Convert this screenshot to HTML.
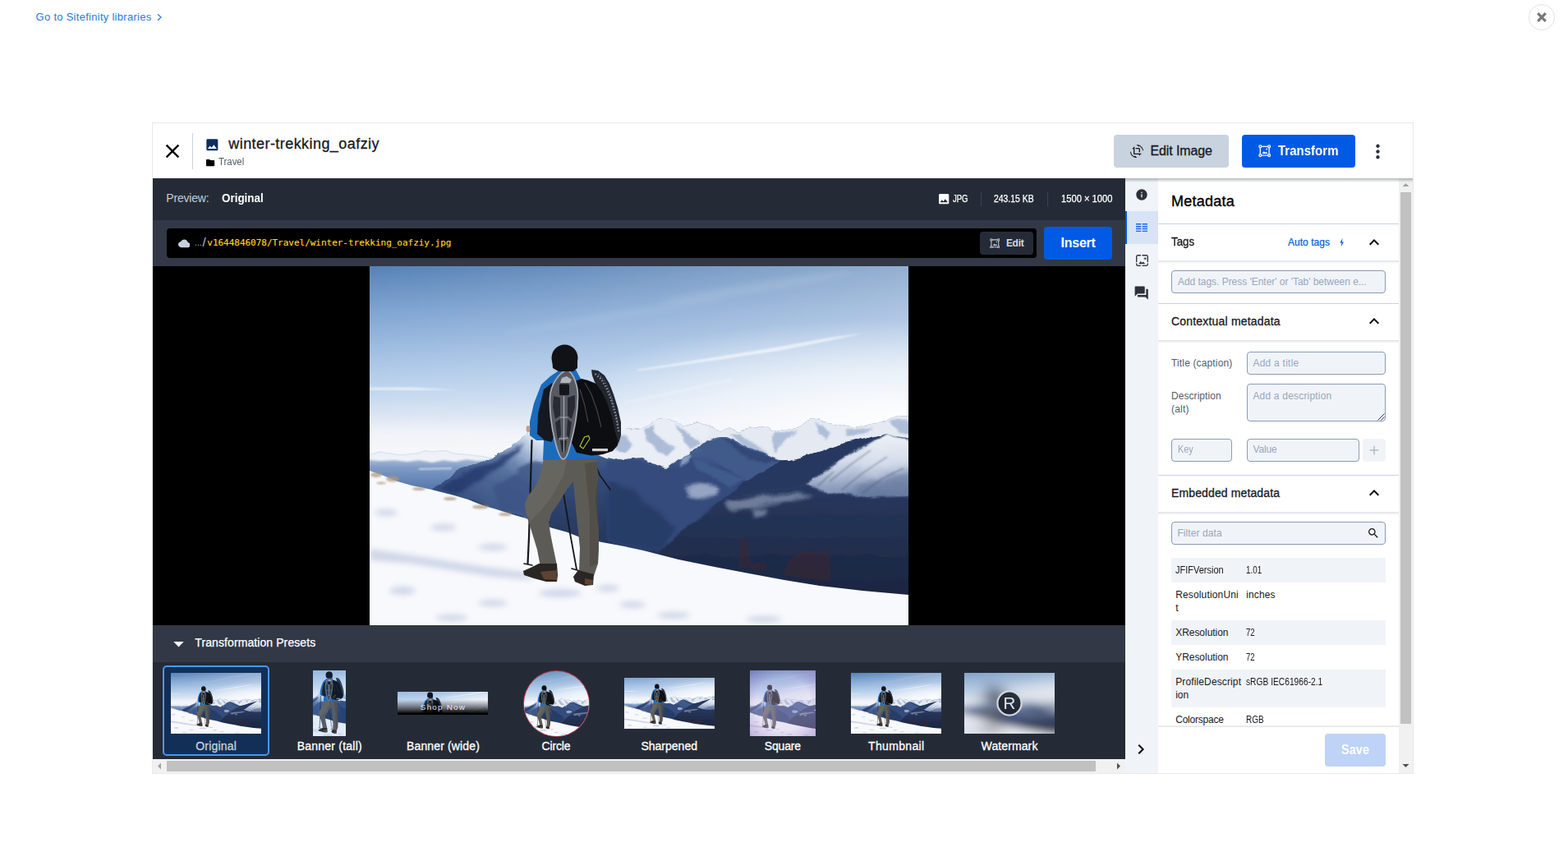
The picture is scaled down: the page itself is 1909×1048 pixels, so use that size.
<!DOCTYPE html>
<html lang="en"><head><meta charset="utf-8"><title>Media Library</title>
<style>
html,body{margin:0;padding:0;background:#fff}
body{width:1909px;height:1048px;position:relative;overflow:hidden;font-family:"Liberation Sans",sans-serif}
.t{position:absolute;white-space:nowrap;display:block}
.inp{position:absolute;box-sizing:border-box;background:#f0f4f9;border:1px solid #8a9ab5;border-radius:4px}
svg{display:block}
</style></head><body>

<span class="t" style="left:43.60px;top:13.80px;font:400 13px/1 'Liberation Sans',sans-serif;color:#2a7ad8;letter-spacing:0.277px;">Go to Sitefinity libraries</span>
<svg style="position:absolute;left:189px;top:15px" width="10" height="12" viewBox="0 0 10 12" fill="none" stroke="#2a7ad8" stroke-width="1.2"><path d="M3 2.2L7 6 3 9.8"/></svg>
<div style="position:absolute;left:1861px;top:5px;width:32px;height:32px;background:#fff;border:1px solid #e3e3e3;border-radius:50%;box-sizing:border-box"></div>
<svg style="position:absolute;left:1861px;top:5px" width="32" height="32" viewBox="0 0 32 32" stroke="#777" stroke-width="3.1" ><path d="M11.2 11.2L20.8 20.8M20.8 11.2L11.2 20.8"/></svg>
<div style="position:absolute;left:185px;top:149px;width:1536px;height:793px;background:#fff;border:1px solid #e9e9e9;box-sizing:border-box"></div>
<svg style="position:absolute;left:195.7px;top:169.7px;color:#000" width="28" height="28" viewBox="0 0 24 24" fill="#000" ><path d="M19 6.41L17.59 5 12 10.59 6.41 5 5 6.41 10.59 12 5 17.59 6.41 19 12 13.41 17.59 19 19 17.59 13.41 12z"/></svg>
<div style="position:absolute;left:234px;top:162px;width:1px;height:44px;background:#c9d4e2;"></div>
<svg style="position:absolute;left:248.7px;top:166.7px;color:#0c2d5e" width="18.7" height="18.7" viewBox="0 0 24 24" fill="#0c2d5e" ><path d="M21 19V5c0-1.1-.9-2-2-2H5c-1.1 0-2 .9-2 2v14c0 1.1.9 2 2 2h14c1.1 0 2-.9 2-2zM8.5 13.5l2.5 3.01L14.5 12l4.5 6H5l3.5-4.5z"/></svg>
<span class="t" style="left:278.30px;top:166.46px;font:400 18px/1 'Liberation Sans',sans-serif;color:#17191c;letter-spacing:0.435px;-webkit-text-stroke:0.3px #17191c;">winter-trekking_oafziy</span>
<svg style="position:absolute;left:250px;top:191.7px;color:#000" width="12.2" height="12.2" viewBox="0 0 24 24" fill="#000" ><path d="M10 4H4c-1.1 0-1.99.9-1.99 2L2 18c0 1.1.9 2 2 2h16c1.1 0 2-.9 2-2V8c0-1.1-.9-2-2-2h-8l-2-2z"/></svg>
<span class="t" style="left:265.80px;top:190.74px;font:400 12px/1 'Liberation Sans',sans-serif;color:#535c69;transform:scaleX(0.9485);transform-origin:0 0;">Travel</span>
<div style="position:absolute;left:1356px;top:164px;width:140px;height:40px;background:#c8d3df;border-radius:4px"></div>
<svg style="position:absolute;left:1376px;top:176px;color:#17191c" width="16" height="16" viewBox="0 0 24 24" fill="#17191c" ><path d="M7.47 21.49C4.2 19.93 1.86 16.76 1.5 13H0c.51 6.16 5.66 11 11.95 11 .23 0 .44-.02.66-.03L8.8 20.15l-1.33 1.34zM12.05 0c-.23 0-.44.02-.66.04l3.81 3.81 1.33-1.33C19.8 4.07 22.14 7.24 22.5 11H24c-.51-6.16-5.66-11-11.95-11zM16 14h2V8c0-1.11-.9-2-2-2h-6v2h6v6zm-8 2V4H6v2H4v2h2v8c0 1.1.89 2 2 2h8v2h2v-2h2v-2H8z"/></svg>
<span class="t" style="left:1400.50px;top:175.76px;font:400 16px/1 'Liberation Sans',sans-serif;color:#17191c;letter-spacing:-0.109px;-webkit-text-stroke:0.3px #17191c;">Edit Image</span>
<div style="position:absolute;left:1512px;top:164px;width:138px;height:40px;background:#005ae6;border-radius:4px"></div>
<svg style="position:absolute;left:1532.3px;top:176.3px;color:#fff" width="15.4" height="15.4" viewBox="0 0 24 24" fill="#fff" ><g fill="none" stroke="currentColor" stroke-width="2"><circle cx="3.6" cy="3.6" r="2.3"/><circle cx="20.4" cy="3.6" r="2.3"/><circle cx="3.6" cy="20.4" r="2.3"/><circle cx="20.4" cy="20.4" r="2.3"/><path d="M5.9 3.6h12.2M5.9 20.4h12.2M3.6 5.9v12.2M20.4 5.9v12.2"/></g><path fill="currentColor" d="M7 17l3.6-4.6 2.5 3 1.7-2.1 2.6 3.7zM14.4 8.6a1.4 1.4 0 1 0 2.8 0 1.4 1.4 0 1 0-2.8 0z"/></svg>
<span class="t" style="left:1556.30px;top:175.76px;font:700 16px/1 'Liberation Sans',sans-serif;color:#fff;transform:scaleX(0.9394);transform-origin:0 0;">Transform</span>
<svg style="position:absolute;left:1663.5px;top:170.5px;color:#2b303b" width="27" height="27" viewBox="0 0 24 24" fill="#2b303b" ><path d="M12 8c1.1 0 2-.9 2-2s-.9-2-2-2-2 .9-2 2 .9 2 2 2zm0 2c-1.1 0-2 .9-2 2s.9 2 2 2 2-.9 2-2-.9-2-2-2zm0 6c-1.1 0-2 .9-2 2s.9 2 2 2 2-.9 2-2-.9-2-2-2z"/></svg>
<div style="position:absolute;left:186px;top:217px;width:1184px;height:51px;background:#252b36;"></div>
<div style="position:absolute;left:186px;top:268px;width:1184px;height:56px;background:#323845;"></div>
<div style="position:absolute;left:186px;top:324px;width:1184px;height:437px;background:#000;"></div>
<div style="position:absolute;left:186px;top:761px;width:1184px;height:45px;background:#323845;"></div>
<div style="position:absolute;left:186px;top:806px;width:1184px;height:118px;background:#252b36;"></div>
<span class="t" style="left:202.30px;top:234.15px;font:400 14px/1 'Liberation Sans',sans-serif;color:#c3cbd7;letter-spacing:-0.198px;">Preview:</span>
<span class="t" style="left:270.10px;top:234.15px;font:700 14px/1 'Liberation Sans',sans-serif;color:#fff;transform:scaleX(0.9585);transform-origin:0 0;">Original</span>
<svg style="position:absolute;left:1140.7px;top:234px;color:#fff" width="16.3" height="16.3" viewBox="0 0 24 24" fill="#fff" ><path d="M21 19V5c0-1.1-.9-2-2-2H5c-1.1 0-2 .9-2 2v14c0 1.1.9 2 2 2h14c1.1 0 2-.9 2-2zM8.5 13.5l2.5 3.01L14.5 12l4.5 6H5l3.5-4.5z"/></svg>
<span class="t" style="left:1159.50px;top:235.54px;font:400 12px/1 'Liberation Sans',sans-serif;color:#fff;transform:scaleX(0.7927);transform-origin:0 0;-webkit-text-stroke:0.25px #fff;">JPG</span>
<div style="position:absolute;left:1194px;top:233px;width:1px;height:18px;background:#3a4150;"></div>
<span class="t" style="left:1210.30px;top:235.54px;font:400 12px/1 'Liberation Sans',sans-serif;color:#fff;transform:scaleX(0.8672);transform-origin:0 0;-webkit-text-stroke:0.25px #fff;">243.15 KB</span>
<div style="position:absolute;left:1275px;top:233px;width:1px;height:18px;background:#3a4150;"></div>
<span class="t" style="left:1291.60px;top:235.54px;font:400 12px/1 'Liberation Sans',sans-serif;color:#fff;transform:scaleX(0.9319);transform-origin:0 0;-webkit-text-stroke:0.25px #fff;">1500 × 1000</span>
<div style="position:absolute;left:203px;top:278px;width:1059px;height:36px;background:#000;border-radius:4px"></div>
<svg style="position:absolute;left:216.6px;top:289px;color:#c8d0dc" width="14.6" height="14.6" viewBox="0 0 24 24" fill="#c8d0dc" ><path d="M19.35 10.04C18.67 6.59 15.64 4 12 4 9.11 4 6.6 5.64 5.35 8.04 2.34 8.36 0 10.91 0 14c0 3.31 2.69 6 6 6h13c2.76 0 5-2.24 5-5 0-2.64-2.05-4.78-4.65-4.96z"/></svg>
<span class="t" style="left:237.00px;top:289.69px;font:400 11px/1 'Liberation Sans',sans-serif;color:#b4bfd0;transform:scaleX(0.8182);transform-origin:0 0;">…</span>
<span class="t" style="left:246.60px;top:287.30px;font:400 15px/1 'Liberation Sans',sans-serif;color:#b4c3dc;">/</span>
<span class="t" style="left:252.30px;top:289.69px;font:400 11px/1 'DejaVu Sans Mono','Liberation Mono',monospace;color:#ffd21f;letter-spacing:-0.021px;-webkit-text-stroke:0.15px #ffd21f;">v1644846078/Travel/winter-trekking_oafziy.jpg</span>
<div style="position:absolute;left:1193px;top:282px;width:65px;height:28px;background:#252b36;border-radius:4px"></div>
<svg style="position:absolute;left:1204.8px;top:289.6px;color:#c3cbd7" width="12.6" height="12.6" viewBox="0 0 24 24" fill="#c3cbd7" ><g fill="none" stroke="currentColor" stroke-width="2"><circle cx="3.6" cy="3.6" r="2.3"/><circle cx="20.4" cy="3.6" r="2.3"/><circle cx="3.6" cy="20.4" r="2.3"/><circle cx="20.4" cy="20.4" r="2.3"/><path d="M5.9 3.6h12.2M5.9 20.4h12.2M3.6 5.9v12.2M20.4 5.9v12.2"/></g><path fill="currentColor" d="M7 17l3.6-4.6 2.5 3 1.7-2.1 2.6 3.7zM14.4 8.6a1.4 1.4 0 1 0 2.8 0 1.4 1.4 0 1 0-2.8 0z"/></svg>
<span class="t" style="left:1224.90px;top:289.54px;font:700 12px/1 'Liberation Sans',sans-serif;color:#d3d9e2;letter-spacing:-0.288px;">Edit</span>
<div style="position:absolute;left:1271px;top:276px;width:83px;height:40px;background:#005ae6;border-radius:4px"></div>
<span class="t" style="left:1291.60px;top:288.36px;font:700 16px/1 'Liberation Sans',sans-serif;color:#fff;letter-spacing:-0.274px;">Insert</span>
<svg style="position:absolute;left:450px;top:324px" width="656" height="437" viewBox="0 0 656 437" preserveAspectRatio="none">
<defs>
<linearGradient id="msky" gradientUnits="userSpaceOnUse" x1="0" y1="0" x2="0" y2="222">
<stop offset="0" stop-color="#5681b6"/>
<stop offset="0.06" stop-color="#618bbd"/>
<stop offset="0.25" stop-color="#80a5d2"/>
<stop offset="0.5" stop-color="#a6c3e5"/>
<stop offset="0.7" stop-color="#c4d8ef"/>
<stop offset="0.85" stop-color="#e1e8f4"/>
<stop offset="1" stop-color="#f0f2f8"/>
</linearGradient>
<linearGradient id="mskyr" x1="0" y1="0" x2="1" y2="0">
<stop offset="0" stop-color="#fff" stop-opacity="0"/>
<stop offset="0.35" stop-color="#fff" stop-opacity="0.1"/>
<stop offset="1" stop-color="#fff" stop-opacity="0.36"/>
</linearGradient>
<radialGradient id="mglow" gradientUnits="userSpaceOnUse" cx="640" cy="185" r="1" gradientTransform="translate(640 185) scale(440 120) translate(-640 -185)">
<stop offset="0" stop-color="#fff" stop-opacity="0.9"/>
<stop offset="0.5" stop-color="#fff" stop-opacity="0.55"/>
<stop offset="1" stop-color="#fff" stop-opacity="0"/>
</radialGradient>
<linearGradient id="mhz" gradientUnits="userSpaceOnUse" x1="0" y1="232" x2="0" y2="275">
<stop offset="0" stop-color="#b4c5df"/>
<stop offset="0.3" stop-color="#809bc5"/>
<stop offset="1" stop-color="#4f72a8"/>
</linearGradient>
<linearGradient id="mbase" gradientUnits="userSpaceOnUse" x1="0" y1="195" x2="0" y2="400">
<stop offset="0" stop-color="#56739f"/>
<stop offset="0.25" stop-color="#364f80"/>
<stop offset="0.55" stop-color="#2a3d66"/>
<stop offset="1" stop-color="#1f2b49"/>
</linearGradient>
<linearGradient id="mlow" gradientUnits="userSpaceOnUse" x1="0" y1="270" x2="0" y2="400">
<stop offset="0" stop-color="#28385e"/>
<stop offset="1" stop-color="#1b2640"/>
</linearGradient>
<linearGradient id="mface" gradientUnits="userSpaceOnUse" x1="0" y1="205" x2="0" y2="282">
<stop offset="0" stop-color="#eef1f7"/>
<stop offset="0.45" stop-color="#d3dbea"/>
<stop offset="1" stop-color="#7487ab"/>
</linearGradient>
<linearGradient id="mm0" gradientUnits="userSpaceOnUse" x1="190" y1="200" x2="120" y2="290">
<stop offset="0" stop-color="#e3e9f3"/>
<stop offset="0.2" stop-color="#9cb0d2"/>
<stop offset="0.45" stop-color="#56739f"/>
<stop offset="1" stop-color="#38507f"/>
</linearGradient>
<filter id="mb1" x="-20%" y="-20%" width="140%" height="140%"><feGaussianBlur stdDeviation="1"/></filter>
<filter id="mb2" x="-20%" y="-20%" width="140%" height="140%"><feGaussianBlur stdDeviation="2"/></filter>
<filter id="mb3" x="-30%" y="-30%" width="160%" height="160%"><feGaussianBlur stdDeviation="3.5"/></filter>
<filter id="mb6" x="-30%" y="-30%" width="160%" height="160%"><feGaussianBlur stdDeviation="7"/></filter>
<filter id="mrough" x="-10" y="150" width="690" height="287" filterUnits="userSpaceOnUse" primitiveUnits="userSpaceOnUse">
<feTurbulence type="fractalNoise" baseFrequency="0.03 0.05" numOctaves="4" seed="7" result="n"/>
<feDisplacementMap in="SourceGraphic" in2="n" scale="9" xChannelSelector="R" yChannelSelector="G"/>
</filter>
</defs>
<rect width="656" height="437" fill="url(#msky)"/>
<rect width="656" height="240" fill="url(#mskyr)"/>
<rect width="656" height="320" fill="url(#mglow)"/>
<ellipse cx="60" cy="215" rx="200" ry="22" fill="#fff" opacity="0.35" filter="url(#mb6)"/>
<!-- contrails -->
<g fill="#fff">
<polygon points="326,126 420,111 500,98 560,87 603,81.5 560,90.5 500,102.5 420,114.5 326,127.5" opacity="0.62" filter="url(#mb1)"/>
<polygon points="310,165 380,150 440,137 441,139 382,153 310,167" opacity="0.22" filter="url(#mb1)"/>
<polygon points="0,148 50,147.5 105,150.5 50,151 0,150.5" opacity="0.6" filter="url(#mb1)"/>
<ellipse cx="470" cy="26" rx="120" ry="6" opacity="0.1" transform="rotate(-9 470 26)" filter="url(#mb3)"/>
<ellipse cx="300" cy="60" rx="140" ry="5" opacity="0.07" transform="rotate(-9 300 60)" filter="url(#mb3)"/>
</g>
<!-- distant left range -->
<path d="M0,229 L7,227 L14,225.5 L20,227 L26,227.5 L34,229 L43,229 L52,228 L60,227 L65,225 L69,224 L74,225.5 L80,225 L86,224.5 L93,224 L98,226 L103,227.5 L112,228.5 L120,229 L130,230.5 L137,231 L146,233 L160,236 L200,245 L200,300 L0,300 Z" fill="url(#mhz)"/>
<path d="M0,229 L7,227 L14,225.5 L20,227 L26,227.5 L34,229 L43,229 L52,228 L60,227 L65,225 L69,224 L74,225.5 L80,225 L86,224.5 L93,224 L98,226 L103,227.5 L112,228.5 L120,229 L130,230.5 L137,231 L146,233 L150,236 L130,237 L118,235 L104,238 L90,236 L76,239 L60,236 L46,238 L30,236 L14,237 L0,236 Z" fill="#eef2f8" filter="url(#mb1)"/>
<path d="M60,246 L100,245 L100,247 L60,248 Z" fill="#dbe4f1" opacity="0.8" filter="url(#mb1)"/>
<g filter="url(#mrough)">
<!-- mountain base -->
<path d="M75,271.5 L86,265 L103,253 L120,244.7 L137,237.8 L149,231 L163,224 L172,219 L180,212 L189,205 L193,201 L215,198 L290,200 L310,200 L330,198 L348,187 L358,186 L370,190 L382,196 L398,191 L410,196 L426,202 L438,196 L450,200 L466,196 L482,197 L490,202 L510,198 L526,192 L540,187 L550,189 L570,192 L590,196 L610,192 L630,190 L642.6,183 L676,185 L676,420 L75,420 Z" fill="url(#mbase)"/>
<!-- far snowy band right -->
<path d="M400,194 L410,196 L426,202 L438,196 L450,200 L466,196 L482,197 L490,202 L510,198 L526,192 L540,187 L550,189 L570,192 L590,196 L610,192 L630,190 L642.6,183 L676,185 L676,212 L640,207 L628,203 L610,208 L590,214 L570,219 L550,226 L530,232 L510,236 L496,236 L480,228 L466,222 L450,214 L436,208 L426,208 L412,212 L402,216 Z" fill="#e4e9f2"/>
<g fill="#9db0d0" opacity="0.75" filter="url(#mb1)">
<path d="M440,204 L452,202 L462,212 L474,222 L486,230 L470,226 L454,216 Z"/>
<path d="M492,204 L506,202 L520,198 L512,208 L500,218 L494,228 L488,214 Z"/>
<path d="M544,192 L552,196 L562,204 L556,214 L546,204 Z"/>
<path d="M580,198 L596,198 L612,196 L600,206 L584,208 Z"/>
<path d="M634,190 L644,188 L676,192 L676,206 L644,202 Z"/>
</g>
<!-- center blue mountain -->
<path d="M400,219 L412,213 L430,208.5 L444,214 L460,222 L480,230 L500,237 L488,246 L470,256 L456,263 L440,252 L424,240 L410,230 Z" fill="#3f5a8a"/>
<path d="M430,209 L444,214 L460,222 L480,230 L500,237 L480,240 L462,234 L446,224 Z" fill="#2f4573" opacity="0.8" filter="url(#mb1)"/>
<!-- M1 snow (right behind person) -->
<path d="M280,199 L290,200 L310,200 L330,198 L348,187 L358,186 L370,190 L382,196 L398,191 L410,196 L414,206 L402,218 L390,228 L376,234 L360,246 L350,242 L330,234 L310,236 L290,232 L280,228 Z" fill="#e9edf5"/>
<g fill="#9db0d0" opacity="0.8" filter="url(#mb1)">
<path d="M334,198 L346,192 L350,204 L360,214 L372,222 L364,230 L350,226 L340,214 Z"/>
<path d="M372,194 L384,200 L396,210 L404,214 L392,224 L384,214 Z"/>
<path d="M296,204 L312,206 L322,216 L312,226 L298,222 Z"/>
<path d="M380,232 L392,228 L388,240 L376,244 Z"/>
</g>
<!-- M1 face darker parts -->
<path d="M290,236 L330,238 L360,248 L380,240 L392,232 L420,244 L456,262 L436,280 L414,298 L390,314 L370,334 L356,346 L333,346 L290,335 Z" fill="#344b7b" filter="url(#mb1)"/>
<path d="M290,262 L320,274 L350,296 L372,318 L356,346 L333,346 L290,335 Z" fill="#283b65" opacity="0.85" filter="url(#mb2)"/>
<path d="M392,232 L420,244 L456,262 L440,268 L416,256 L398,246 Z" fill="#425e90" opacity="0.8" filter="url(#mb1)"/>
<path d="M386,268 L400,264 L414,266 L426,270 L420,280 L404,284 L390,282 Z" fill="#b5c3da" opacity="0.75" filter="url(#mb2)"/>
<!-- dark band (front ridge shadow face) -->
<path d="M628.5,203 L610,208 L590,214 L570,219 L550,226 L530,232 L510,236 L500,237 L488,246 L470,256 L456,263 L436,280 L470,276 L500,272 L530,267 L550,252 L570.5,238 L590.5,226 L610.5,214 Z" fill="#273960"/>
<!-- snowy face -->
<path d="M628.5,203 L642,209 L676,216 L676,279 L620,281 L590,281 L560,276 L540,270 L530,266 L550,252 L570.5,238 L590.5,226 L610.5,214 Z" fill="url(#mface)" filter="url(#mb1)"/>
<path d="M600,262 L630,256 L676,252 L676,282 L620,284 L590,282 Z" fill="#53688f" opacity="0.55" filter="url(#mb3)"/>
<!-- lower dark mass -->
<path d="M436,280 L470,276 L500,272 L530,267 L560,276 L590,281 L620,282 L676,280 L676,420 L340,420 L356,346 L372,330 L390,314 L414,298 Z" fill="url(#mlow)" filter="url(#mb1)"/>
<g fill="#a9b7d0" opacity="0.55" filter="url(#mb2)">
<path d="M432,288 L460,282 L490,280 L520,276 L540,280 L516,286 L486,290 L458,296 L440,300 Z"/>
<path d="M466,296 L486,294 L482,302 L468,304 Z"/>
</g>
<!-- M0 (left of person) -->
<path d="M75,271.5 L86,265 L103,253 L120,244.7 L137,237.8 L149,231 L163,224 L172,219 L180,212 L189,205 L193,201 L200,199 L218,200 L218,320 L189,306.5 L154.6,296 L120,284 Z" fill="url(#mm0)"/>
<path d="M84,270 L110,256 L140,242 L170,226 L190,212 L178,230 L150,250 L124,268 L104,278 Z" fill="#22366a" opacity="0.75" filter="url(#mb2)"/>
<path d="M150,270 L180,250 L200,236 L215,240 L215,312 L189,304 L160,295 Z" fill="#3a5384" opacity="0.8" filter="url(#mb2)"/>
</g>
<!-- bushes -->
<g fill="#40282e" opacity="0.5" filter="url(#mb1)">
<path d="M449,366 L451,344 L454,330 L457,328 L460,340 L463,356 L466,368 Z"/>
<ellipse cx="474" cy="366" rx="10" ry="5"/>
<path d="M504,376 L510,358 L520,350 L532,346 L546,350 L556,344 L562,360 L560,384 Z"/>
</g>
<g stroke="#3a4c74" stroke-width="1.4" opacity="0.5" fill="none" filter="url(#mb1)">
<path d="M560,262 L585,242 L610,224 M575,272 L600,252 L630,232 M600,276 L625,258 L650,246 M545,268 L565,250"/>
</g>
<!-- snow slope -->
<path d="M0,249 L17,255 L34,262 L51.5,267 L75.6,272 L103,279 L120,284 L137.4,291 L154.6,296 L171.7,301.4 L189,306.5 L221.5,318.5 L240.4,323.7 L257.6,330.6 L281.7,335.7 L310,341 L333,346 L376,357 L420,366 L462,374 L505,382 L548,389 L600,395 L656,400 L656,437 L0,437 Z" fill="#f8f9fc"/>
<!-- grass patches -->
<g fill="#b09a7c" opacity="0.75" filter="url(#mb1)">
<ellipse cx="28" cy="259" rx="8" ry="3.5"/>
<ellipse cx="8" cy="254" rx="7" ry="3"/>
<ellipse cx="14" cy="264" rx="6" ry="1.5"/>
<ellipse cx="60" cy="271" rx="8" ry="2"/>
<ellipse cx="98" cy="283" rx="8" ry="2"/>
<ellipse cx="135" cy="293" rx="10" ry="2.5"/>
<ellipse cx="165" cy="302" rx="8" ry="2"/>
</g>
<!-- snow shadows -->
<g fill="#c7d0e4" opacity="0.85" filter="url(#mb3)">
<path d="M0,344 L40,350 L90,358 L140,366 L188,372 L200,382 L150,378 L100,370 L50,362 L0,358 Z"/>
<ellipse cx="20" cy="300" rx="14" ry="4"/>
<ellipse cx="90" cy="318" rx="16" ry="4"/>
<ellipse cx="150" cy="342" rx="18" ry="4"/>
<ellipse cx="40" cy="395" rx="16" ry="5"/>
<ellipse cx="150" cy="410" rx="18" ry="4"/>
<ellipse cx="290" cy="392" rx="14" ry="4"/>
<ellipse cx="320" cy="412" rx="16" ry="4"/>
<ellipse cx="370" cy="425" rx="20" ry="4"/>
<ellipse cx="232" cy="398" rx="26" ry="5"/>
<ellipse cx="480" cy="430" rx="22" ry="4"/>
<ellipse cx="100" cy="428" rx="20" ry="4"/>
</g>

<g stroke="#15171c" stroke-linecap="round" fill="none">
<path d="M197.5,212 L196,262 L194,330 L192.5,362" stroke-width="2.2"/>
<path d="M188,362 L198,364" stroke-width="1.6"/>
<path d="M235,270 L244,325 L252,369" stroke-width="1.8"/>
<path d="M246,368 L256,371" stroke-width="1.6"/>
<path d="M273,236 L280,254 L293,272" stroke-width="1.6"/>
</g>
<path d="M212,235 L277,235 L278,258 L275,282 L277,305 L279,322 L279,345 L278,362 L273,377 L255,373 L256,343 L253,315 L251,295 L248,262 L240,272 L231,287 L222,300 L218,310 L220,325 L223,340 L228,364 L208,366 L204,345 L197,322 L190,300 L189,289 L194,278 L202,268 L208,252 Z" fill="#5d5b55"/>
<path d="M212,235 L240,235 L236,255 L222,280 L210,296 L196,310 L190,300 L189,289 L194,278 L202,268 L208,252 Z" fill="#6e6c65" opacity="0.6"/>
<path d="M262,240 L277,238 L279,322 L278,362 L268,366 L268,300 Z" fill="#48463f" opacity="0.55"/>
<path d="M206,362 L228,362 L229,376 L228,384 L215,384 L200,380 L188,376 L187,371 L196,367 Z" fill="#2a2624"/>
<path d="M208,372 L228,370 L228,382 L212,381 Z" fill="#6b4a36" opacity="0.8"/>
<path d="M254,370 L273,375 L272,388 L262,389 L250,384 L248,378 Z" fill="#2a2624"/>
<path d="M262,380 L272,382 L271,388 L262,387 Z" fill="#6b4a36" opacity="0.8"/>
<path d="M229,128 L251,126 L262,146 L276,160 L278,234 L211,236 L212,212 L203,212 L195,206 L195,189 L200,167 L209,144 L220,134 Z" fill="#1b6bbd"/>
<path d="M212,150 L222,142 L228,150 L226,200 L222,214 L213,212 L204,204 L205,180 Z" fill="#15191f"/>
<ellipse cx="193" cy="198" rx="2.5" ry="4" fill="#c99a8a"/>
<path d="M250,140 L258,137 L266,139 L276,143 L286,150 L294,160 L300,174 L303,190 L304,206 L302,218 L296,225 L284,229 L270,230.5 L252,227 L246,215 L246,160 Z" fill="#0d0e12"/>
<path d="M270,126 L278,127 L286,133 L292,143 L297,156 L302,172 L306,190 L306,206 L303,216 L299,202 L295,184 L289,166 L282,152 L274,141 L271,133 Z" fill="#23262d"/>
<path d="M274.5,131 L282,137.5 L289,149.5 L295,165 L300,183 L303.5,202" stroke="#9fb0c9" stroke-width="2.4" stroke-dasharray="1.6 2.2" fill="none" opacity="0.75"/><path d="M279,131 L286.5,140 L293.5,156 L298.5,174 L302.5,192" stroke="#8797b0" stroke-width="1.2" stroke-dasharray="1.4 2" fill="none" opacity="0.7"/>
<path d="M262,142 L270,156 L277,176 L282,196 M256,150 L262,170 L266,190" stroke="#5a5f6a" stroke-width="1.1" fill="none" opacity="0.7"/>
<path d="M240.5,126 C248,130 254,145 253.5,160 C253,185 248,205 243,222 C241,230 238,235 235.5,235 C232,234 229,226 226,214 C222,198 219,178 219.5,160 C220,145 230,130 240.5,126 Z" fill="#565a63" stroke="#a9aeb6" stroke-width="1.7"/>
<path d="M234,136 L240,134 L246,138 L244,142 L232,142 Z" fill="#c9ccd2" opacity="0.8"/>
<path d="M224,158 L232,160 L232,182 L226,186 L223,172 Z M241,160 L250,157 L250,172 L246,186 L241,182 Z M226,190 L232,186 L233,206 L229,212 Z M241,186 L246,190 L243,210 L240,206 Z M232,212 L240,212 L238,226 L234,226 Z" fill="#24262c" opacity="0.9"/>
<path d="M236.5,158 L236.5,226 M232,184 L241,184 M230,210 L242,209" stroke="#b4b8c0" stroke-width="1.1" fill="none" opacity="0.9"/>
<rect x="231" y="143.5" width="12" height="13.5" rx="1.5" fill="#15161a"/>
<path d="M256,219 L261.5,208 L266.5,206.5 L268,210 L260,222 Z" fill="none" stroke="#b9c23a" stroke-width="1.1"/>
<rect x="271" y="222" width="19" height="3.2" fill="#e6e6e6" opacity="0.9"/>
<ellipse cx="237.5" cy="111.5" rx="16" ry="16" fill="#111216"/>
<path d="M222,112 L253,112 L253,124 L248,128 L230,128 L223,124 Z" fill="#111216"/>
</svg>
<svg style="position:absolute;left:211px;top:781px" width="13" height="7" viewBox="0 0 13 7" fill="#fff"><path d="M0.3 0h12.4L6.5 6.6z"/></svg>
<span class="t" style="left:237.30px;top:774.95px;font:400 14px/1 'Liberation Sans',sans-serif;color:#fff;letter-spacing:0.092px;-webkit-text-stroke:0.25px #fff;">Transformation Presets</span>
<div style="position:absolute;left:198px;top:810px;width:130px;height:110px;background:#122f57;border:2px solid #4d97e8;border-radius:5px;box-sizing:border-box"></div>
<svg style="position:absolute;left:208px;top:819px;" width="110" height="74" viewBox="0 0 656 437" preserveAspectRatio="none">
<defs>
<linearGradient id="t1sky" gradientUnits="userSpaceOnUse" x1="0" y1="0" x2="0" y2="222">
<stop offset="0" stop-color="#5681b6"/>
<stop offset="0.06" stop-color="#618bbd"/>
<stop offset="0.25" stop-color="#80a5d2"/>
<stop offset="0.5" stop-color="#a6c3e5"/>
<stop offset="0.7" stop-color="#c4d8ef"/>
<stop offset="0.85" stop-color="#e1e8f4"/>
<stop offset="1" stop-color="#f0f2f8"/>
</linearGradient>
<linearGradient id="t1skyr" x1="0" y1="0" x2="1" y2="0">
<stop offset="0" stop-color="#fff" stop-opacity="0"/>
<stop offset="0.35" stop-color="#fff" stop-opacity="0.1"/>
<stop offset="1" stop-color="#fff" stop-opacity="0.36"/>
</linearGradient>
<radialGradient id="t1glow" gradientUnits="userSpaceOnUse" cx="640" cy="185" r="1" gradientTransform="translate(640 185) scale(440 120) translate(-640 -185)">
<stop offset="0" stop-color="#fff" stop-opacity="0.9"/>
<stop offset="0.5" stop-color="#fff" stop-opacity="0.55"/>
<stop offset="1" stop-color="#fff" stop-opacity="0"/>
</radialGradient>
<linearGradient id="t1hz" gradientUnits="userSpaceOnUse" x1="0" y1="232" x2="0" y2="275">
<stop offset="0" stop-color="#b4c5df"/>
<stop offset="0.3" stop-color="#809bc5"/>
<stop offset="1" stop-color="#4f72a8"/>
</linearGradient>
<linearGradient id="t1base" gradientUnits="userSpaceOnUse" x1="0" y1="195" x2="0" y2="400">
<stop offset="0" stop-color="#56739f"/>
<stop offset="0.25" stop-color="#364f80"/>
<stop offset="0.55" stop-color="#2a3d66"/>
<stop offset="1" stop-color="#1f2b49"/>
</linearGradient>
<linearGradient id="t1low" gradientUnits="userSpaceOnUse" x1="0" y1="270" x2="0" y2="400">
<stop offset="0" stop-color="#28385e"/>
<stop offset="1" stop-color="#1b2640"/>
</linearGradient>
<linearGradient id="t1face" gradientUnits="userSpaceOnUse" x1="0" y1="205" x2="0" y2="282">
<stop offset="0" stop-color="#eef1f7"/>
<stop offset="0.45" stop-color="#d3dbea"/>
<stop offset="1" stop-color="#7487ab"/>
</linearGradient>
<linearGradient id="t1m0" gradientUnits="userSpaceOnUse" x1="190" y1="200" x2="120" y2="290">
<stop offset="0" stop-color="#e3e9f3"/>
<stop offset="0.2" stop-color="#9cb0d2"/>
<stop offset="0.45" stop-color="#56739f"/>
<stop offset="1" stop-color="#38507f"/>
</linearGradient>
<filter id="t1b1" x="-20%" y="-20%" width="140%" height="140%"><feGaussianBlur stdDeviation="1"/></filter>
<filter id="t1b2" x="-20%" y="-20%" width="140%" height="140%"><feGaussianBlur stdDeviation="2"/></filter>
<filter id="t1b3" x="-30%" y="-30%" width="160%" height="160%"><feGaussianBlur stdDeviation="3.5"/></filter>
<filter id="t1b6" x="-30%" y="-30%" width="160%" height="160%"><feGaussianBlur stdDeviation="7"/></filter>
<filter id="t1rough" x="-10" y="150" width="690" height="287" filterUnits="userSpaceOnUse" primitiveUnits="userSpaceOnUse">
<feTurbulence type="fractalNoise" baseFrequency="0.03 0.05" numOctaves="4" seed="7" result="n"/>
<feDisplacementMap in="SourceGraphic" in2="n" scale="9" xChannelSelector="R" yChannelSelector="G"/>
</filter>
</defs>
<rect width="656" height="437" fill="url(#t1sky)"/>
<rect width="656" height="240" fill="url(#t1skyr)"/>
<rect width="656" height="320" fill="url(#t1glow)"/>
<ellipse cx="60" cy="215" rx="200" ry="22" fill="#fff" opacity="0.35" filter="url(#t1b6)"/>
<!-- contrails -->
<g fill="#fff">
<polygon points="326,126 420,111 500,98 560,87 603,81.5 560,90.5 500,102.5 420,114.5 326,127.5" opacity="0.62" filter="url(#t1b1)"/>
<polygon points="310,165 380,150 440,137 441,139 382,153 310,167" opacity="0.22" filter="url(#t1b1)"/>
<polygon points="0,148 50,147.5 105,150.5 50,151 0,150.5" opacity="0.6" filter="url(#t1b1)"/>
<ellipse cx="470" cy="26" rx="120" ry="6" opacity="0.1" transform="rotate(-9 470 26)" filter="url(#t1b3)"/>
<ellipse cx="300" cy="60" rx="140" ry="5" opacity="0.07" transform="rotate(-9 300 60)" filter="url(#t1b3)"/>
</g>
<!-- distant left range -->
<path d="M0,229 L7,227 L14,225.5 L20,227 L26,227.5 L34,229 L43,229 L52,228 L60,227 L65,225 L69,224 L74,225.5 L80,225 L86,224.5 L93,224 L98,226 L103,227.5 L112,228.5 L120,229 L130,230.5 L137,231 L146,233 L160,236 L200,245 L200,300 L0,300 Z" fill="url(#t1hz)"/>
<path d="M0,229 L7,227 L14,225.5 L20,227 L26,227.5 L34,229 L43,229 L52,228 L60,227 L65,225 L69,224 L74,225.5 L80,225 L86,224.5 L93,224 L98,226 L103,227.5 L112,228.5 L120,229 L130,230.5 L137,231 L146,233 L150,236 L130,237 L118,235 L104,238 L90,236 L76,239 L60,236 L46,238 L30,236 L14,237 L0,236 Z" fill="#eef2f8" filter="url(#t1b1)"/>
<path d="M60,246 L100,245 L100,247 L60,248 Z" fill="#dbe4f1" opacity="0.8" filter="url(#t1b1)"/>
<g filter="url(#t1rough)">
<!-- mountain base -->
<path d="M75,271.5 L86,265 L103,253 L120,244.7 L137,237.8 L149,231 L163,224 L172,219 L180,212 L189,205 L193,201 L215,198 L290,200 L310,200 L330,198 L348,187 L358,186 L370,190 L382,196 L398,191 L410,196 L426,202 L438,196 L450,200 L466,196 L482,197 L490,202 L510,198 L526,192 L540,187 L550,189 L570,192 L590,196 L610,192 L630,190 L642.6,183 L676,185 L676,420 L75,420 Z" fill="url(#t1base)"/>
<!-- far snowy band right -->
<path d="M400,194 L410,196 L426,202 L438,196 L450,200 L466,196 L482,197 L490,202 L510,198 L526,192 L540,187 L550,189 L570,192 L590,196 L610,192 L630,190 L642.6,183 L676,185 L676,212 L640,207 L628,203 L610,208 L590,214 L570,219 L550,226 L530,232 L510,236 L496,236 L480,228 L466,222 L450,214 L436,208 L426,208 L412,212 L402,216 Z" fill="#e4e9f2"/>
<g fill="#9db0d0" opacity="0.75" filter="url(#t1b1)">
<path d="M440,204 L452,202 L462,212 L474,222 L486,230 L470,226 L454,216 Z"/>
<path d="M492,204 L506,202 L520,198 L512,208 L500,218 L494,228 L488,214 Z"/>
<path d="M544,192 L552,196 L562,204 L556,214 L546,204 Z"/>
<path d="M580,198 L596,198 L612,196 L600,206 L584,208 Z"/>
<path d="M634,190 L644,188 L676,192 L676,206 L644,202 Z"/>
</g>
<!-- center blue mountain -->
<path d="M400,219 L412,213 L430,208.5 L444,214 L460,222 L480,230 L500,237 L488,246 L470,256 L456,263 L440,252 L424,240 L410,230 Z" fill="#3f5a8a"/>
<path d="M430,209 L444,214 L460,222 L480,230 L500,237 L480,240 L462,234 L446,224 Z" fill="#2f4573" opacity="0.8" filter="url(#t1b1)"/>
<!-- M1 snow (right behind person) -->
<path d="M280,199 L290,200 L310,200 L330,198 L348,187 L358,186 L370,190 L382,196 L398,191 L410,196 L414,206 L402,218 L390,228 L376,234 L360,246 L350,242 L330,234 L310,236 L290,232 L280,228 Z" fill="#e9edf5"/>
<g fill="#9db0d0" opacity="0.8" filter="url(#t1b1)">
<path d="M334,198 L346,192 L350,204 L360,214 L372,222 L364,230 L350,226 L340,214 Z"/>
<path d="M372,194 L384,200 L396,210 L404,214 L392,224 L384,214 Z"/>
<path d="M296,204 L312,206 L322,216 L312,226 L298,222 Z"/>
<path d="M380,232 L392,228 L388,240 L376,244 Z"/>
</g>
<!-- M1 face darker parts -->
<path d="M290,236 L330,238 L360,248 L380,240 L392,232 L420,244 L456,262 L436,280 L414,298 L390,314 L370,334 L356,346 L333,346 L290,335 Z" fill="#344b7b" filter="url(#t1b1)"/>
<path d="M290,262 L320,274 L350,296 L372,318 L356,346 L333,346 L290,335 Z" fill="#283b65" opacity="0.85" filter="url(#t1b2)"/>
<path d="M392,232 L420,244 L456,262 L440,268 L416,256 L398,246 Z" fill="#425e90" opacity="0.8" filter="url(#t1b1)"/>
<path d="M386,268 L400,264 L414,266 L426,270 L420,280 L404,284 L390,282 Z" fill="#b5c3da" opacity="0.75" filter="url(#t1b2)"/>
<!-- dark band (front ridge shadow face) -->
<path d="M628.5,203 L610,208 L590,214 L570,219 L550,226 L530,232 L510,236 L500,237 L488,246 L470,256 L456,263 L436,280 L470,276 L500,272 L530,267 L550,252 L570.5,238 L590.5,226 L610.5,214 Z" fill="#273960"/>
<!-- snowy face -->
<path d="M628.5,203 L642,209 L676,216 L676,279 L620,281 L590,281 L560,276 L540,270 L530,266 L550,252 L570.5,238 L590.5,226 L610.5,214 Z" fill="url(#t1face)" filter="url(#t1b1)"/>
<path d="M600,262 L630,256 L676,252 L676,282 L620,284 L590,282 Z" fill="#53688f" opacity="0.55" filter="url(#t1b3)"/>
<!-- lower dark mass -->
<path d="M436,280 L470,276 L500,272 L530,267 L560,276 L590,281 L620,282 L676,280 L676,420 L340,420 L356,346 L372,330 L390,314 L414,298 Z" fill="url(#t1low)" filter="url(#t1b1)"/>
<g fill="#a9b7d0" opacity="0.55" filter="url(#t1b2)">
<path d="M432,288 L460,282 L490,280 L520,276 L540,280 L516,286 L486,290 L458,296 L440,300 Z"/>
<path d="M466,296 L486,294 L482,302 L468,304 Z"/>
</g>
<!-- M0 (left of person) -->
<path d="M75,271.5 L86,265 L103,253 L120,244.7 L137,237.8 L149,231 L163,224 L172,219 L180,212 L189,205 L193,201 L200,199 L218,200 L218,320 L189,306.5 L154.6,296 L120,284 Z" fill="url(#t1m0)"/>
<path d="M84,270 L110,256 L140,242 L170,226 L190,212 L178,230 L150,250 L124,268 L104,278 Z" fill="#22366a" opacity="0.75" filter="url(#t1b2)"/>
<path d="M150,270 L180,250 L200,236 L215,240 L215,312 L189,304 L160,295 Z" fill="#3a5384" opacity="0.8" filter="url(#t1b2)"/>
</g>
<!-- bushes -->
<g fill="#40282e" opacity="0.5" filter="url(#t1b1)">
<path d="M449,366 L451,344 L454,330 L457,328 L460,340 L463,356 L466,368 Z"/>
<ellipse cx="474" cy="366" rx="10" ry="5"/>
<path d="M504,376 L510,358 L520,350 L532,346 L546,350 L556,344 L562,360 L560,384 Z"/>
</g>
<g stroke="#3a4c74" stroke-width="1.4" opacity="0.5" fill="none" filter="url(#t1b1)">
<path d="M560,262 L585,242 L610,224 M575,272 L600,252 L630,232 M600,276 L625,258 L650,246 M545,268 L565,250"/>
</g>
<!-- snow slope -->
<path d="M0,249 L17,255 L34,262 L51.5,267 L75.6,272 L103,279 L120,284 L137.4,291 L154.6,296 L171.7,301.4 L189,306.5 L221.5,318.5 L240.4,323.7 L257.6,330.6 L281.7,335.7 L310,341 L333,346 L376,357 L420,366 L462,374 L505,382 L548,389 L600,395 L656,400 L656,437 L0,437 Z" fill="#f8f9fc"/>
<!-- grass patches -->
<g fill="#b09a7c" opacity="0.75" filter="url(#t1b1)">
<ellipse cx="28" cy="259" rx="8" ry="3.5"/>
<ellipse cx="8" cy="254" rx="7" ry="3"/>
<ellipse cx="14" cy="264" rx="6" ry="1.5"/>
<ellipse cx="60" cy="271" rx="8" ry="2"/>
<ellipse cx="98" cy="283" rx="8" ry="2"/>
<ellipse cx="135" cy="293" rx="10" ry="2.5"/>
<ellipse cx="165" cy="302" rx="8" ry="2"/>
</g>
<!-- snow shadows -->
<g fill="#c7d0e4" opacity="0.85" filter="url(#t1b3)">
<path d="M0,344 L40,350 L90,358 L140,366 L188,372 L200,382 L150,378 L100,370 L50,362 L0,358 Z"/>
<ellipse cx="20" cy="300" rx="14" ry="4"/>
<ellipse cx="90" cy="318" rx="16" ry="4"/>
<ellipse cx="150" cy="342" rx="18" ry="4"/>
<ellipse cx="40" cy="395" rx="16" ry="5"/>
<ellipse cx="150" cy="410" rx="18" ry="4"/>
<ellipse cx="290" cy="392" rx="14" ry="4"/>
<ellipse cx="320" cy="412" rx="16" ry="4"/>
<ellipse cx="370" cy="425" rx="20" ry="4"/>
<ellipse cx="232" cy="398" rx="26" ry="5"/>
<ellipse cx="480" cy="430" rx="22" ry="4"/>
<ellipse cx="100" cy="428" rx="20" ry="4"/>
</g>

<g stroke="#15171c" stroke-linecap="round" fill="none">
<path d="M197.5,212 L196,262 L194,330 L192.5,362" stroke-width="2.2"/>
<path d="M188,362 L198,364" stroke-width="1.6"/>
<path d="M235,270 L244,325 L252,369" stroke-width="1.8"/>
<path d="M246,368 L256,371" stroke-width="1.6"/>
<path d="M273,236 L280,254 L293,272" stroke-width="1.6"/>
</g>
<path d="M212,235 L277,235 L278,258 L275,282 L277,305 L279,322 L279,345 L278,362 L273,377 L255,373 L256,343 L253,315 L251,295 L248,262 L240,272 L231,287 L222,300 L218,310 L220,325 L223,340 L228,364 L208,366 L204,345 L197,322 L190,300 L189,289 L194,278 L202,268 L208,252 Z" fill="#5d5b55"/>
<path d="M212,235 L240,235 L236,255 L222,280 L210,296 L196,310 L190,300 L189,289 L194,278 L202,268 L208,252 Z" fill="#6e6c65" opacity="0.6"/>
<path d="M262,240 L277,238 L279,322 L278,362 L268,366 L268,300 Z" fill="#48463f" opacity="0.55"/>
<path d="M206,362 L228,362 L229,376 L228,384 L215,384 L200,380 L188,376 L187,371 L196,367 Z" fill="#2a2624"/>
<path d="M208,372 L228,370 L228,382 L212,381 Z" fill="#6b4a36" opacity="0.8"/>
<path d="M254,370 L273,375 L272,388 L262,389 L250,384 L248,378 Z" fill="#2a2624"/>
<path d="M262,380 L272,382 L271,388 L262,387 Z" fill="#6b4a36" opacity="0.8"/>
<path d="M229,128 L251,126 L262,146 L276,160 L278,234 L211,236 L212,212 L203,212 L195,206 L195,189 L200,167 L209,144 L220,134 Z" fill="#1b6bbd"/>
<path d="M212,150 L222,142 L228,150 L226,200 L222,214 L213,212 L204,204 L205,180 Z" fill="#15191f"/>
<ellipse cx="193" cy="198" rx="2.5" ry="4" fill="#c99a8a"/>
<path d="M250,140 L258,137 L266,139 L276,143 L286,150 L294,160 L300,174 L303,190 L304,206 L302,218 L296,225 L284,229 L270,230.5 L252,227 L246,215 L246,160 Z" fill="#0d0e12"/>
<path d="M270,126 L278,127 L286,133 L292,143 L297,156 L302,172 L306,190 L306,206 L303,216 L299,202 L295,184 L289,166 L282,152 L274,141 L271,133 Z" fill="#23262d"/>
<path d="M274.5,131 L282,137.5 L289,149.5 L295,165 L300,183 L303.5,202" stroke="#9fb0c9" stroke-width="2.4" stroke-dasharray="1.6 2.2" fill="none" opacity="0.75"/><path d="M279,131 L286.5,140 L293.5,156 L298.5,174 L302.5,192" stroke="#8797b0" stroke-width="1.2" stroke-dasharray="1.4 2" fill="none" opacity="0.7"/>
<path d="M262,142 L270,156 L277,176 L282,196 M256,150 L262,170 L266,190" stroke="#5a5f6a" stroke-width="1.1" fill="none" opacity="0.7"/>
<path d="M240.5,126 C248,130 254,145 253.5,160 C253,185 248,205 243,222 C241,230 238,235 235.5,235 C232,234 229,226 226,214 C222,198 219,178 219.5,160 C220,145 230,130 240.5,126 Z" fill="#565a63" stroke="#a9aeb6" stroke-width="1.7"/>
<path d="M234,136 L240,134 L246,138 L244,142 L232,142 Z" fill="#c9ccd2" opacity="0.8"/>
<path d="M224,158 L232,160 L232,182 L226,186 L223,172 Z M241,160 L250,157 L250,172 L246,186 L241,182 Z M226,190 L232,186 L233,206 L229,212 Z M241,186 L246,190 L243,210 L240,206 Z M232,212 L240,212 L238,226 L234,226 Z" fill="#24262c" opacity="0.9"/>
<path d="M236.5,158 L236.5,226 M232,184 L241,184 M230,210 L242,209" stroke="#b4b8c0" stroke-width="1.1" fill="none" opacity="0.9"/>
<rect x="231" y="143.5" width="12" height="13.5" rx="1.5" fill="#15161a"/>
<path d="M256,219 L261.5,208 L266.5,206.5 L268,210 L260,222 Z" fill="none" stroke="#b9c23a" stroke-width="1.1"/>
<rect x="271" y="222" width="19" height="3.2" fill="#e6e6e6" opacity="0.9"/>
<ellipse cx="237.5" cy="111.5" rx="16" ry="16" fill="#111216"/>
<path d="M222,112 L253,112 L253,124 L248,128 L230,128 L223,124 Z" fill="#111216"/>
</svg>
<svg style="position:absolute;left:381px;top:816px;" width="40" height="80" viewBox="161 91 155 310" preserveAspectRatio="none">
<defs>
<linearGradient id="t2sky" gradientUnits="userSpaceOnUse" x1="0" y1="0" x2="0" y2="222">
<stop offset="0" stop-color="#5681b6"/>
<stop offset="0.06" stop-color="#618bbd"/>
<stop offset="0.25" stop-color="#80a5d2"/>
<stop offset="0.5" stop-color="#a6c3e5"/>
<stop offset="0.7" stop-color="#c4d8ef"/>
<stop offset="0.85" stop-color="#e1e8f4"/>
<stop offset="1" stop-color="#f0f2f8"/>
</linearGradient>
<linearGradient id="t2skyr" x1="0" y1="0" x2="1" y2="0">
<stop offset="0" stop-color="#fff" stop-opacity="0"/>
<stop offset="0.35" stop-color="#fff" stop-opacity="0.1"/>
<stop offset="1" stop-color="#fff" stop-opacity="0.36"/>
</linearGradient>
<radialGradient id="t2glow" gradientUnits="userSpaceOnUse" cx="640" cy="185" r="1" gradientTransform="translate(640 185) scale(440 120) translate(-640 -185)">
<stop offset="0" stop-color="#fff" stop-opacity="0.9"/>
<stop offset="0.5" stop-color="#fff" stop-opacity="0.55"/>
<stop offset="1" stop-color="#fff" stop-opacity="0"/>
</radialGradient>
<linearGradient id="t2hz" gradientUnits="userSpaceOnUse" x1="0" y1="232" x2="0" y2="275">
<stop offset="0" stop-color="#b4c5df"/>
<stop offset="0.3" stop-color="#809bc5"/>
<stop offset="1" stop-color="#4f72a8"/>
</linearGradient>
<linearGradient id="t2base" gradientUnits="userSpaceOnUse" x1="0" y1="195" x2="0" y2="400">
<stop offset="0" stop-color="#56739f"/>
<stop offset="0.25" stop-color="#364f80"/>
<stop offset="0.55" stop-color="#2a3d66"/>
<stop offset="1" stop-color="#1f2b49"/>
</linearGradient>
<linearGradient id="t2low" gradientUnits="userSpaceOnUse" x1="0" y1="270" x2="0" y2="400">
<stop offset="0" stop-color="#28385e"/>
<stop offset="1" stop-color="#1b2640"/>
</linearGradient>
<linearGradient id="t2face" gradientUnits="userSpaceOnUse" x1="0" y1="205" x2="0" y2="282">
<stop offset="0" stop-color="#eef1f7"/>
<stop offset="0.45" stop-color="#d3dbea"/>
<stop offset="1" stop-color="#7487ab"/>
</linearGradient>
<linearGradient id="t2m0" gradientUnits="userSpaceOnUse" x1="190" y1="200" x2="120" y2="290">
<stop offset="0" stop-color="#e3e9f3"/>
<stop offset="0.2" stop-color="#9cb0d2"/>
<stop offset="0.45" stop-color="#56739f"/>
<stop offset="1" stop-color="#38507f"/>
</linearGradient>
<filter id="t2b1" x="-20%" y="-20%" width="140%" height="140%"><feGaussianBlur stdDeviation="1"/></filter>
<filter id="t2b2" x="-20%" y="-20%" width="140%" height="140%"><feGaussianBlur stdDeviation="2"/></filter>
<filter id="t2b3" x="-30%" y="-30%" width="160%" height="160%"><feGaussianBlur stdDeviation="3.5"/></filter>
<filter id="t2b6" x="-30%" y="-30%" width="160%" height="160%"><feGaussianBlur stdDeviation="7"/></filter>
<filter id="t2rough" x="-10" y="150" width="690" height="287" filterUnits="userSpaceOnUse" primitiveUnits="userSpaceOnUse">
<feTurbulence type="fractalNoise" baseFrequency="0.03 0.05" numOctaves="4" seed="7" result="n"/>
<feDisplacementMap in="SourceGraphic" in2="n" scale="9" xChannelSelector="R" yChannelSelector="G"/>
</filter>
</defs>
<rect width="656" height="437" fill="url(#t2sky)"/>
<rect width="656" height="240" fill="url(#t2skyr)"/>
<rect width="656" height="320" fill="url(#t2glow)"/>
<ellipse cx="60" cy="215" rx="200" ry="22" fill="#fff" opacity="0.35" filter="url(#t2b6)"/>
<!-- contrails -->
<g fill="#fff">
<polygon points="326,126 420,111 500,98 560,87 603,81.5 560,90.5 500,102.5 420,114.5 326,127.5" opacity="0.62" filter="url(#t2b1)"/>
<polygon points="310,165 380,150 440,137 441,139 382,153 310,167" opacity="0.22" filter="url(#t2b1)"/>
<polygon points="0,148 50,147.5 105,150.5 50,151 0,150.5" opacity="0.6" filter="url(#t2b1)"/>
<ellipse cx="470" cy="26" rx="120" ry="6" opacity="0.1" transform="rotate(-9 470 26)" filter="url(#t2b3)"/>
<ellipse cx="300" cy="60" rx="140" ry="5" opacity="0.07" transform="rotate(-9 300 60)" filter="url(#t2b3)"/>
</g>
<!-- distant left range -->
<path d="M0,229 L7,227 L14,225.5 L20,227 L26,227.5 L34,229 L43,229 L52,228 L60,227 L65,225 L69,224 L74,225.5 L80,225 L86,224.5 L93,224 L98,226 L103,227.5 L112,228.5 L120,229 L130,230.5 L137,231 L146,233 L160,236 L200,245 L200,300 L0,300 Z" fill="url(#t2hz)"/>
<path d="M0,229 L7,227 L14,225.5 L20,227 L26,227.5 L34,229 L43,229 L52,228 L60,227 L65,225 L69,224 L74,225.5 L80,225 L86,224.5 L93,224 L98,226 L103,227.5 L112,228.5 L120,229 L130,230.5 L137,231 L146,233 L150,236 L130,237 L118,235 L104,238 L90,236 L76,239 L60,236 L46,238 L30,236 L14,237 L0,236 Z" fill="#eef2f8" filter="url(#t2b1)"/>
<path d="M60,246 L100,245 L100,247 L60,248 Z" fill="#dbe4f1" opacity="0.8" filter="url(#t2b1)"/>
<g filter="url(#t2rough)">
<!-- mountain base -->
<path d="M75,271.5 L86,265 L103,253 L120,244.7 L137,237.8 L149,231 L163,224 L172,219 L180,212 L189,205 L193,201 L215,198 L290,200 L310,200 L330,198 L348,187 L358,186 L370,190 L382,196 L398,191 L410,196 L426,202 L438,196 L450,200 L466,196 L482,197 L490,202 L510,198 L526,192 L540,187 L550,189 L570,192 L590,196 L610,192 L630,190 L642.6,183 L676,185 L676,420 L75,420 Z" fill="url(#t2base)"/>
<!-- far snowy band right -->
<path d="M400,194 L410,196 L426,202 L438,196 L450,200 L466,196 L482,197 L490,202 L510,198 L526,192 L540,187 L550,189 L570,192 L590,196 L610,192 L630,190 L642.6,183 L676,185 L676,212 L640,207 L628,203 L610,208 L590,214 L570,219 L550,226 L530,232 L510,236 L496,236 L480,228 L466,222 L450,214 L436,208 L426,208 L412,212 L402,216 Z" fill="#e4e9f2"/>
<g fill="#9db0d0" opacity="0.75" filter="url(#t2b1)">
<path d="M440,204 L452,202 L462,212 L474,222 L486,230 L470,226 L454,216 Z"/>
<path d="M492,204 L506,202 L520,198 L512,208 L500,218 L494,228 L488,214 Z"/>
<path d="M544,192 L552,196 L562,204 L556,214 L546,204 Z"/>
<path d="M580,198 L596,198 L612,196 L600,206 L584,208 Z"/>
<path d="M634,190 L644,188 L676,192 L676,206 L644,202 Z"/>
</g>
<!-- center blue mountain -->
<path d="M400,219 L412,213 L430,208.5 L444,214 L460,222 L480,230 L500,237 L488,246 L470,256 L456,263 L440,252 L424,240 L410,230 Z" fill="#3f5a8a"/>
<path d="M430,209 L444,214 L460,222 L480,230 L500,237 L480,240 L462,234 L446,224 Z" fill="#2f4573" opacity="0.8" filter="url(#t2b1)"/>
<!-- M1 snow (right behind person) -->
<path d="M280,199 L290,200 L310,200 L330,198 L348,187 L358,186 L370,190 L382,196 L398,191 L410,196 L414,206 L402,218 L390,228 L376,234 L360,246 L350,242 L330,234 L310,236 L290,232 L280,228 Z" fill="#e9edf5"/>
<g fill="#9db0d0" opacity="0.8" filter="url(#t2b1)">
<path d="M334,198 L346,192 L350,204 L360,214 L372,222 L364,230 L350,226 L340,214 Z"/>
<path d="M372,194 L384,200 L396,210 L404,214 L392,224 L384,214 Z"/>
<path d="M296,204 L312,206 L322,216 L312,226 L298,222 Z"/>
<path d="M380,232 L392,228 L388,240 L376,244 Z"/>
</g>
<!-- M1 face darker parts -->
<path d="M290,236 L330,238 L360,248 L380,240 L392,232 L420,244 L456,262 L436,280 L414,298 L390,314 L370,334 L356,346 L333,346 L290,335 Z" fill="#344b7b" filter="url(#t2b1)"/>
<path d="M290,262 L320,274 L350,296 L372,318 L356,346 L333,346 L290,335 Z" fill="#283b65" opacity="0.85" filter="url(#t2b2)"/>
<path d="M392,232 L420,244 L456,262 L440,268 L416,256 L398,246 Z" fill="#425e90" opacity="0.8" filter="url(#t2b1)"/>
<path d="M386,268 L400,264 L414,266 L426,270 L420,280 L404,284 L390,282 Z" fill="#b5c3da" opacity="0.75" filter="url(#t2b2)"/>
<!-- dark band (front ridge shadow face) -->
<path d="M628.5,203 L610,208 L590,214 L570,219 L550,226 L530,232 L510,236 L500,237 L488,246 L470,256 L456,263 L436,280 L470,276 L500,272 L530,267 L550,252 L570.5,238 L590.5,226 L610.5,214 Z" fill="#273960"/>
<!-- snowy face -->
<path d="M628.5,203 L642,209 L676,216 L676,279 L620,281 L590,281 L560,276 L540,270 L530,266 L550,252 L570.5,238 L590.5,226 L610.5,214 Z" fill="url(#t2face)" filter="url(#t2b1)"/>
<path d="M600,262 L630,256 L676,252 L676,282 L620,284 L590,282 Z" fill="#53688f" opacity="0.55" filter="url(#t2b3)"/>
<!-- lower dark mass -->
<path d="M436,280 L470,276 L500,272 L530,267 L560,276 L590,281 L620,282 L676,280 L676,420 L340,420 L356,346 L372,330 L390,314 L414,298 Z" fill="url(#t2low)" filter="url(#t2b1)"/>
<g fill="#a9b7d0" opacity="0.55" filter="url(#t2b2)">
<path d="M432,288 L460,282 L490,280 L520,276 L540,280 L516,286 L486,290 L458,296 L440,300 Z"/>
<path d="M466,296 L486,294 L482,302 L468,304 Z"/>
</g>
<!-- M0 (left of person) -->
<path d="M75,271.5 L86,265 L103,253 L120,244.7 L137,237.8 L149,231 L163,224 L172,219 L180,212 L189,205 L193,201 L200,199 L218,200 L218,320 L189,306.5 L154.6,296 L120,284 Z" fill="url(#t2m0)"/>
<path d="M84,270 L110,256 L140,242 L170,226 L190,212 L178,230 L150,250 L124,268 L104,278 Z" fill="#22366a" opacity="0.75" filter="url(#t2b2)"/>
<path d="M150,270 L180,250 L200,236 L215,240 L215,312 L189,304 L160,295 Z" fill="#3a5384" opacity="0.8" filter="url(#t2b2)"/>
</g>
<!-- bushes -->
<g fill="#40282e" opacity="0.5" filter="url(#t2b1)">
<path d="M449,366 L451,344 L454,330 L457,328 L460,340 L463,356 L466,368 Z"/>
<ellipse cx="474" cy="366" rx="10" ry="5"/>
<path d="M504,376 L510,358 L520,350 L532,346 L546,350 L556,344 L562,360 L560,384 Z"/>
</g>
<g stroke="#3a4c74" stroke-width="1.4" opacity="0.5" fill="none" filter="url(#t2b1)">
<path d="M560,262 L585,242 L610,224 M575,272 L600,252 L630,232 M600,276 L625,258 L650,246 M545,268 L565,250"/>
</g>
<!-- snow slope -->
<path d="M0,249 L17,255 L34,262 L51.5,267 L75.6,272 L103,279 L120,284 L137.4,291 L154.6,296 L171.7,301.4 L189,306.5 L221.5,318.5 L240.4,323.7 L257.6,330.6 L281.7,335.7 L310,341 L333,346 L376,357 L420,366 L462,374 L505,382 L548,389 L600,395 L656,400 L656,437 L0,437 Z" fill="#f8f9fc"/>
<!-- grass patches -->
<g fill="#b09a7c" opacity="0.75" filter="url(#t2b1)">
<ellipse cx="28" cy="259" rx="8" ry="3.5"/>
<ellipse cx="8" cy="254" rx="7" ry="3"/>
<ellipse cx="14" cy="264" rx="6" ry="1.5"/>
<ellipse cx="60" cy="271" rx="8" ry="2"/>
<ellipse cx="98" cy="283" rx="8" ry="2"/>
<ellipse cx="135" cy="293" rx="10" ry="2.5"/>
<ellipse cx="165" cy="302" rx="8" ry="2"/>
</g>
<!-- snow shadows -->
<g fill="#c7d0e4" opacity="0.85" filter="url(#t2b3)">
<path d="M0,344 L40,350 L90,358 L140,366 L188,372 L200,382 L150,378 L100,370 L50,362 L0,358 Z"/>
<ellipse cx="20" cy="300" rx="14" ry="4"/>
<ellipse cx="90" cy="318" rx="16" ry="4"/>
<ellipse cx="150" cy="342" rx="18" ry="4"/>
<ellipse cx="40" cy="395" rx="16" ry="5"/>
<ellipse cx="150" cy="410" rx="18" ry="4"/>
<ellipse cx="290" cy="392" rx="14" ry="4"/>
<ellipse cx="320" cy="412" rx="16" ry="4"/>
<ellipse cx="370" cy="425" rx="20" ry="4"/>
<ellipse cx="232" cy="398" rx="26" ry="5"/>
<ellipse cx="480" cy="430" rx="22" ry="4"/>
<ellipse cx="100" cy="428" rx="20" ry="4"/>
</g>

<g stroke="#15171c" stroke-linecap="round" fill="none">
<path d="M197.5,212 L196,262 L194,330 L192.5,362" stroke-width="2.2"/>
<path d="M188,362 L198,364" stroke-width="1.6"/>
<path d="M235,270 L244,325 L252,369" stroke-width="1.8"/>
<path d="M246,368 L256,371" stroke-width="1.6"/>
<path d="M273,236 L280,254 L293,272" stroke-width="1.6"/>
</g>
<path d="M212,235 L277,235 L278,258 L275,282 L277,305 L279,322 L279,345 L278,362 L273,377 L255,373 L256,343 L253,315 L251,295 L248,262 L240,272 L231,287 L222,300 L218,310 L220,325 L223,340 L228,364 L208,366 L204,345 L197,322 L190,300 L189,289 L194,278 L202,268 L208,252 Z" fill="#5d5b55"/>
<path d="M212,235 L240,235 L236,255 L222,280 L210,296 L196,310 L190,300 L189,289 L194,278 L202,268 L208,252 Z" fill="#6e6c65" opacity="0.6"/>
<path d="M262,240 L277,238 L279,322 L278,362 L268,366 L268,300 Z" fill="#48463f" opacity="0.55"/>
<path d="M206,362 L228,362 L229,376 L228,384 L215,384 L200,380 L188,376 L187,371 L196,367 Z" fill="#2a2624"/>
<path d="M208,372 L228,370 L228,382 L212,381 Z" fill="#6b4a36" opacity="0.8"/>
<path d="M254,370 L273,375 L272,388 L262,389 L250,384 L248,378 Z" fill="#2a2624"/>
<path d="M262,380 L272,382 L271,388 L262,387 Z" fill="#6b4a36" opacity="0.8"/>
<path d="M229,128 L251,126 L262,146 L276,160 L278,234 L211,236 L212,212 L203,212 L195,206 L195,189 L200,167 L209,144 L220,134 Z" fill="#1b6bbd"/>
<path d="M212,150 L222,142 L228,150 L226,200 L222,214 L213,212 L204,204 L205,180 Z" fill="#15191f"/>
<ellipse cx="193" cy="198" rx="2.5" ry="4" fill="#c99a8a"/>
<path d="M250,140 L258,137 L266,139 L276,143 L286,150 L294,160 L300,174 L303,190 L304,206 L302,218 L296,225 L284,229 L270,230.5 L252,227 L246,215 L246,160 Z" fill="#0d0e12"/>
<path d="M270,126 L278,127 L286,133 L292,143 L297,156 L302,172 L306,190 L306,206 L303,216 L299,202 L295,184 L289,166 L282,152 L274,141 L271,133 Z" fill="#23262d"/>
<path d="M274.5,131 L282,137.5 L289,149.5 L295,165 L300,183 L303.5,202" stroke="#9fb0c9" stroke-width="2.4" stroke-dasharray="1.6 2.2" fill="none" opacity="0.75"/><path d="M279,131 L286.5,140 L293.5,156 L298.5,174 L302.5,192" stroke="#8797b0" stroke-width="1.2" stroke-dasharray="1.4 2" fill="none" opacity="0.7"/>
<path d="M262,142 L270,156 L277,176 L282,196 M256,150 L262,170 L266,190" stroke="#5a5f6a" stroke-width="1.1" fill="none" opacity="0.7"/>
<path d="M240.5,126 C248,130 254,145 253.5,160 C253,185 248,205 243,222 C241,230 238,235 235.5,235 C232,234 229,226 226,214 C222,198 219,178 219.5,160 C220,145 230,130 240.5,126 Z" fill="#565a63" stroke="#a9aeb6" stroke-width="1.7"/>
<path d="M234,136 L240,134 L246,138 L244,142 L232,142 Z" fill="#c9ccd2" opacity="0.8"/>
<path d="M224,158 L232,160 L232,182 L226,186 L223,172 Z M241,160 L250,157 L250,172 L246,186 L241,182 Z M226,190 L232,186 L233,206 L229,212 Z M241,186 L246,190 L243,210 L240,206 Z M232,212 L240,212 L238,226 L234,226 Z" fill="#24262c" opacity="0.9"/>
<path d="M236.5,158 L236.5,226 M232,184 L241,184 M230,210 L242,209" stroke="#b4b8c0" stroke-width="1.1" fill="none" opacity="0.9"/>
<rect x="231" y="143.5" width="12" height="13.5" rx="1.5" fill="#15161a"/>
<path d="M256,219 L261.5,208 L266.5,206.5 L268,210 L260,222 Z" fill="none" stroke="#b9c23a" stroke-width="1.1"/>
<rect x="271" y="222" width="19" height="3.2" fill="#e6e6e6" opacity="0.9"/>
<ellipse cx="237.5" cy="111.5" rx="16" ry="16" fill="#111216"/>
<path d="M222,112 L253,112 L253,124 L248,128 L230,128 L223,124 Z" fill="#111216"/>
<rect x="161" y="91" width="155" height="310" fill="#2a7be0" opacity="0.10"/></svg>
<svg style="position:absolute;left:484px;top:842px;" width="110" height="28" viewBox="54 93 509 130" preserveAspectRatio="none">
<defs>
<linearGradient id="t3sky" gradientUnits="userSpaceOnUse" x1="0" y1="0" x2="0" y2="222">
<stop offset="0" stop-color="#5681b6"/>
<stop offset="0.06" stop-color="#618bbd"/>
<stop offset="0.25" stop-color="#80a5d2"/>
<stop offset="0.5" stop-color="#a6c3e5"/>
<stop offset="0.7" stop-color="#c4d8ef"/>
<stop offset="0.85" stop-color="#e1e8f4"/>
<stop offset="1" stop-color="#f0f2f8"/>
</linearGradient>
<linearGradient id="t3skyr" x1="0" y1="0" x2="1" y2="0">
<stop offset="0" stop-color="#fff" stop-opacity="0"/>
<stop offset="0.35" stop-color="#fff" stop-opacity="0.1"/>
<stop offset="1" stop-color="#fff" stop-opacity="0.36"/>
</linearGradient>
<radialGradient id="t3glow" gradientUnits="userSpaceOnUse" cx="640" cy="185" r="1" gradientTransform="translate(640 185) scale(440 120) translate(-640 -185)">
<stop offset="0" stop-color="#fff" stop-opacity="0.9"/>
<stop offset="0.5" stop-color="#fff" stop-opacity="0.55"/>
<stop offset="1" stop-color="#fff" stop-opacity="0"/>
</radialGradient>
<linearGradient id="t3hz" gradientUnits="userSpaceOnUse" x1="0" y1="232" x2="0" y2="275">
<stop offset="0" stop-color="#b4c5df"/>
<stop offset="0.3" stop-color="#809bc5"/>
<stop offset="1" stop-color="#4f72a8"/>
</linearGradient>
<linearGradient id="t3base" gradientUnits="userSpaceOnUse" x1="0" y1="195" x2="0" y2="400">
<stop offset="0" stop-color="#56739f"/>
<stop offset="0.25" stop-color="#364f80"/>
<stop offset="0.55" stop-color="#2a3d66"/>
<stop offset="1" stop-color="#1f2b49"/>
</linearGradient>
<linearGradient id="t3low" gradientUnits="userSpaceOnUse" x1="0" y1="270" x2="0" y2="400">
<stop offset="0" stop-color="#28385e"/>
<stop offset="1" stop-color="#1b2640"/>
</linearGradient>
<linearGradient id="t3face" gradientUnits="userSpaceOnUse" x1="0" y1="205" x2="0" y2="282">
<stop offset="0" stop-color="#eef1f7"/>
<stop offset="0.45" stop-color="#d3dbea"/>
<stop offset="1" stop-color="#7487ab"/>
</linearGradient>
<linearGradient id="t3m0" gradientUnits="userSpaceOnUse" x1="190" y1="200" x2="120" y2="290">
<stop offset="0" stop-color="#e3e9f3"/>
<stop offset="0.2" stop-color="#9cb0d2"/>
<stop offset="0.45" stop-color="#56739f"/>
<stop offset="1" stop-color="#38507f"/>
</linearGradient>
<filter id="t3b1" x="-20%" y="-20%" width="140%" height="140%"><feGaussianBlur stdDeviation="1"/></filter>
<filter id="t3b2" x="-20%" y="-20%" width="140%" height="140%"><feGaussianBlur stdDeviation="2"/></filter>
<filter id="t3b3" x="-30%" y="-30%" width="160%" height="160%"><feGaussianBlur stdDeviation="3.5"/></filter>
<filter id="t3b6" x="-30%" y="-30%" width="160%" height="160%"><feGaussianBlur stdDeviation="7"/></filter>
<filter id="t3rough" x="-10" y="150" width="690" height="287" filterUnits="userSpaceOnUse" primitiveUnits="userSpaceOnUse">
<feTurbulence type="fractalNoise" baseFrequency="0.03 0.05" numOctaves="4" seed="7" result="n"/>
<feDisplacementMap in="SourceGraphic" in2="n" scale="9" xChannelSelector="R" yChannelSelector="G"/>
</filter>
</defs>
<rect width="656" height="437" fill="url(#t3sky)"/>
<rect width="656" height="240" fill="url(#t3skyr)"/>
<rect width="656" height="320" fill="url(#t3glow)"/>
<ellipse cx="60" cy="215" rx="200" ry="22" fill="#fff" opacity="0.35" filter="url(#t3b6)"/>
<!-- contrails -->
<g fill="#fff">
<polygon points="326,126 420,111 500,98 560,87 603,81.5 560,90.5 500,102.5 420,114.5 326,127.5" opacity="0.62" filter="url(#t3b1)"/>
<polygon points="310,165 380,150 440,137 441,139 382,153 310,167" opacity="0.22" filter="url(#t3b1)"/>
<polygon points="0,148 50,147.5 105,150.5 50,151 0,150.5" opacity="0.6" filter="url(#t3b1)"/>
<ellipse cx="470" cy="26" rx="120" ry="6" opacity="0.1" transform="rotate(-9 470 26)" filter="url(#t3b3)"/>
<ellipse cx="300" cy="60" rx="140" ry="5" opacity="0.07" transform="rotate(-9 300 60)" filter="url(#t3b3)"/>
</g>
<!-- distant left range -->
<path d="M0,229 L7,227 L14,225.5 L20,227 L26,227.5 L34,229 L43,229 L52,228 L60,227 L65,225 L69,224 L74,225.5 L80,225 L86,224.5 L93,224 L98,226 L103,227.5 L112,228.5 L120,229 L130,230.5 L137,231 L146,233 L160,236 L200,245 L200,300 L0,300 Z" fill="url(#t3hz)"/>
<path d="M0,229 L7,227 L14,225.5 L20,227 L26,227.5 L34,229 L43,229 L52,228 L60,227 L65,225 L69,224 L74,225.5 L80,225 L86,224.5 L93,224 L98,226 L103,227.5 L112,228.5 L120,229 L130,230.5 L137,231 L146,233 L150,236 L130,237 L118,235 L104,238 L90,236 L76,239 L60,236 L46,238 L30,236 L14,237 L0,236 Z" fill="#eef2f8" filter="url(#t3b1)"/>
<path d="M60,246 L100,245 L100,247 L60,248 Z" fill="#dbe4f1" opacity="0.8" filter="url(#t3b1)"/>
<g filter="url(#t3rough)">
<!-- mountain base -->
<path d="M75,271.5 L86,265 L103,253 L120,244.7 L137,237.8 L149,231 L163,224 L172,219 L180,212 L189,205 L193,201 L215,198 L290,200 L310,200 L330,198 L348,187 L358,186 L370,190 L382,196 L398,191 L410,196 L426,202 L438,196 L450,200 L466,196 L482,197 L490,202 L510,198 L526,192 L540,187 L550,189 L570,192 L590,196 L610,192 L630,190 L642.6,183 L676,185 L676,420 L75,420 Z" fill="url(#t3base)"/>
<!-- far snowy band right -->
<path d="M400,194 L410,196 L426,202 L438,196 L450,200 L466,196 L482,197 L490,202 L510,198 L526,192 L540,187 L550,189 L570,192 L590,196 L610,192 L630,190 L642.6,183 L676,185 L676,212 L640,207 L628,203 L610,208 L590,214 L570,219 L550,226 L530,232 L510,236 L496,236 L480,228 L466,222 L450,214 L436,208 L426,208 L412,212 L402,216 Z" fill="#e4e9f2"/>
<g fill="#9db0d0" opacity="0.75" filter="url(#t3b1)">
<path d="M440,204 L452,202 L462,212 L474,222 L486,230 L470,226 L454,216 Z"/>
<path d="M492,204 L506,202 L520,198 L512,208 L500,218 L494,228 L488,214 Z"/>
<path d="M544,192 L552,196 L562,204 L556,214 L546,204 Z"/>
<path d="M580,198 L596,198 L612,196 L600,206 L584,208 Z"/>
<path d="M634,190 L644,188 L676,192 L676,206 L644,202 Z"/>
</g>
<!-- center blue mountain -->
<path d="M400,219 L412,213 L430,208.5 L444,214 L460,222 L480,230 L500,237 L488,246 L470,256 L456,263 L440,252 L424,240 L410,230 Z" fill="#3f5a8a"/>
<path d="M430,209 L444,214 L460,222 L480,230 L500,237 L480,240 L462,234 L446,224 Z" fill="#2f4573" opacity="0.8" filter="url(#t3b1)"/>
<!-- M1 snow (right behind person) -->
<path d="M280,199 L290,200 L310,200 L330,198 L348,187 L358,186 L370,190 L382,196 L398,191 L410,196 L414,206 L402,218 L390,228 L376,234 L360,246 L350,242 L330,234 L310,236 L290,232 L280,228 Z" fill="#e9edf5"/>
<g fill="#9db0d0" opacity="0.8" filter="url(#t3b1)">
<path d="M334,198 L346,192 L350,204 L360,214 L372,222 L364,230 L350,226 L340,214 Z"/>
<path d="M372,194 L384,200 L396,210 L404,214 L392,224 L384,214 Z"/>
<path d="M296,204 L312,206 L322,216 L312,226 L298,222 Z"/>
<path d="M380,232 L392,228 L388,240 L376,244 Z"/>
</g>
<!-- M1 face darker parts -->
<path d="M290,236 L330,238 L360,248 L380,240 L392,232 L420,244 L456,262 L436,280 L414,298 L390,314 L370,334 L356,346 L333,346 L290,335 Z" fill="#344b7b" filter="url(#t3b1)"/>
<path d="M290,262 L320,274 L350,296 L372,318 L356,346 L333,346 L290,335 Z" fill="#283b65" opacity="0.85" filter="url(#t3b2)"/>
<path d="M392,232 L420,244 L456,262 L440,268 L416,256 L398,246 Z" fill="#425e90" opacity="0.8" filter="url(#t3b1)"/>
<path d="M386,268 L400,264 L414,266 L426,270 L420,280 L404,284 L390,282 Z" fill="#b5c3da" opacity="0.75" filter="url(#t3b2)"/>
<!-- dark band (front ridge shadow face) -->
<path d="M628.5,203 L610,208 L590,214 L570,219 L550,226 L530,232 L510,236 L500,237 L488,246 L470,256 L456,263 L436,280 L470,276 L500,272 L530,267 L550,252 L570.5,238 L590.5,226 L610.5,214 Z" fill="#273960"/>
<!-- snowy face -->
<path d="M628.5,203 L642,209 L676,216 L676,279 L620,281 L590,281 L560,276 L540,270 L530,266 L550,252 L570.5,238 L590.5,226 L610.5,214 Z" fill="url(#t3face)" filter="url(#t3b1)"/>
<path d="M600,262 L630,256 L676,252 L676,282 L620,284 L590,282 Z" fill="#53688f" opacity="0.55" filter="url(#t3b3)"/>
<!-- lower dark mass -->
<path d="M436,280 L470,276 L500,272 L530,267 L560,276 L590,281 L620,282 L676,280 L676,420 L340,420 L356,346 L372,330 L390,314 L414,298 Z" fill="url(#t3low)" filter="url(#t3b1)"/>
<g fill="#a9b7d0" opacity="0.55" filter="url(#t3b2)">
<path d="M432,288 L460,282 L490,280 L520,276 L540,280 L516,286 L486,290 L458,296 L440,300 Z"/>
<path d="M466,296 L486,294 L482,302 L468,304 Z"/>
</g>
<!-- M0 (left of person) -->
<path d="M75,271.5 L86,265 L103,253 L120,244.7 L137,237.8 L149,231 L163,224 L172,219 L180,212 L189,205 L193,201 L200,199 L218,200 L218,320 L189,306.5 L154.6,296 L120,284 Z" fill="url(#t3m0)"/>
<path d="M84,270 L110,256 L140,242 L170,226 L190,212 L178,230 L150,250 L124,268 L104,278 Z" fill="#22366a" opacity="0.75" filter="url(#t3b2)"/>
<path d="M150,270 L180,250 L200,236 L215,240 L215,312 L189,304 L160,295 Z" fill="#3a5384" opacity="0.8" filter="url(#t3b2)"/>
</g>
<!-- bushes -->
<g fill="#40282e" opacity="0.5" filter="url(#t3b1)">
<path d="M449,366 L451,344 L454,330 L457,328 L460,340 L463,356 L466,368 Z"/>
<ellipse cx="474" cy="366" rx="10" ry="5"/>
<path d="M504,376 L510,358 L520,350 L532,346 L546,350 L556,344 L562,360 L560,384 Z"/>
</g>
<g stroke="#3a4c74" stroke-width="1.4" opacity="0.5" fill="none" filter="url(#t3b1)">
<path d="M560,262 L585,242 L610,224 M575,272 L600,252 L630,232 M600,276 L625,258 L650,246 M545,268 L565,250"/>
</g>
<!-- snow slope -->
<path d="M0,249 L17,255 L34,262 L51.5,267 L75.6,272 L103,279 L120,284 L137.4,291 L154.6,296 L171.7,301.4 L189,306.5 L221.5,318.5 L240.4,323.7 L257.6,330.6 L281.7,335.7 L310,341 L333,346 L376,357 L420,366 L462,374 L505,382 L548,389 L600,395 L656,400 L656,437 L0,437 Z" fill="#f8f9fc"/>
<!-- grass patches -->
<g fill="#b09a7c" opacity="0.75" filter="url(#t3b1)">
<ellipse cx="28" cy="259" rx="8" ry="3.5"/>
<ellipse cx="8" cy="254" rx="7" ry="3"/>
<ellipse cx="14" cy="264" rx="6" ry="1.5"/>
<ellipse cx="60" cy="271" rx="8" ry="2"/>
<ellipse cx="98" cy="283" rx="8" ry="2"/>
<ellipse cx="135" cy="293" rx="10" ry="2.5"/>
<ellipse cx="165" cy="302" rx="8" ry="2"/>
</g>
<!-- snow shadows -->
<g fill="#c7d0e4" opacity="0.85" filter="url(#t3b3)">
<path d="M0,344 L40,350 L90,358 L140,366 L188,372 L200,382 L150,378 L100,370 L50,362 L0,358 Z"/>
<ellipse cx="20" cy="300" rx="14" ry="4"/>
<ellipse cx="90" cy="318" rx="16" ry="4"/>
<ellipse cx="150" cy="342" rx="18" ry="4"/>
<ellipse cx="40" cy="395" rx="16" ry="5"/>
<ellipse cx="150" cy="410" rx="18" ry="4"/>
<ellipse cx="290" cy="392" rx="14" ry="4"/>
<ellipse cx="320" cy="412" rx="16" ry="4"/>
<ellipse cx="370" cy="425" rx="20" ry="4"/>
<ellipse cx="232" cy="398" rx="26" ry="5"/>
<ellipse cx="480" cy="430" rx="22" ry="4"/>
<ellipse cx="100" cy="428" rx="20" ry="4"/>
</g>

<g stroke="#15171c" stroke-linecap="round" fill="none">
<path d="M197.5,212 L196,262 L194,330 L192.5,362" stroke-width="2.2"/>
<path d="M188,362 L198,364" stroke-width="1.6"/>
<path d="M235,270 L244,325 L252,369" stroke-width="1.8"/>
<path d="M246,368 L256,371" stroke-width="1.6"/>
<path d="M273,236 L280,254 L293,272" stroke-width="1.6"/>
</g>
<path d="M212,235 L277,235 L278,258 L275,282 L277,305 L279,322 L279,345 L278,362 L273,377 L255,373 L256,343 L253,315 L251,295 L248,262 L240,272 L231,287 L222,300 L218,310 L220,325 L223,340 L228,364 L208,366 L204,345 L197,322 L190,300 L189,289 L194,278 L202,268 L208,252 Z" fill="#5d5b55"/>
<path d="M212,235 L240,235 L236,255 L222,280 L210,296 L196,310 L190,300 L189,289 L194,278 L202,268 L208,252 Z" fill="#6e6c65" opacity="0.6"/>
<path d="M262,240 L277,238 L279,322 L278,362 L268,366 L268,300 Z" fill="#48463f" opacity="0.55"/>
<path d="M206,362 L228,362 L229,376 L228,384 L215,384 L200,380 L188,376 L187,371 L196,367 Z" fill="#2a2624"/>
<path d="M208,372 L228,370 L228,382 L212,381 Z" fill="#6b4a36" opacity="0.8"/>
<path d="M254,370 L273,375 L272,388 L262,389 L250,384 L248,378 Z" fill="#2a2624"/>
<path d="M262,380 L272,382 L271,388 L262,387 Z" fill="#6b4a36" opacity="0.8"/>
<path d="M229,128 L251,126 L262,146 L276,160 L278,234 L211,236 L212,212 L203,212 L195,206 L195,189 L200,167 L209,144 L220,134 Z" fill="#1b6bbd"/>
<path d="M212,150 L222,142 L228,150 L226,200 L222,214 L213,212 L204,204 L205,180 Z" fill="#15191f"/>
<ellipse cx="193" cy="198" rx="2.5" ry="4" fill="#c99a8a"/>
<path d="M250,140 L258,137 L266,139 L276,143 L286,150 L294,160 L300,174 L303,190 L304,206 L302,218 L296,225 L284,229 L270,230.5 L252,227 L246,215 L246,160 Z" fill="#0d0e12"/>
<path d="M270,126 L278,127 L286,133 L292,143 L297,156 L302,172 L306,190 L306,206 L303,216 L299,202 L295,184 L289,166 L282,152 L274,141 L271,133 Z" fill="#23262d"/>
<path d="M274.5,131 L282,137.5 L289,149.5 L295,165 L300,183 L303.5,202" stroke="#9fb0c9" stroke-width="2.4" stroke-dasharray="1.6 2.2" fill="none" opacity="0.75"/><path d="M279,131 L286.5,140 L293.5,156 L298.5,174 L302.5,192" stroke="#8797b0" stroke-width="1.2" stroke-dasharray="1.4 2" fill="none" opacity="0.7"/>
<path d="M262,142 L270,156 L277,176 L282,196 M256,150 L262,170 L266,190" stroke="#5a5f6a" stroke-width="1.1" fill="none" opacity="0.7"/>
<path d="M240.5,126 C248,130 254,145 253.5,160 C253,185 248,205 243,222 C241,230 238,235 235.5,235 C232,234 229,226 226,214 C222,198 219,178 219.5,160 C220,145 230,130 240.5,126 Z" fill="#565a63" stroke="#a9aeb6" stroke-width="1.7"/>
<path d="M234,136 L240,134 L246,138 L244,142 L232,142 Z" fill="#c9ccd2" opacity="0.8"/>
<path d="M224,158 L232,160 L232,182 L226,186 L223,172 Z M241,160 L250,157 L250,172 L246,186 L241,182 Z M226,190 L232,186 L233,206 L229,212 Z M241,186 L246,190 L243,210 L240,206 Z M232,212 L240,212 L238,226 L234,226 Z" fill="#24262c" opacity="0.9"/>
<path d="M236.5,158 L236.5,226 M232,184 L241,184 M230,210 L242,209" stroke="#b4b8c0" stroke-width="1.1" fill="none" opacity="0.9"/>
<rect x="231" y="143.5" width="12" height="13.5" rx="1.5" fill="#15161a"/>
<path d="M256,219 L261.5,208 L266.5,206.5 L268,210 L260,222 Z" fill="none" stroke="#b9c23a" stroke-width="1.1"/>
<rect x="271" y="222" width="19" height="3.2" fill="#e6e6e6" opacity="0.9"/>
<ellipse cx="237.5" cy="111.5" rx="16" ry="16" fill="#111216"/>
<path d="M222,112 L253,112 L253,124 L248,128 L230,128 L223,124 Z" fill="#111216"/>
<defs><linearGradient id="bw" gradientUnits="userSpaceOnUse" x1="0" y1="93" x2="0" y2="223"><stop offset="0.35" stop-color="#000" stop-opacity="0"/><stop offset="0.62" stop-color="#0a0f18" stop-opacity="0.45"/><stop offset="0.95" stop-color="#000" stop-opacity="1"/></linearGradient></defs><rect x="54" y="93" width="509" height="130" fill="url(#bw)"/><text x="308" y="196" text-anchor="middle" font-family="Liberation Sans,sans-serif" font-size="46" textLength="250" fill="#fff" fill-opacity="0.88">Shop Now</text></svg>
<div style="position:absolute;left:636.5px;top:815.5px;width:81px;height:81px;background:#b23c4c;border-radius:50%"></div>
<svg style="position:absolute;left:637.5px;top:816.5px;border-radius:50%" width="79" height="79" viewBox="102 0 437 437" preserveAspectRatio="none">
<defs>
<linearGradient id="t4sky" gradientUnits="userSpaceOnUse" x1="0" y1="0" x2="0" y2="222">
<stop offset="0" stop-color="#5681b6"/>
<stop offset="0.06" stop-color="#618bbd"/>
<stop offset="0.25" stop-color="#80a5d2"/>
<stop offset="0.5" stop-color="#a6c3e5"/>
<stop offset="0.7" stop-color="#c4d8ef"/>
<stop offset="0.85" stop-color="#e1e8f4"/>
<stop offset="1" stop-color="#f0f2f8"/>
</linearGradient>
<linearGradient id="t4skyr" x1="0" y1="0" x2="1" y2="0">
<stop offset="0" stop-color="#fff" stop-opacity="0"/>
<stop offset="0.35" stop-color="#fff" stop-opacity="0.1"/>
<stop offset="1" stop-color="#fff" stop-opacity="0.36"/>
</linearGradient>
<radialGradient id="t4glow" gradientUnits="userSpaceOnUse" cx="640" cy="185" r="1" gradientTransform="translate(640 185) scale(440 120) translate(-640 -185)">
<stop offset="0" stop-color="#fff" stop-opacity="0.9"/>
<stop offset="0.5" stop-color="#fff" stop-opacity="0.55"/>
<stop offset="1" stop-color="#fff" stop-opacity="0"/>
</radialGradient>
<linearGradient id="t4hz" gradientUnits="userSpaceOnUse" x1="0" y1="232" x2="0" y2="275">
<stop offset="0" stop-color="#b4c5df"/>
<stop offset="0.3" stop-color="#809bc5"/>
<stop offset="1" stop-color="#4f72a8"/>
</linearGradient>
<linearGradient id="t4base" gradientUnits="userSpaceOnUse" x1="0" y1="195" x2="0" y2="400">
<stop offset="0" stop-color="#56739f"/>
<stop offset="0.25" stop-color="#364f80"/>
<stop offset="0.55" stop-color="#2a3d66"/>
<stop offset="1" stop-color="#1f2b49"/>
</linearGradient>
<linearGradient id="t4low" gradientUnits="userSpaceOnUse" x1="0" y1="270" x2="0" y2="400">
<stop offset="0" stop-color="#28385e"/>
<stop offset="1" stop-color="#1b2640"/>
</linearGradient>
<linearGradient id="t4face" gradientUnits="userSpaceOnUse" x1="0" y1="205" x2="0" y2="282">
<stop offset="0" stop-color="#eef1f7"/>
<stop offset="0.45" stop-color="#d3dbea"/>
<stop offset="1" stop-color="#7487ab"/>
</linearGradient>
<linearGradient id="t4m0" gradientUnits="userSpaceOnUse" x1="190" y1="200" x2="120" y2="290">
<stop offset="0" stop-color="#e3e9f3"/>
<stop offset="0.2" stop-color="#9cb0d2"/>
<stop offset="0.45" stop-color="#56739f"/>
<stop offset="1" stop-color="#38507f"/>
</linearGradient>
<filter id="t4b1" x="-20%" y="-20%" width="140%" height="140%"><feGaussianBlur stdDeviation="1"/></filter>
<filter id="t4b2" x="-20%" y="-20%" width="140%" height="140%"><feGaussianBlur stdDeviation="2"/></filter>
<filter id="t4b3" x="-30%" y="-30%" width="160%" height="160%"><feGaussianBlur stdDeviation="3.5"/></filter>
<filter id="t4b6" x="-30%" y="-30%" width="160%" height="160%"><feGaussianBlur stdDeviation="7"/></filter>
<filter id="t4rough" x="-10" y="150" width="690" height="287" filterUnits="userSpaceOnUse" primitiveUnits="userSpaceOnUse">
<feTurbulence type="fractalNoise" baseFrequency="0.03 0.05" numOctaves="4" seed="7" result="n"/>
<feDisplacementMap in="SourceGraphic" in2="n" scale="9" xChannelSelector="R" yChannelSelector="G"/>
</filter>
</defs>
<rect width="656" height="437" fill="url(#t4sky)"/>
<rect width="656" height="240" fill="url(#t4skyr)"/>
<rect width="656" height="320" fill="url(#t4glow)"/>
<ellipse cx="60" cy="215" rx="200" ry="22" fill="#fff" opacity="0.35" filter="url(#t4b6)"/>
<!-- contrails -->
<g fill="#fff">
<polygon points="326,126 420,111 500,98 560,87 603,81.5 560,90.5 500,102.5 420,114.5 326,127.5" opacity="0.62" filter="url(#t4b1)"/>
<polygon points="310,165 380,150 440,137 441,139 382,153 310,167" opacity="0.22" filter="url(#t4b1)"/>
<polygon points="0,148 50,147.5 105,150.5 50,151 0,150.5" opacity="0.6" filter="url(#t4b1)"/>
<ellipse cx="470" cy="26" rx="120" ry="6" opacity="0.1" transform="rotate(-9 470 26)" filter="url(#t4b3)"/>
<ellipse cx="300" cy="60" rx="140" ry="5" opacity="0.07" transform="rotate(-9 300 60)" filter="url(#t4b3)"/>
</g>
<!-- distant left range -->
<path d="M0,229 L7,227 L14,225.5 L20,227 L26,227.5 L34,229 L43,229 L52,228 L60,227 L65,225 L69,224 L74,225.5 L80,225 L86,224.5 L93,224 L98,226 L103,227.5 L112,228.5 L120,229 L130,230.5 L137,231 L146,233 L160,236 L200,245 L200,300 L0,300 Z" fill="url(#t4hz)"/>
<path d="M0,229 L7,227 L14,225.5 L20,227 L26,227.5 L34,229 L43,229 L52,228 L60,227 L65,225 L69,224 L74,225.5 L80,225 L86,224.5 L93,224 L98,226 L103,227.5 L112,228.5 L120,229 L130,230.5 L137,231 L146,233 L150,236 L130,237 L118,235 L104,238 L90,236 L76,239 L60,236 L46,238 L30,236 L14,237 L0,236 Z" fill="#eef2f8" filter="url(#t4b1)"/>
<path d="M60,246 L100,245 L100,247 L60,248 Z" fill="#dbe4f1" opacity="0.8" filter="url(#t4b1)"/>
<g filter="url(#t4rough)">
<!-- mountain base -->
<path d="M75,271.5 L86,265 L103,253 L120,244.7 L137,237.8 L149,231 L163,224 L172,219 L180,212 L189,205 L193,201 L215,198 L290,200 L310,200 L330,198 L348,187 L358,186 L370,190 L382,196 L398,191 L410,196 L426,202 L438,196 L450,200 L466,196 L482,197 L490,202 L510,198 L526,192 L540,187 L550,189 L570,192 L590,196 L610,192 L630,190 L642.6,183 L676,185 L676,420 L75,420 Z" fill="url(#t4base)"/>
<!-- far snowy band right -->
<path d="M400,194 L410,196 L426,202 L438,196 L450,200 L466,196 L482,197 L490,202 L510,198 L526,192 L540,187 L550,189 L570,192 L590,196 L610,192 L630,190 L642.6,183 L676,185 L676,212 L640,207 L628,203 L610,208 L590,214 L570,219 L550,226 L530,232 L510,236 L496,236 L480,228 L466,222 L450,214 L436,208 L426,208 L412,212 L402,216 Z" fill="#e4e9f2"/>
<g fill="#9db0d0" opacity="0.75" filter="url(#t4b1)">
<path d="M440,204 L452,202 L462,212 L474,222 L486,230 L470,226 L454,216 Z"/>
<path d="M492,204 L506,202 L520,198 L512,208 L500,218 L494,228 L488,214 Z"/>
<path d="M544,192 L552,196 L562,204 L556,214 L546,204 Z"/>
<path d="M580,198 L596,198 L612,196 L600,206 L584,208 Z"/>
<path d="M634,190 L644,188 L676,192 L676,206 L644,202 Z"/>
</g>
<!-- center blue mountain -->
<path d="M400,219 L412,213 L430,208.5 L444,214 L460,222 L480,230 L500,237 L488,246 L470,256 L456,263 L440,252 L424,240 L410,230 Z" fill="#3f5a8a"/>
<path d="M430,209 L444,214 L460,222 L480,230 L500,237 L480,240 L462,234 L446,224 Z" fill="#2f4573" opacity="0.8" filter="url(#t4b1)"/>
<!-- M1 snow (right behind person) -->
<path d="M280,199 L290,200 L310,200 L330,198 L348,187 L358,186 L370,190 L382,196 L398,191 L410,196 L414,206 L402,218 L390,228 L376,234 L360,246 L350,242 L330,234 L310,236 L290,232 L280,228 Z" fill="#e9edf5"/>
<g fill="#9db0d0" opacity="0.8" filter="url(#t4b1)">
<path d="M334,198 L346,192 L350,204 L360,214 L372,222 L364,230 L350,226 L340,214 Z"/>
<path d="M372,194 L384,200 L396,210 L404,214 L392,224 L384,214 Z"/>
<path d="M296,204 L312,206 L322,216 L312,226 L298,222 Z"/>
<path d="M380,232 L392,228 L388,240 L376,244 Z"/>
</g>
<!-- M1 face darker parts -->
<path d="M290,236 L330,238 L360,248 L380,240 L392,232 L420,244 L456,262 L436,280 L414,298 L390,314 L370,334 L356,346 L333,346 L290,335 Z" fill="#344b7b" filter="url(#t4b1)"/>
<path d="M290,262 L320,274 L350,296 L372,318 L356,346 L333,346 L290,335 Z" fill="#283b65" opacity="0.85" filter="url(#t4b2)"/>
<path d="M392,232 L420,244 L456,262 L440,268 L416,256 L398,246 Z" fill="#425e90" opacity="0.8" filter="url(#t4b1)"/>
<path d="M386,268 L400,264 L414,266 L426,270 L420,280 L404,284 L390,282 Z" fill="#b5c3da" opacity="0.75" filter="url(#t4b2)"/>
<!-- dark band (front ridge shadow face) -->
<path d="M628.5,203 L610,208 L590,214 L570,219 L550,226 L530,232 L510,236 L500,237 L488,246 L470,256 L456,263 L436,280 L470,276 L500,272 L530,267 L550,252 L570.5,238 L590.5,226 L610.5,214 Z" fill="#273960"/>
<!-- snowy face -->
<path d="M628.5,203 L642,209 L676,216 L676,279 L620,281 L590,281 L560,276 L540,270 L530,266 L550,252 L570.5,238 L590.5,226 L610.5,214 Z" fill="url(#t4face)" filter="url(#t4b1)"/>
<path d="M600,262 L630,256 L676,252 L676,282 L620,284 L590,282 Z" fill="#53688f" opacity="0.55" filter="url(#t4b3)"/>
<!-- lower dark mass -->
<path d="M436,280 L470,276 L500,272 L530,267 L560,276 L590,281 L620,282 L676,280 L676,420 L340,420 L356,346 L372,330 L390,314 L414,298 Z" fill="url(#t4low)" filter="url(#t4b1)"/>
<g fill="#a9b7d0" opacity="0.55" filter="url(#t4b2)">
<path d="M432,288 L460,282 L490,280 L520,276 L540,280 L516,286 L486,290 L458,296 L440,300 Z"/>
<path d="M466,296 L486,294 L482,302 L468,304 Z"/>
</g>
<!-- M0 (left of person) -->
<path d="M75,271.5 L86,265 L103,253 L120,244.7 L137,237.8 L149,231 L163,224 L172,219 L180,212 L189,205 L193,201 L200,199 L218,200 L218,320 L189,306.5 L154.6,296 L120,284 Z" fill="url(#t4m0)"/>
<path d="M84,270 L110,256 L140,242 L170,226 L190,212 L178,230 L150,250 L124,268 L104,278 Z" fill="#22366a" opacity="0.75" filter="url(#t4b2)"/>
<path d="M150,270 L180,250 L200,236 L215,240 L215,312 L189,304 L160,295 Z" fill="#3a5384" opacity="0.8" filter="url(#t4b2)"/>
</g>
<!-- bushes -->
<g fill="#40282e" opacity="0.5" filter="url(#t4b1)">
<path d="M449,366 L451,344 L454,330 L457,328 L460,340 L463,356 L466,368 Z"/>
<ellipse cx="474" cy="366" rx="10" ry="5"/>
<path d="M504,376 L510,358 L520,350 L532,346 L546,350 L556,344 L562,360 L560,384 Z"/>
</g>
<g stroke="#3a4c74" stroke-width="1.4" opacity="0.5" fill="none" filter="url(#t4b1)">
<path d="M560,262 L585,242 L610,224 M575,272 L600,252 L630,232 M600,276 L625,258 L650,246 M545,268 L565,250"/>
</g>
<!-- snow slope -->
<path d="M0,249 L17,255 L34,262 L51.5,267 L75.6,272 L103,279 L120,284 L137.4,291 L154.6,296 L171.7,301.4 L189,306.5 L221.5,318.5 L240.4,323.7 L257.6,330.6 L281.7,335.7 L310,341 L333,346 L376,357 L420,366 L462,374 L505,382 L548,389 L600,395 L656,400 L656,437 L0,437 Z" fill="#f8f9fc"/>
<!-- grass patches -->
<g fill="#b09a7c" opacity="0.75" filter="url(#t4b1)">
<ellipse cx="28" cy="259" rx="8" ry="3.5"/>
<ellipse cx="8" cy="254" rx="7" ry="3"/>
<ellipse cx="14" cy="264" rx="6" ry="1.5"/>
<ellipse cx="60" cy="271" rx="8" ry="2"/>
<ellipse cx="98" cy="283" rx="8" ry="2"/>
<ellipse cx="135" cy="293" rx="10" ry="2.5"/>
<ellipse cx="165" cy="302" rx="8" ry="2"/>
</g>
<!-- snow shadows -->
<g fill="#c7d0e4" opacity="0.85" filter="url(#t4b3)">
<path d="M0,344 L40,350 L90,358 L140,366 L188,372 L200,382 L150,378 L100,370 L50,362 L0,358 Z"/>
<ellipse cx="20" cy="300" rx="14" ry="4"/>
<ellipse cx="90" cy="318" rx="16" ry="4"/>
<ellipse cx="150" cy="342" rx="18" ry="4"/>
<ellipse cx="40" cy="395" rx="16" ry="5"/>
<ellipse cx="150" cy="410" rx="18" ry="4"/>
<ellipse cx="290" cy="392" rx="14" ry="4"/>
<ellipse cx="320" cy="412" rx="16" ry="4"/>
<ellipse cx="370" cy="425" rx="20" ry="4"/>
<ellipse cx="232" cy="398" rx="26" ry="5"/>
<ellipse cx="480" cy="430" rx="22" ry="4"/>
<ellipse cx="100" cy="428" rx="20" ry="4"/>
</g>

<g stroke="#15171c" stroke-linecap="round" fill="none">
<path d="M197.5,212 L196,262 L194,330 L192.5,362" stroke-width="2.2"/>
<path d="M188,362 L198,364" stroke-width="1.6"/>
<path d="M235,270 L244,325 L252,369" stroke-width="1.8"/>
<path d="M246,368 L256,371" stroke-width="1.6"/>
<path d="M273,236 L280,254 L293,272" stroke-width="1.6"/>
</g>
<path d="M212,235 L277,235 L278,258 L275,282 L277,305 L279,322 L279,345 L278,362 L273,377 L255,373 L256,343 L253,315 L251,295 L248,262 L240,272 L231,287 L222,300 L218,310 L220,325 L223,340 L228,364 L208,366 L204,345 L197,322 L190,300 L189,289 L194,278 L202,268 L208,252 Z" fill="#5d5b55"/>
<path d="M212,235 L240,235 L236,255 L222,280 L210,296 L196,310 L190,300 L189,289 L194,278 L202,268 L208,252 Z" fill="#6e6c65" opacity="0.6"/>
<path d="M262,240 L277,238 L279,322 L278,362 L268,366 L268,300 Z" fill="#48463f" opacity="0.55"/>
<path d="M206,362 L228,362 L229,376 L228,384 L215,384 L200,380 L188,376 L187,371 L196,367 Z" fill="#2a2624"/>
<path d="M208,372 L228,370 L228,382 L212,381 Z" fill="#6b4a36" opacity="0.8"/>
<path d="M254,370 L273,375 L272,388 L262,389 L250,384 L248,378 Z" fill="#2a2624"/>
<path d="M262,380 L272,382 L271,388 L262,387 Z" fill="#6b4a36" opacity="0.8"/>
<path d="M229,128 L251,126 L262,146 L276,160 L278,234 L211,236 L212,212 L203,212 L195,206 L195,189 L200,167 L209,144 L220,134 Z" fill="#1b6bbd"/>
<path d="M212,150 L222,142 L228,150 L226,200 L222,214 L213,212 L204,204 L205,180 Z" fill="#15191f"/>
<ellipse cx="193" cy="198" rx="2.5" ry="4" fill="#c99a8a"/>
<path d="M250,140 L258,137 L266,139 L276,143 L286,150 L294,160 L300,174 L303,190 L304,206 L302,218 L296,225 L284,229 L270,230.5 L252,227 L246,215 L246,160 Z" fill="#0d0e12"/>
<path d="M270,126 L278,127 L286,133 L292,143 L297,156 L302,172 L306,190 L306,206 L303,216 L299,202 L295,184 L289,166 L282,152 L274,141 L271,133 Z" fill="#23262d"/>
<path d="M274.5,131 L282,137.5 L289,149.5 L295,165 L300,183 L303.5,202" stroke="#9fb0c9" stroke-width="2.4" stroke-dasharray="1.6 2.2" fill="none" opacity="0.75"/><path d="M279,131 L286.5,140 L293.5,156 L298.5,174 L302.5,192" stroke="#8797b0" stroke-width="1.2" stroke-dasharray="1.4 2" fill="none" opacity="0.7"/>
<path d="M262,142 L270,156 L277,176 L282,196 M256,150 L262,170 L266,190" stroke="#5a5f6a" stroke-width="1.1" fill="none" opacity="0.7"/>
<path d="M240.5,126 C248,130 254,145 253.5,160 C253,185 248,205 243,222 C241,230 238,235 235.5,235 C232,234 229,226 226,214 C222,198 219,178 219.5,160 C220,145 230,130 240.5,126 Z" fill="#565a63" stroke="#a9aeb6" stroke-width="1.7"/>
<path d="M234,136 L240,134 L246,138 L244,142 L232,142 Z" fill="#c9ccd2" opacity="0.8"/>
<path d="M224,158 L232,160 L232,182 L226,186 L223,172 Z M241,160 L250,157 L250,172 L246,186 L241,182 Z M226,190 L232,186 L233,206 L229,212 Z M241,186 L246,190 L243,210 L240,206 Z M232,212 L240,212 L238,226 L234,226 Z" fill="#24262c" opacity="0.9"/>
<path d="M236.5,158 L236.5,226 M232,184 L241,184 M230,210 L242,209" stroke="#b4b8c0" stroke-width="1.1" fill="none" opacity="0.9"/>
<rect x="231" y="143.5" width="12" height="13.5" rx="1.5" fill="#15161a"/>
<path d="M256,219 L261.5,208 L266.5,206.5 L268,210 L260,222 Z" fill="none" stroke="#b9c23a" stroke-width="1.1"/>
<rect x="271" y="222" width="19" height="3.2" fill="#e6e6e6" opacity="0.9"/>
<ellipse cx="237.5" cy="111.5" rx="16" ry="16" fill="#111216"/>
<path d="M222,112 L253,112 L253,124 L248,128 L230,128 L223,124 Z" fill="#111216"/>
</svg>
<svg style="position:absolute;left:760px;top:825px;" width="110" height="62" viewBox="0 50 656 370" preserveAspectRatio="none">
<defs>
<linearGradient id="t5sky" gradientUnits="userSpaceOnUse" x1="0" y1="0" x2="0" y2="222">
<stop offset="0" stop-color="#5681b6"/>
<stop offset="0.06" stop-color="#618bbd"/>
<stop offset="0.25" stop-color="#80a5d2"/>
<stop offset="0.5" stop-color="#a6c3e5"/>
<stop offset="0.7" stop-color="#c4d8ef"/>
<stop offset="0.85" stop-color="#e1e8f4"/>
<stop offset="1" stop-color="#f0f2f8"/>
</linearGradient>
<linearGradient id="t5skyr" x1="0" y1="0" x2="1" y2="0">
<stop offset="0" stop-color="#fff" stop-opacity="0"/>
<stop offset="0.35" stop-color="#fff" stop-opacity="0.1"/>
<stop offset="1" stop-color="#fff" stop-opacity="0.36"/>
</linearGradient>
<radialGradient id="t5glow" gradientUnits="userSpaceOnUse" cx="640" cy="185" r="1" gradientTransform="translate(640 185) scale(440 120) translate(-640 -185)">
<stop offset="0" stop-color="#fff" stop-opacity="0.9"/>
<stop offset="0.5" stop-color="#fff" stop-opacity="0.55"/>
<stop offset="1" stop-color="#fff" stop-opacity="0"/>
</radialGradient>
<linearGradient id="t5hz" gradientUnits="userSpaceOnUse" x1="0" y1="232" x2="0" y2="275">
<stop offset="0" stop-color="#b4c5df"/>
<stop offset="0.3" stop-color="#809bc5"/>
<stop offset="1" stop-color="#4f72a8"/>
</linearGradient>
<linearGradient id="t5base" gradientUnits="userSpaceOnUse" x1="0" y1="195" x2="0" y2="400">
<stop offset="0" stop-color="#56739f"/>
<stop offset="0.25" stop-color="#364f80"/>
<stop offset="0.55" stop-color="#2a3d66"/>
<stop offset="1" stop-color="#1f2b49"/>
</linearGradient>
<linearGradient id="t5low" gradientUnits="userSpaceOnUse" x1="0" y1="270" x2="0" y2="400">
<stop offset="0" stop-color="#28385e"/>
<stop offset="1" stop-color="#1b2640"/>
</linearGradient>
<linearGradient id="t5face" gradientUnits="userSpaceOnUse" x1="0" y1="205" x2="0" y2="282">
<stop offset="0" stop-color="#eef1f7"/>
<stop offset="0.45" stop-color="#d3dbea"/>
<stop offset="1" stop-color="#7487ab"/>
</linearGradient>
<linearGradient id="t5m0" gradientUnits="userSpaceOnUse" x1="190" y1="200" x2="120" y2="290">
<stop offset="0" stop-color="#e3e9f3"/>
<stop offset="0.2" stop-color="#9cb0d2"/>
<stop offset="0.45" stop-color="#56739f"/>
<stop offset="1" stop-color="#38507f"/>
</linearGradient>
<filter id="t5b1" x="-20%" y="-20%" width="140%" height="140%"><feGaussianBlur stdDeviation="1"/></filter>
<filter id="t5b2" x="-20%" y="-20%" width="140%" height="140%"><feGaussianBlur stdDeviation="2"/></filter>
<filter id="t5b3" x="-30%" y="-30%" width="160%" height="160%"><feGaussianBlur stdDeviation="3.5"/></filter>
<filter id="t5b6" x="-30%" y="-30%" width="160%" height="160%"><feGaussianBlur stdDeviation="7"/></filter>
<filter id="t5rough" x="-10" y="150" width="690" height="287" filterUnits="userSpaceOnUse" primitiveUnits="userSpaceOnUse">
<feTurbulence type="fractalNoise" baseFrequency="0.03 0.05" numOctaves="4" seed="7" result="n"/>
<feDisplacementMap in="SourceGraphic" in2="n" scale="9" xChannelSelector="R" yChannelSelector="G"/>
</filter>
</defs>
<rect width="656" height="437" fill="url(#t5sky)"/>
<rect width="656" height="240" fill="url(#t5skyr)"/>
<rect width="656" height="320" fill="url(#t5glow)"/>
<ellipse cx="60" cy="215" rx="200" ry="22" fill="#fff" opacity="0.35" filter="url(#t5b6)"/>
<!-- contrails -->
<g fill="#fff">
<polygon points="326,126 420,111 500,98 560,87 603,81.5 560,90.5 500,102.5 420,114.5 326,127.5" opacity="0.62" filter="url(#t5b1)"/>
<polygon points="310,165 380,150 440,137 441,139 382,153 310,167" opacity="0.22" filter="url(#t5b1)"/>
<polygon points="0,148 50,147.5 105,150.5 50,151 0,150.5" opacity="0.6" filter="url(#t5b1)"/>
<ellipse cx="470" cy="26" rx="120" ry="6" opacity="0.1" transform="rotate(-9 470 26)" filter="url(#t5b3)"/>
<ellipse cx="300" cy="60" rx="140" ry="5" opacity="0.07" transform="rotate(-9 300 60)" filter="url(#t5b3)"/>
</g>
<!-- distant left range -->
<path d="M0,229 L7,227 L14,225.5 L20,227 L26,227.5 L34,229 L43,229 L52,228 L60,227 L65,225 L69,224 L74,225.5 L80,225 L86,224.5 L93,224 L98,226 L103,227.5 L112,228.5 L120,229 L130,230.5 L137,231 L146,233 L160,236 L200,245 L200,300 L0,300 Z" fill="url(#t5hz)"/>
<path d="M0,229 L7,227 L14,225.5 L20,227 L26,227.5 L34,229 L43,229 L52,228 L60,227 L65,225 L69,224 L74,225.5 L80,225 L86,224.5 L93,224 L98,226 L103,227.5 L112,228.5 L120,229 L130,230.5 L137,231 L146,233 L150,236 L130,237 L118,235 L104,238 L90,236 L76,239 L60,236 L46,238 L30,236 L14,237 L0,236 Z" fill="#eef2f8" filter="url(#t5b1)"/>
<path d="M60,246 L100,245 L100,247 L60,248 Z" fill="#dbe4f1" opacity="0.8" filter="url(#t5b1)"/>
<g filter="url(#t5rough)">
<!-- mountain base -->
<path d="M75,271.5 L86,265 L103,253 L120,244.7 L137,237.8 L149,231 L163,224 L172,219 L180,212 L189,205 L193,201 L215,198 L290,200 L310,200 L330,198 L348,187 L358,186 L370,190 L382,196 L398,191 L410,196 L426,202 L438,196 L450,200 L466,196 L482,197 L490,202 L510,198 L526,192 L540,187 L550,189 L570,192 L590,196 L610,192 L630,190 L642.6,183 L676,185 L676,420 L75,420 Z" fill="url(#t5base)"/>
<!-- far snowy band right -->
<path d="M400,194 L410,196 L426,202 L438,196 L450,200 L466,196 L482,197 L490,202 L510,198 L526,192 L540,187 L550,189 L570,192 L590,196 L610,192 L630,190 L642.6,183 L676,185 L676,212 L640,207 L628,203 L610,208 L590,214 L570,219 L550,226 L530,232 L510,236 L496,236 L480,228 L466,222 L450,214 L436,208 L426,208 L412,212 L402,216 Z" fill="#e4e9f2"/>
<g fill="#9db0d0" opacity="0.75" filter="url(#t5b1)">
<path d="M440,204 L452,202 L462,212 L474,222 L486,230 L470,226 L454,216 Z"/>
<path d="M492,204 L506,202 L520,198 L512,208 L500,218 L494,228 L488,214 Z"/>
<path d="M544,192 L552,196 L562,204 L556,214 L546,204 Z"/>
<path d="M580,198 L596,198 L612,196 L600,206 L584,208 Z"/>
<path d="M634,190 L644,188 L676,192 L676,206 L644,202 Z"/>
</g>
<!-- center blue mountain -->
<path d="M400,219 L412,213 L430,208.5 L444,214 L460,222 L480,230 L500,237 L488,246 L470,256 L456,263 L440,252 L424,240 L410,230 Z" fill="#3f5a8a"/>
<path d="M430,209 L444,214 L460,222 L480,230 L500,237 L480,240 L462,234 L446,224 Z" fill="#2f4573" opacity="0.8" filter="url(#t5b1)"/>
<!-- M1 snow (right behind person) -->
<path d="M280,199 L290,200 L310,200 L330,198 L348,187 L358,186 L370,190 L382,196 L398,191 L410,196 L414,206 L402,218 L390,228 L376,234 L360,246 L350,242 L330,234 L310,236 L290,232 L280,228 Z" fill="#e9edf5"/>
<g fill="#9db0d0" opacity="0.8" filter="url(#t5b1)">
<path d="M334,198 L346,192 L350,204 L360,214 L372,222 L364,230 L350,226 L340,214 Z"/>
<path d="M372,194 L384,200 L396,210 L404,214 L392,224 L384,214 Z"/>
<path d="M296,204 L312,206 L322,216 L312,226 L298,222 Z"/>
<path d="M380,232 L392,228 L388,240 L376,244 Z"/>
</g>
<!-- M1 face darker parts -->
<path d="M290,236 L330,238 L360,248 L380,240 L392,232 L420,244 L456,262 L436,280 L414,298 L390,314 L370,334 L356,346 L333,346 L290,335 Z" fill="#344b7b" filter="url(#t5b1)"/>
<path d="M290,262 L320,274 L350,296 L372,318 L356,346 L333,346 L290,335 Z" fill="#283b65" opacity="0.85" filter="url(#t5b2)"/>
<path d="M392,232 L420,244 L456,262 L440,268 L416,256 L398,246 Z" fill="#425e90" opacity="0.8" filter="url(#t5b1)"/>
<path d="M386,268 L400,264 L414,266 L426,270 L420,280 L404,284 L390,282 Z" fill="#b5c3da" opacity="0.75" filter="url(#t5b2)"/>
<!-- dark band (front ridge shadow face) -->
<path d="M628.5,203 L610,208 L590,214 L570,219 L550,226 L530,232 L510,236 L500,237 L488,246 L470,256 L456,263 L436,280 L470,276 L500,272 L530,267 L550,252 L570.5,238 L590.5,226 L610.5,214 Z" fill="#273960"/>
<!-- snowy face -->
<path d="M628.5,203 L642,209 L676,216 L676,279 L620,281 L590,281 L560,276 L540,270 L530,266 L550,252 L570.5,238 L590.5,226 L610.5,214 Z" fill="url(#t5face)" filter="url(#t5b1)"/>
<path d="M600,262 L630,256 L676,252 L676,282 L620,284 L590,282 Z" fill="#53688f" opacity="0.55" filter="url(#t5b3)"/>
<!-- lower dark mass -->
<path d="M436,280 L470,276 L500,272 L530,267 L560,276 L590,281 L620,282 L676,280 L676,420 L340,420 L356,346 L372,330 L390,314 L414,298 Z" fill="url(#t5low)" filter="url(#t5b1)"/>
<g fill="#a9b7d0" opacity="0.55" filter="url(#t5b2)">
<path d="M432,288 L460,282 L490,280 L520,276 L540,280 L516,286 L486,290 L458,296 L440,300 Z"/>
<path d="M466,296 L486,294 L482,302 L468,304 Z"/>
</g>
<!-- M0 (left of person) -->
<path d="M75,271.5 L86,265 L103,253 L120,244.7 L137,237.8 L149,231 L163,224 L172,219 L180,212 L189,205 L193,201 L200,199 L218,200 L218,320 L189,306.5 L154.6,296 L120,284 Z" fill="url(#t5m0)"/>
<path d="M84,270 L110,256 L140,242 L170,226 L190,212 L178,230 L150,250 L124,268 L104,278 Z" fill="#22366a" opacity="0.75" filter="url(#t5b2)"/>
<path d="M150,270 L180,250 L200,236 L215,240 L215,312 L189,304 L160,295 Z" fill="#3a5384" opacity="0.8" filter="url(#t5b2)"/>
</g>
<!-- bushes -->
<g fill="#40282e" opacity="0.5" filter="url(#t5b1)">
<path d="M449,366 L451,344 L454,330 L457,328 L460,340 L463,356 L466,368 Z"/>
<ellipse cx="474" cy="366" rx="10" ry="5"/>
<path d="M504,376 L510,358 L520,350 L532,346 L546,350 L556,344 L562,360 L560,384 Z"/>
</g>
<g stroke="#3a4c74" stroke-width="1.4" opacity="0.5" fill="none" filter="url(#t5b1)">
<path d="M560,262 L585,242 L610,224 M575,272 L600,252 L630,232 M600,276 L625,258 L650,246 M545,268 L565,250"/>
</g>
<!-- snow slope -->
<path d="M0,249 L17,255 L34,262 L51.5,267 L75.6,272 L103,279 L120,284 L137.4,291 L154.6,296 L171.7,301.4 L189,306.5 L221.5,318.5 L240.4,323.7 L257.6,330.6 L281.7,335.7 L310,341 L333,346 L376,357 L420,366 L462,374 L505,382 L548,389 L600,395 L656,400 L656,437 L0,437 Z" fill="#f8f9fc"/>
<!-- grass patches -->
<g fill="#b09a7c" opacity="0.75" filter="url(#t5b1)">
<ellipse cx="28" cy="259" rx="8" ry="3.5"/>
<ellipse cx="8" cy="254" rx="7" ry="3"/>
<ellipse cx="14" cy="264" rx="6" ry="1.5"/>
<ellipse cx="60" cy="271" rx="8" ry="2"/>
<ellipse cx="98" cy="283" rx="8" ry="2"/>
<ellipse cx="135" cy="293" rx="10" ry="2.5"/>
<ellipse cx="165" cy="302" rx="8" ry="2"/>
</g>
<!-- snow shadows -->
<g fill="#c7d0e4" opacity="0.85" filter="url(#t5b3)">
<path d="M0,344 L40,350 L90,358 L140,366 L188,372 L200,382 L150,378 L100,370 L50,362 L0,358 Z"/>
<ellipse cx="20" cy="300" rx="14" ry="4"/>
<ellipse cx="90" cy="318" rx="16" ry="4"/>
<ellipse cx="150" cy="342" rx="18" ry="4"/>
<ellipse cx="40" cy="395" rx="16" ry="5"/>
<ellipse cx="150" cy="410" rx="18" ry="4"/>
<ellipse cx="290" cy="392" rx="14" ry="4"/>
<ellipse cx="320" cy="412" rx="16" ry="4"/>
<ellipse cx="370" cy="425" rx="20" ry="4"/>
<ellipse cx="232" cy="398" rx="26" ry="5"/>
<ellipse cx="480" cy="430" rx="22" ry="4"/>
<ellipse cx="100" cy="428" rx="20" ry="4"/>
</g>

<g stroke="#15171c" stroke-linecap="round" fill="none">
<path d="M197.5,212 L196,262 L194,330 L192.5,362" stroke-width="2.2"/>
<path d="M188,362 L198,364" stroke-width="1.6"/>
<path d="M235,270 L244,325 L252,369" stroke-width="1.8"/>
<path d="M246,368 L256,371" stroke-width="1.6"/>
<path d="M273,236 L280,254 L293,272" stroke-width="1.6"/>
</g>
<path d="M212,235 L277,235 L278,258 L275,282 L277,305 L279,322 L279,345 L278,362 L273,377 L255,373 L256,343 L253,315 L251,295 L248,262 L240,272 L231,287 L222,300 L218,310 L220,325 L223,340 L228,364 L208,366 L204,345 L197,322 L190,300 L189,289 L194,278 L202,268 L208,252 Z" fill="#5d5b55"/>
<path d="M212,235 L240,235 L236,255 L222,280 L210,296 L196,310 L190,300 L189,289 L194,278 L202,268 L208,252 Z" fill="#6e6c65" opacity="0.6"/>
<path d="M262,240 L277,238 L279,322 L278,362 L268,366 L268,300 Z" fill="#48463f" opacity="0.55"/>
<path d="M206,362 L228,362 L229,376 L228,384 L215,384 L200,380 L188,376 L187,371 L196,367 Z" fill="#2a2624"/>
<path d="M208,372 L228,370 L228,382 L212,381 Z" fill="#6b4a36" opacity="0.8"/>
<path d="M254,370 L273,375 L272,388 L262,389 L250,384 L248,378 Z" fill="#2a2624"/>
<path d="M262,380 L272,382 L271,388 L262,387 Z" fill="#6b4a36" opacity="0.8"/>
<path d="M229,128 L251,126 L262,146 L276,160 L278,234 L211,236 L212,212 L203,212 L195,206 L195,189 L200,167 L209,144 L220,134 Z" fill="#1b6bbd"/>
<path d="M212,150 L222,142 L228,150 L226,200 L222,214 L213,212 L204,204 L205,180 Z" fill="#15191f"/>
<ellipse cx="193" cy="198" rx="2.5" ry="4" fill="#c99a8a"/>
<path d="M250,140 L258,137 L266,139 L276,143 L286,150 L294,160 L300,174 L303,190 L304,206 L302,218 L296,225 L284,229 L270,230.5 L252,227 L246,215 L246,160 Z" fill="#0d0e12"/>
<path d="M270,126 L278,127 L286,133 L292,143 L297,156 L302,172 L306,190 L306,206 L303,216 L299,202 L295,184 L289,166 L282,152 L274,141 L271,133 Z" fill="#23262d"/>
<path d="M274.5,131 L282,137.5 L289,149.5 L295,165 L300,183 L303.5,202" stroke="#9fb0c9" stroke-width="2.4" stroke-dasharray="1.6 2.2" fill="none" opacity="0.75"/><path d="M279,131 L286.5,140 L293.5,156 L298.5,174 L302.5,192" stroke="#8797b0" stroke-width="1.2" stroke-dasharray="1.4 2" fill="none" opacity="0.7"/>
<path d="M262,142 L270,156 L277,176 L282,196 M256,150 L262,170 L266,190" stroke="#5a5f6a" stroke-width="1.1" fill="none" opacity="0.7"/>
<path d="M240.5,126 C248,130 254,145 253.5,160 C253,185 248,205 243,222 C241,230 238,235 235.5,235 C232,234 229,226 226,214 C222,198 219,178 219.5,160 C220,145 230,130 240.5,126 Z" fill="#565a63" stroke="#a9aeb6" stroke-width="1.7"/>
<path d="M234,136 L240,134 L246,138 L244,142 L232,142 Z" fill="#c9ccd2" opacity="0.8"/>
<path d="M224,158 L232,160 L232,182 L226,186 L223,172 Z M241,160 L250,157 L250,172 L246,186 L241,182 Z M226,190 L232,186 L233,206 L229,212 Z M241,186 L246,190 L243,210 L240,206 Z M232,212 L240,212 L238,226 L234,226 Z" fill="#24262c" opacity="0.9"/>
<path d="M236.5,158 L236.5,226 M232,184 L241,184 M230,210 L242,209" stroke="#b4b8c0" stroke-width="1.1" fill="none" opacity="0.9"/>
<rect x="231" y="143.5" width="12" height="13.5" rx="1.5" fill="#15161a"/>
<path d="M256,219 L261.5,208 L266.5,206.5 L268,210 L260,222 Z" fill="none" stroke="#b9c23a" stroke-width="1.1"/>
<rect x="271" y="222" width="19" height="3.2" fill="#e6e6e6" opacity="0.9"/>
<ellipse cx="237.5" cy="111.5" rx="16" ry="16" fill="#111216"/>
<path d="M222,112 L253,112 L253,124 L248,128 L230,128 L223,124 Z" fill="#111216"/>
</svg>
<svg style="position:absolute;left:913px;top:816px;" width="80" height="80" viewBox="106 0 437 437" preserveAspectRatio="none">
<defs>
<linearGradient id="t6sky" gradientUnits="userSpaceOnUse" x1="0" y1="0" x2="0" y2="222">
<stop offset="0" stop-color="#5681b6"/>
<stop offset="0.06" stop-color="#618bbd"/>
<stop offset="0.25" stop-color="#80a5d2"/>
<stop offset="0.5" stop-color="#a6c3e5"/>
<stop offset="0.7" stop-color="#c4d8ef"/>
<stop offset="0.85" stop-color="#e1e8f4"/>
<stop offset="1" stop-color="#f0f2f8"/>
</linearGradient>
<linearGradient id="t6skyr" x1="0" y1="0" x2="1" y2="0">
<stop offset="0" stop-color="#fff" stop-opacity="0"/>
<stop offset="0.35" stop-color="#fff" stop-opacity="0.1"/>
<stop offset="1" stop-color="#fff" stop-opacity="0.36"/>
</linearGradient>
<radialGradient id="t6glow" gradientUnits="userSpaceOnUse" cx="640" cy="185" r="1" gradientTransform="translate(640 185) scale(440 120) translate(-640 -185)">
<stop offset="0" stop-color="#fff" stop-opacity="0.9"/>
<stop offset="0.5" stop-color="#fff" stop-opacity="0.55"/>
<stop offset="1" stop-color="#fff" stop-opacity="0"/>
</radialGradient>
<linearGradient id="t6hz" gradientUnits="userSpaceOnUse" x1="0" y1="232" x2="0" y2="275">
<stop offset="0" stop-color="#b4c5df"/>
<stop offset="0.3" stop-color="#809bc5"/>
<stop offset="1" stop-color="#4f72a8"/>
</linearGradient>
<linearGradient id="t6base" gradientUnits="userSpaceOnUse" x1="0" y1="195" x2="0" y2="400">
<stop offset="0" stop-color="#56739f"/>
<stop offset="0.25" stop-color="#364f80"/>
<stop offset="0.55" stop-color="#2a3d66"/>
<stop offset="1" stop-color="#1f2b49"/>
</linearGradient>
<linearGradient id="t6low" gradientUnits="userSpaceOnUse" x1="0" y1="270" x2="0" y2="400">
<stop offset="0" stop-color="#28385e"/>
<stop offset="1" stop-color="#1b2640"/>
</linearGradient>
<linearGradient id="t6face" gradientUnits="userSpaceOnUse" x1="0" y1="205" x2="0" y2="282">
<stop offset="0" stop-color="#eef1f7"/>
<stop offset="0.45" stop-color="#d3dbea"/>
<stop offset="1" stop-color="#7487ab"/>
</linearGradient>
<linearGradient id="t6m0" gradientUnits="userSpaceOnUse" x1="190" y1="200" x2="120" y2="290">
<stop offset="0" stop-color="#e3e9f3"/>
<stop offset="0.2" stop-color="#9cb0d2"/>
<stop offset="0.45" stop-color="#56739f"/>
<stop offset="1" stop-color="#38507f"/>
</linearGradient>
<filter id="t6b1" x="-20%" y="-20%" width="140%" height="140%"><feGaussianBlur stdDeviation="1"/></filter>
<filter id="t6b2" x="-20%" y="-20%" width="140%" height="140%"><feGaussianBlur stdDeviation="2"/></filter>
<filter id="t6b3" x="-30%" y="-30%" width="160%" height="160%"><feGaussianBlur stdDeviation="3.5"/></filter>
<filter id="t6b6" x="-30%" y="-30%" width="160%" height="160%"><feGaussianBlur stdDeviation="7"/></filter>
<filter id="t6rough" x="-10" y="150" width="690" height="287" filterUnits="userSpaceOnUse" primitiveUnits="userSpaceOnUse">
<feTurbulence type="fractalNoise" baseFrequency="0.03 0.05" numOctaves="4" seed="7" result="n"/>
<feDisplacementMap in="SourceGraphic" in2="n" scale="9" xChannelSelector="R" yChannelSelector="G"/>
</filter>
</defs>
<rect width="656" height="437" fill="url(#t6sky)"/>
<rect width="656" height="240" fill="url(#t6skyr)"/>
<rect width="656" height="320" fill="url(#t6glow)"/>
<ellipse cx="60" cy="215" rx="200" ry="22" fill="#fff" opacity="0.35" filter="url(#t6b6)"/>
<!-- contrails -->
<g fill="#fff">
<polygon points="326,126 420,111 500,98 560,87 603,81.5 560,90.5 500,102.5 420,114.5 326,127.5" opacity="0.62" filter="url(#t6b1)"/>
<polygon points="310,165 380,150 440,137 441,139 382,153 310,167" opacity="0.22" filter="url(#t6b1)"/>
<polygon points="0,148 50,147.5 105,150.5 50,151 0,150.5" opacity="0.6" filter="url(#t6b1)"/>
<ellipse cx="470" cy="26" rx="120" ry="6" opacity="0.1" transform="rotate(-9 470 26)" filter="url(#t6b3)"/>
<ellipse cx="300" cy="60" rx="140" ry="5" opacity="0.07" transform="rotate(-9 300 60)" filter="url(#t6b3)"/>
</g>
<!-- distant left range -->
<path d="M0,229 L7,227 L14,225.5 L20,227 L26,227.5 L34,229 L43,229 L52,228 L60,227 L65,225 L69,224 L74,225.5 L80,225 L86,224.5 L93,224 L98,226 L103,227.5 L112,228.5 L120,229 L130,230.5 L137,231 L146,233 L160,236 L200,245 L200,300 L0,300 Z" fill="url(#t6hz)"/>
<path d="M0,229 L7,227 L14,225.5 L20,227 L26,227.5 L34,229 L43,229 L52,228 L60,227 L65,225 L69,224 L74,225.5 L80,225 L86,224.5 L93,224 L98,226 L103,227.5 L112,228.5 L120,229 L130,230.5 L137,231 L146,233 L150,236 L130,237 L118,235 L104,238 L90,236 L76,239 L60,236 L46,238 L30,236 L14,237 L0,236 Z" fill="#eef2f8" filter="url(#t6b1)"/>
<path d="M60,246 L100,245 L100,247 L60,248 Z" fill="#dbe4f1" opacity="0.8" filter="url(#t6b1)"/>
<g filter="url(#t6rough)">
<!-- mountain base -->
<path d="M75,271.5 L86,265 L103,253 L120,244.7 L137,237.8 L149,231 L163,224 L172,219 L180,212 L189,205 L193,201 L215,198 L290,200 L310,200 L330,198 L348,187 L358,186 L370,190 L382,196 L398,191 L410,196 L426,202 L438,196 L450,200 L466,196 L482,197 L490,202 L510,198 L526,192 L540,187 L550,189 L570,192 L590,196 L610,192 L630,190 L642.6,183 L676,185 L676,420 L75,420 Z" fill="url(#t6base)"/>
<!-- far snowy band right -->
<path d="M400,194 L410,196 L426,202 L438,196 L450,200 L466,196 L482,197 L490,202 L510,198 L526,192 L540,187 L550,189 L570,192 L590,196 L610,192 L630,190 L642.6,183 L676,185 L676,212 L640,207 L628,203 L610,208 L590,214 L570,219 L550,226 L530,232 L510,236 L496,236 L480,228 L466,222 L450,214 L436,208 L426,208 L412,212 L402,216 Z" fill="#e4e9f2"/>
<g fill="#9db0d0" opacity="0.75" filter="url(#t6b1)">
<path d="M440,204 L452,202 L462,212 L474,222 L486,230 L470,226 L454,216 Z"/>
<path d="M492,204 L506,202 L520,198 L512,208 L500,218 L494,228 L488,214 Z"/>
<path d="M544,192 L552,196 L562,204 L556,214 L546,204 Z"/>
<path d="M580,198 L596,198 L612,196 L600,206 L584,208 Z"/>
<path d="M634,190 L644,188 L676,192 L676,206 L644,202 Z"/>
</g>
<!-- center blue mountain -->
<path d="M400,219 L412,213 L430,208.5 L444,214 L460,222 L480,230 L500,237 L488,246 L470,256 L456,263 L440,252 L424,240 L410,230 Z" fill="#3f5a8a"/>
<path d="M430,209 L444,214 L460,222 L480,230 L500,237 L480,240 L462,234 L446,224 Z" fill="#2f4573" opacity="0.8" filter="url(#t6b1)"/>
<!-- M1 snow (right behind person) -->
<path d="M280,199 L290,200 L310,200 L330,198 L348,187 L358,186 L370,190 L382,196 L398,191 L410,196 L414,206 L402,218 L390,228 L376,234 L360,246 L350,242 L330,234 L310,236 L290,232 L280,228 Z" fill="#e9edf5"/>
<g fill="#9db0d0" opacity="0.8" filter="url(#t6b1)">
<path d="M334,198 L346,192 L350,204 L360,214 L372,222 L364,230 L350,226 L340,214 Z"/>
<path d="M372,194 L384,200 L396,210 L404,214 L392,224 L384,214 Z"/>
<path d="M296,204 L312,206 L322,216 L312,226 L298,222 Z"/>
<path d="M380,232 L392,228 L388,240 L376,244 Z"/>
</g>
<!-- M1 face darker parts -->
<path d="M290,236 L330,238 L360,248 L380,240 L392,232 L420,244 L456,262 L436,280 L414,298 L390,314 L370,334 L356,346 L333,346 L290,335 Z" fill="#344b7b" filter="url(#t6b1)"/>
<path d="M290,262 L320,274 L350,296 L372,318 L356,346 L333,346 L290,335 Z" fill="#283b65" opacity="0.85" filter="url(#t6b2)"/>
<path d="M392,232 L420,244 L456,262 L440,268 L416,256 L398,246 Z" fill="#425e90" opacity="0.8" filter="url(#t6b1)"/>
<path d="M386,268 L400,264 L414,266 L426,270 L420,280 L404,284 L390,282 Z" fill="#b5c3da" opacity="0.75" filter="url(#t6b2)"/>
<!-- dark band (front ridge shadow face) -->
<path d="M628.5,203 L610,208 L590,214 L570,219 L550,226 L530,232 L510,236 L500,237 L488,246 L470,256 L456,263 L436,280 L470,276 L500,272 L530,267 L550,252 L570.5,238 L590.5,226 L610.5,214 Z" fill="#273960"/>
<!-- snowy face -->
<path d="M628.5,203 L642,209 L676,216 L676,279 L620,281 L590,281 L560,276 L540,270 L530,266 L550,252 L570.5,238 L590.5,226 L610.5,214 Z" fill="url(#t6face)" filter="url(#t6b1)"/>
<path d="M600,262 L630,256 L676,252 L676,282 L620,284 L590,282 Z" fill="#53688f" opacity="0.55" filter="url(#t6b3)"/>
<!-- lower dark mass -->
<path d="M436,280 L470,276 L500,272 L530,267 L560,276 L590,281 L620,282 L676,280 L676,420 L340,420 L356,346 L372,330 L390,314 L414,298 Z" fill="url(#t6low)" filter="url(#t6b1)"/>
<g fill="#a9b7d0" opacity="0.55" filter="url(#t6b2)">
<path d="M432,288 L460,282 L490,280 L520,276 L540,280 L516,286 L486,290 L458,296 L440,300 Z"/>
<path d="M466,296 L486,294 L482,302 L468,304 Z"/>
</g>
<!-- M0 (left of person) -->
<path d="M75,271.5 L86,265 L103,253 L120,244.7 L137,237.8 L149,231 L163,224 L172,219 L180,212 L189,205 L193,201 L200,199 L218,200 L218,320 L189,306.5 L154.6,296 L120,284 Z" fill="url(#t6m0)"/>
<path d="M84,270 L110,256 L140,242 L170,226 L190,212 L178,230 L150,250 L124,268 L104,278 Z" fill="#22366a" opacity="0.75" filter="url(#t6b2)"/>
<path d="M150,270 L180,250 L200,236 L215,240 L215,312 L189,304 L160,295 Z" fill="#3a5384" opacity="0.8" filter="url(#t6b2)"/>
</g>
<!-- bushes -->
<g fill="#40282e" opacity="0.5" filter="url(#t6b1)">
<path d="M449,366 L451,344 L454,330 L457,328 L460,340 L463,356 L466,368 Z"/>
<ellipse cx="474" cy="366" rx="10" ry="5"/>
<path d="M504,376 L510,358 L520,350 L532,346 L546,350 L556,344 L562,360 L560,384 Z"/>
</g>
<g stroke="#3a4c74" stroke-width="1.4" opacity="0.5" fill="none" filter="url(#t6b1)">
<path d="M560,262 L585,242 L610,224 M575,272 L600,252 L630,232 M600,276 L625,258 L650,246 M545,268 L565,250"/>
</g>
<!-- snow slope -->
<path d="M0,249 L17,255 L34,262 L51.5,267 L75.6,272 L103,279 L120,284 L137.4,291 L154.6,296 L171.7,301.4 L189,306.5 L221.5,318.5 L240.4,323.7 L257.6,330.6 L281.7,335.7 L310,341 L333,346 L376,357 L420,366 L462,374 L505,382 L548,389 L600,395 L656,400 L656,437 L0,437 Z" fill="#f8f9fc"/>
<!-- grass patches -->
<g fill="#b09a7c" opacity="0.75" filter="url(#t6b1)">
<ellipse cx="28" cy="259" rx="8" ry="3.5"/>
<ellipse cx="8" cy="254" rx="7" ry="3"/>
<ellipse cx="14" cy="264" rx="6" ry="1.5"/>
<ellipse cx="60" cy="271" rx="8" ry="2"/>
<ellipse cx="98" cy="283" rx="8" ry="2"/>
<ellipse cx="135" cy="293" rx="10" ry="2.5"/>
<ellipse cx="165" cy="302" rx="8" ry="2"/>
</g>
<!-- snow shadows -->
<g fill="#c7d0e4" opacity="0.85" filter="url(#t6b3)">
<path d="M0,344 L40,350 L90,358 L140,366 L188,372 L200,382 L150,378 L100,370 L50,362 L0,358 Z"/>
<ellipse cx="20" cy="300" rx="14" ry="4"/>
<ellipse cx="90" cy="318" rx="16" ry="4"/>
<ellipse cx="150" cy="342" rx="18" ry="4"/>
<ellipse cx="40" cy="395" rx="16" ry="5"/>
<ellipse cx="150" cy="410" rx="18" ry="4"/>
<ellipse cx="290" cy="392" rx="14" ry="4"/>
<ellipse cx="320" cy="412" rx="16" ry="4"/>
<ellipse cx="370" cy="425" rx="20" ry="4"/>
<ellipse cx="232" cy="398" rx="26" ry="5"/>
<ellipse cx="480" cy="430" rx="22" ry="4"/>
<ellipse cx="100" cy="428" rx="20" ry="4"/>
</g>

<g stroke="#15171c" stroke-linecap="round" fill="none">
<path d="M197.5,212 L196,262 L194,330 L192.5,362" stroke-width="2.2"/>
<path d="M188,362 L198,364" stroke-width="1.6"/>
<path d="M235,270 L244,325 L252,369" stroke-width="1.8"/>
<path d="M246,368 L256,371" stroke-width="1.6"/>
<path d="M273,236 L280,254 L293,272" stroke-width="1.6"/>
</g>
<path d="M212,235 L277,235 L278,258 L275,282 L277,305 L279,322 L279,345 L278,362 L273,377 L255,373 L256,343 L253,315 L251,295 L248,262 L240,272 L231,287 L222,300 L218,310 L220,325 L223,340 L228,364 L208,366 L204,345 L197,322 L190,300 L189,289 L194,278 L202,268 L208,252 Z" fill="#5d5b55"/>
<path d="M212,235 L240,235 L236,255 L222,280 L210,296 L196,310 L190,300 L189,289 L194,278 L202,268 L208,252 Z" fill="#6e6c65" opacity="0.6"/>
<path d="M262,240 L277,238 L279,322 L278,362 L268,366 L268,300 Z" fill="#48463f" opacity="0.55"/>
<path d="M206,362 L228,362 L229,376 L228,384 L215,384 L200,380 L188,376 L187,371 L196,367 Z" fill="#2a2624"/>
<path d="M208,372 L228,370 L228,382 L212,381 Z" fill="#6b4a36" opacity="0.8"/>
<path d="M254,370 L273,375 L272,388 L262,389 L250,384 L248,378 Z" fill="#2a2624"/>
<path d="M262,380 L272,382 L271,388 L262,387 Z" fill="#6b4a36" opacity="0.8"/>
<path d="M229,128 L251,126 L262,146 L276,160 L278,234 L211,236 L212,212 L203,212 L195,206 L195,189 L200,167 L209,144 L220,134 Z" fill="#1b6bbd"/>
<path d="M212,150 L222,142 L228,150 L226,200 L222,214 L213,212 L204,204 L205,180 Z" fill="#15191f"/>
<ellipse cx="193" cy="198" rx="2.5" ry="4" fill="#c99a8a"/>
<path d="M250,140 L258,137 L266,139 L276,143 L286,150 L294,160 L300,174 L303,190 L304,206 L302,218 L296,225 L284,229 L270,230.5 L252,227 L246,215 L246,160 Z" fill="#0d0e12"/>
<path d="M270,126 L278,127 L286,133 L292,143 L297,156 L302,172 L306,190 L306,206 L303,216 L299,202 L295,184 L289,166 L282,152 L274,141 L271,133 Z" fill="#23262d"/>
<path d="M274.5,131 L282,137.5 L289,149.5 L295,165 L300,183 L303.5,202" stroke="#9fb0c9" stroke-width="2.4" stroke-dasharray="1.6 2.2" fill="none" opacity="0.75"/><path d="M279,131 L286.5,140 L293.5,156 L298.5,174 L302.5,192" stroke="#8797b0" stroke-width="1.2" stroke-dasharray="1.4 2" fill="none" opacity="0.7"/>
<path d="M262,142 L270,156 L277,176 L282,196 M256,150 L262,170 L266,190" stroke="#5a5f6a" stroke-width="1.1" fill="none" opacity="0.7"/>
<path d="M240.5,126 C248,130 254,145 253.5,160 C253,185 248,205 243,222 C241,230 238,235 235.5,235 C232,234 229,226 226,214 C222,198 219,178 219.5,160 C220,145 230,130 240.5,126 Z" fill="#565a63" stroke="#a9aeb6" stroke-width="1.7"/>
<path d="M234,136 L240,134 L246,138 L244,142 L232,142 Z" fill="#c9ccd2" opacity="0.8"/>
<path d="M224,158 L232,160 L232,182 L226,186 L223,172 Z M241,160 L250,157 L250,172 L246,186 L241,182 Z M226,190 L232,186 L233,206 L229,212 Z M241,186 L246,190 L243,210 L240,206 Z M232,212 L240,212 L238,226 L234,226 Z" fill="#24262c" opacity="0.9"/>
<path d="M236.5,158 L236.5,226 M232,184 L241,184 M230,210 L242,209" stroke="#b4b8c0" stroke-width="1.1" fill="none" opacity="0.9"/>
<rect x="231" y="143.5" width="12" height="13.5" rx="1.5" fill="#15161a"/>
<path d="M256,219 L261.5,208 L266.5,206.5 L268,210 L260,222 Z" fill="none" stroke="#b9c23a" stroke-width="1.1"/>
<rect x="271" y="222" width="19" height="3.2" fill="#e6e6e6" opacity="0.9"/>
<ellipse cx="237.5" cy="111.5" rx="16" ry="16" fill="#111216"/>
<path d="M222,112 L253,112 L253,124 L248,128 L230,128 L223,124 Z" fill="#111216"/>
<defs><radialGradient id="vg" cx="0.5" cy="0.5" r="0.75"><stop offset="0.55" stop-color="#5a3aa8" stop-opacity="0"/><stop offset="1" stop-color="#5a3aa8" stop-opacity="0.35"/></radialGradient></defs><rect x="106" width="437" height="437" fill="#7a55c8" opacity="0.16"/><rect x="106" width="437" height="437" fill="#fff" opacity="0.2"/><rect x="106" width="437" height="437" fill="url(#vg)"/></svg>
<svg style="position:absolute;left:1036px;top:819px;" width="110" height="74" viewBox="0 0 656 437" preserveAspectRatio="none">
<defs>
<linearGradient id="t7sky" gradientUnits="userSpaceOnUse" x1="0" y1="0" x2="0" y2="222">
<stop offset="0" stop-color="#5681b6"/>
<stop offset="0.06" stop-color="#618bbd"/>
<stop offset="0.25" stop-color="#80a5d2"/>
<stop offset="0.5" stop-color="#a6c3e5"/>
<stop offset="0.7" stop-color="#c4d8ef"/>
<stop offset="0.85" stop-color="#e1e8f4"/>
<stop offset="1" stop-color="#f0f2f8"/>
</linearGradient>
<linearGradient id="t7skyr" x1="0" y1="0" x2="1" y2="0">
<stop offset="0" stop-color="#fff" stop-opacity="0"/>
<stop offset="0.35" stop-color="#fff" stop-opacity="0.1"/>
<stop offset="1" stop-color="#fff" stop-opacity="0.36"/>
</linearGradient>
<radialGradient id="t7glow" gradientUnits="userSpaceOnUse" cx="640" cy="185" r="1" gradientTransform="translate(640 185) scale(440 120) translate(-640 -185)">
<stop offset="0" stop-color="#fff" stop-opacity="0.9"/>
<stop offset="0.5" stop-color="#fff" stop-opacity="0.55"/>
<stop offset="1" stop-color="#fff" stop-opacity="0"/>
</radialGradient>
<linearGradient id="t7hz" gradientUnits="userSpaceOnUse" x1="0" y1="232" x2="0" y2="275">
<stop offset="0" stop-color="#b4c5df"/>
<stop offset="0.3" stop-color="#809bc5"/>
<stop offset="1" stop-color="#4f72a8"/>
</linearGradient>
<linearGradient id="t7base" gradientUnits="userSpaceOnUse" x1="0" y1="195" x2="0" y2="400">
<stop offset="0" stop-color="#56739f"/>
<stop offset="0.25" stop-color="#364f80"/>
<stop offset="0.55" stop-color="#2a3d66"/>
<stop offset="1" stop-color="#1f2b49"/>
</linearGradient>
<linearGradient id="t7low" gradientUnits="userSpaceOnUse" x1="0" y1="270" x2="0" y2="400">
<stop offset="0" stop-color="#28385e"/>
<stop offset="1" stop-color="#1b2640"/>
</linearGradient>
<linearGradient id="t7face" gradientUnits="userSpaceOnUse" x1="0" y1="205" x2="0" y2="282">
<stop offset="0" stop-color="#eef1f7"/>
<stop offset="0.45" stop-color="#d3dbea"/>
<stop offset="1" stop-color="#7487ab"/>
</linearGradient>
<linearGradient id="t7m0" gradientUnits="userSpaceOnUse" x1="190" y1="200" x2="120" y2="290">
<stop offset="0" stop-color="#e3e9f3"/>
<stop offset="0.2" stop-color="#9cb0d2"/>
<stop offset="0.45" stop-color="#56739f"/>
<stop offset="1" stop-color="#38507f"/>
</linearGradient>
<filter id="t7b1" x="-20%" y="-20%" width="140%" height="140%"><feGaussianBlur stdDeviation="1"/></filter>
<filter id="t7b2" x="-20%" y="-20%" width="140%" height="140%"><feGaussianBlur stdDeviation="2"/></filter>
<filter id="t7b3" x="-30%" y="-30%" width="160%" height="160%"><feGaussianBlur stdDeviation="3.5"/></filter>
<filter id="t7b6" x="-30%" y="-30%" width="160%" height="160%"><feGaussianBlur stdDeviation="7"/></filter>
<filter id="t7rough" x="-10" y="150" width="690" height="287" filterUnits="userSpaceOnUse" primitiveUnits="userSpaceOnUse">
<feTurbulence type="fractalNoise" baseFrequency="0.03 0.05" numOctaves="4" seed="7" result="n"/>
<feDisplacementMap in="SourceGraphic" in2="n" scale="9" xChannelSelector="R" yChannelSelector="G"/>
</filter>
</defs>
<rect width="656" height="437" fill="url(#t7sky)"/>
<rect width="656" height="240" fill="url(#t7skyr)"/>
<rect width="656" height="320" fill="url(#t7glow)"/>
<ellipse cx="60" cy="215" rx="200" ry="22" fill="#fff" opacity="0.35" filter="url(#t7b6)"/>
<!-- contrails -->
<g fill="#fff">
<polygon points="326,126 420,111 500,98 560,87 603,81.5 560,90.5 500,102.5 420,114.5 326,127.5" opacity="0.62" filter="url(#t7b1)"/>
<polygon points="310,165 380,150 440,137 441,139 382,153 310,167" opacity="0.22" filter="url(#t7b1)"/>
<polygon points="0,148 50,147.5 105,150.5 50,151 0,150.5" opacity="0.6" filter="url(#t7b1)"/>
<ellipse cx="470" cy="26" rx="120" ry="6" opacity="0.1" transform="rotate(-9 470 26)" filter="url(#t7b3)"/>
<ellipse cx="300" cy="60" rx="140" ry="5" opacity="0.07" transform="rotate(-9 300 60)" filter="url(#t7b3)"/>
</g>
<!-- distant left range -->
<path d="M0,229 L7,227 L14,225.5 L20,227 L26,227.5 L34,229 L43,229 L52,228 L60,227 L65,225 L69,224 L74,225.5 L80,225 L86,224.5 L93,224 L98,226 L103,227.5 L112,228.5 L120,229 L130,230.5 L137,231 L146,233 L160,236 L200,245 L200,300 L0,300 Z" fill="url(#t7hz)"/>
<path d="M0,229 L7,227 L14,225.5 L20,227 L26,227.5 L34,229 L43,229 L52,228 L60,227 L65,225 L69,224 L74,225.5 L80,225 L86,224.5 L93,224 L98,226 L103,227.5 L112,228.5 L120,229 L130,230.5 L137,231 L146,233 L150,236 L130,237 L118,235 L104,238 L90,236 L76,239 L60,236 L46,238 L30,236 L14,237 L0,236 Z" fill="#eef2f8" filter="url(#t7b1)"/>
<path d="M60,246 L100,245 L100,247 L60,248 Z" fill="#dbe4f1" opacity="0.8" filter="url(#t7b1)"/>
<g filter="url(#t7rough)">
<!-- mountain base -->
<path d="M75,271.5 L86,265 L103,253 L120,244.7 L137,237.8 L149,231 L163,224 L172,219 L180,212 L189,205 L193,201 L215,198 L290,200 L310,200 L330,198 L348,187 L358,186 L370,190 L382,196 L398,191 L410,196 L426,202 L438,196 L450,200 L466,196 L482,197 L490,202 L510,198 L526,192 L540,187 L550,189 L570,192 L590,196 L610,192 L630,190 L642.6,183 L676,185 L676,420 L75,420 Z" fill="url(#t7base)"/>
<!-- far snowy band right -->
<path d="M400,194 L410,196 L426,202 L438,196 L450,200 L466,196 L482,197 L490,202 L510,198 L526,192 L540,187 L550,189 L570,192 L590,196 L610,192 L630,190 L642.6,183 L676,185 L676,212 L640,207 L628,203 L610,208 L590,214 L570,219 L550,226 L530,232 L510,236 L496,236 L480,228 L466,222 L450,214 L436,208 L426,208 L412,212 L402,216 Z" fill="#e4e9f2"/>
<g fill="#9db0d0" opacity="0.75" filter="url(#t7b1)">
<path d="M440,204 L452,202 L462,212 L474,222 L486,230 L470,226 L454,216 Z"/>
<path d="M492,204 L506,202 L520,198 L512,208 L500,218 L494,228 L488,214 Z"/>
<path d="M544,192 L552,196 L562,204 L556,214 L546,204 Z"/>
<path d="M580,198 L596,198 L612,196 L600,206 L584,208 Z"/>
<path d="M634,190 L644,188 L676,192 L676,206 L644,202 Z"/>
</g>
<!-- center blue mountain -->
<path d="M400,219 L412,213 L430,208.5 L444,214 L460,222 L480,230 L500,237 L488,246 L470,256 L456,263 L440,252 L424,240 L410,230 Z" fill="#3f5a8a"/>
<path d="M430,209 L444,214 L460,222 L480,230 L500,237 L480,240 L462,234 L446,224 Z" fill="#2f4573" opacity="0.8" filter="url(#t7b1)"/>
<!-- M1 snow (right behind person) -->
<path d="M280,199 L290,200 L310,200 L330,198 L348,187 L358,186 L370,190 L382,196 L398,191 L410,196 L414,206 L402,218 L390,228 L376,234 L360,246 L350,242 L330,234 L310,236 L290,232 L280,228 Z" fill="#e9edf5"/>
<g fill="#9db0d0" opacity="0.8" filter="url(#t7b1)">
<path d="M334,198 L346,192 L350,204 L360,214 L372,222 L364,230 L350,226 L340,214 Z"/>
<path d="M372,194 L384,200 L396,210 L404,214 L392,224 L384,214 Z"/>
<path d="M296,204 L312,206 L322,216 L312,226 L298,222 Z"/>
<path d="M380,232 L392,228 L388,240 L376,244 Z"/>
</g>
<!-- M1 face darker parts -->
<path d="M290,236 L330,238 L360,248 L380,240 L392,232 L420,244 L456,262 L436,280 L414,298 L390,314 L370,334 L356,346 L333,346 L290,335 Z" fill="#344b7b" filter="url(#t7b1)"/>
<path d="M290,262 L320,274 L350,296 L372,318 L356,346 L333,346 L290,335 Z" fill="#283b65" opacity="0.85" filter="url(#t7b2)"/>
<path d="M392,232 L420,244 L456,262 L440,268 L416,256 L398,246 Z" fill="#425e90" opacity="0.8" filter="url(#t7b1)"/>
<path d="M386,268 L400,264 L414,266 L426,270 L420,280 L404,284 L390,282 Z" fill="#b5c3da" opacity="0.75" filter="url(#t7b2)"/>
<!-- dark band (front ridge shadow face) -->
<path d="M628.5,203 L610,208 L590,214 L570,219 L550,226 L530,232 L510,236 L500,237 L488,246 L470,256 L456,263 L436,280 L470,276 L500,272 L530,267 L550,252 L570.5,238 L590.5,226 L610.5,214 Z" fill="#273960"/>
<!-- snowy face -->
<path d="M628.5,203 L642,209 L676,216 L676,279 L620,281 L590,281 L560,276 L540,270 L530,266 L550,252 L570.5,238 L590.5,226 L610.5,214 Z" fill="url(#t7face)" filter="url(#t7b1)"/>
<path d="M600,262 L630,256 L676,252 L676,282 L620,284 L590,282 Z" fill="#53688f" opacity="0.55" filter="url(#t7b3)"/>
<!-- lower dark mass -->
<path d="M436,280 L470,276 L500,272 L530,267 L560,276 L590,281 L620,282 L676,280 L676,420 L340,420 L356,346 L372,330 L390,314 L414,298 Z" fill="url(#t7low)" filter="url(#t7b1)"/>
<g fill="#a9b7d0" opacity="0.55" filter="url(#t7b2)">
<path d="M432,288 L460,282 L490,280 L520,276 L540,280 L516,286 L486,290 L458,296 L440,300 Z"/>
<path d="M466,296 L486,294 L482,302 L468,304 Z"/>
</g>
<!-- M0 (left of person) -->
<path d="M75,271.5 L86,265 L103,253 L120,244.7 L137,237.8 L149,231 L163,224 L172,219 L180,212 L189,205 L193,201 L200,199 L218,200 L218,320 L189,306.5 L154.6,296 L120,284 Z" fill="url(#t7m0)"/>
<path d="M84,270 L110,256 L140,242 L170,226 L190,212 L178,230 L150,250 L124,268 L104,278 Z" fill="#22366a" opacity="0.75" filter="url(#t7b2)"/>
<path d="M150,270 L180,250 L200,236 L215,240 L215,312 L189,304 L160,295 Z" fill="#3a5384" opacity="0.8" filter="url(#t7b2)"/>
</g>
<!-- bushes -->
<g fill="#40282e" opacity="0.5" filter="url(#t7b1)">
<path d="M449,366 L451,344 L454,330 L457,328 L460,340 L463,356 L466,368 Z"/>
<ellipse cx="474" cy="366" rx="10" ry="5"/>
<path d="M504,376 L510,358 L520,350 L532,346 L546,350 L556,344 L562,360 L560,384 Z"/>
</g>
<g stroke="#3a4c74" stroke-width="1.4" opacity="0.5" fill="none" filter="url(#t7b1)">
<path d="M560,262 L585,242 L610,224 M575,272 L600,252 L630,232 M600,276 L625,258 L650,246 M545,268 L565,250"/>
</g>
<!-- snow slope -->
<path d="M0,249 L17,255 L34,262 L51.5,267 L75.6,272 L103,279 L120,284 L137.4,291 L154.6,296 L171.7,301.4 L189,306.5 L221.5,318.5 L240.4,323.7 L257.6,330.6 L281.7,335.7 L310,341 L333,346 L376,357 L420,366 L462,374 L505,382 L548,389 L600,395 L656,400 L656,437 L0,437 Z" fill="#f8f9fc"/>
<!-- grass patches -->
<g fill="#b09a7c" opacity="0.75" filter="url(#t7b1)">
<ellipse cx="28" cy="259" rx="8" ry="3.5"/>
<ellipse cx="8" cy="254" rx="7" ry="3"/>
<ellipse cx="14" cy="264" rx="6" ry="1.5"/>
<ellipse cx="60" cy="271" rx="8" ry="2"/>
<ellipse cx="98" cy="283" rx="8" ry="2"/>
<ellipse cx="135" cy="293" rx="10" ry="2.5"/>
<ellipse cx="165" cy="302" rx="8" ry="2"/>
</g>
<!-- snow shadows -->
<g fill="#c7d0e4" opacity="0.85" filter="url(#t7b3)">
<path d="M0,344 L40,350 L90,358 L140,366 L188,372 L200,382 L150,378 L100,370 L50,362 L0,358 Z"/>
<ellipse cx="20" cy="300" rx="14" ry="4"/>
<ellipse cx="90" cy="318" rx="16" ry="4"/>
<ellipse cx="150" cy="342" rx="18" ry="4"/>
<ellipse cx="40" cy="395" rx="16" ry="5"/>
<ellipse cx="150" cy="410" rx="18" ry="4"/>
<ellipse cx="290" cy="392" rx="14" ry="4"/>
<ellipse cx="320" cy="412" rx="16" ry="4"/>
<ellipse cx="370" cy="425" rx="20" ry="4"/>
<ellipse cx="232" cy="398" rx="26" ry="5"/>
<ellipse cx="480" cy="430" rx="22" ry="4"/>
<ellipse cx="100" cy="428" rx="20" ry="4"/>
</g>

<g stroke="#15171c" stroke-linecap="round" fill="none">
<path d="M197.5,212 L196,262 L194,330 L192.5,362" stroke-width="2.2"/>
<path d="M188,362 L198,364" stroke-width="1.6"/>
<path d="M235,270 L244,325 L252,369" stroke-width="1.8"/>
<path d="M246,368 L256,371" stroke-width="1.6"/>
<path d="M273,236 L280,254 L293,272" stroke-width="1.6"/>
</g>
<path d="M212,235 L277,235 L278,258 L275,282 L277,305 L279,322 L279,345 L278,362 L273,377 L255,373 L256,343 L253,315 L251,295 L248,262 L240,272 L231,287 L222,300 L218,310 L220,325 L223,340 L228,364 L208,366 L204,345 L197,322 L190,300 L189,289 L194,278 L202,268 L208,252 Z" fill="#5d5b55"/>
<path d="M212,235 L240,235 L236,255 L222,280 L210,296 L196,310 L190,300 L189,289 L194,278 L202,268 L208,252 Z" fill="#6e6c65" opacity="0.6"/>
<path d="M262,240 L277,238 L279,322 L278,362 L268,366 L268,300 Z" fill="#48463f" opacity="0.55"/>
<path d="M206,362 L228,362 L229,376 L228,384 L215,384 L200,380 L188,376 L187,371 L196,367 Z" fill="#2a2624"/>
<path d="M208,372 L228,370 L228,382 L212,381 Z" fill="#6b4a36" opacity="0.8"/>
<path d="M254,370 L273,375 L272,388 L262,389 L250,384 L248,378 Z" fill="#2a2624"/>
<path d="M262,380 L272,382 L271,388 L262,387 Z" fill="#6b4a36" opacity="0.8"/>
<path d="M229,128 L251,126 L262,146 L276,160 L278,234 L211,236 L212,212 L203,212 L195,206 L195,189 L200,167 L209,144 L220,134 Z" fill="#1b6bbd"/>
<path d="M212,150 L222,142 L228,150 L226,200 L222,214 L213,212 L204,204 L205,180 Z" fill="#15191f"/>
<ellipse cx="193" cy="198" rx="2.5" ry="4" fill="#c99a8a"/>
<path d="M250,140 L258,137 L266,139 L276,143 L286,150 L294,160 L300,174 L303,190 L304,206 L302,218 L296,225 L284,229 L270,230.5 L252,227 L246,215 L246,160 Z" fill="#0d0e12"/>
<path d="M270,126 L278,127 L286,133 L292,143 L297,156 L302,172 L306,190 L306,206 L303,216 L299,202 L295,184 L289,166 L282,152 L274,141 L271,133 Z" fill="#23262d"/>
<path d="M274.5,131 L282,137.5 L289,149.5 L295,165 L300,183 L303.5,202" stroke="#9fb0c9" stroke-width="2.4" stroke-dasharray="1.6 2.2" fill="none" opacity="0.75"/><path d="M279,131 L286.5,140 L293.5,156 L298.5,174 L302.5,192" stroke="#8797b0" stroke-width="1.2" stroke-dasharray="1.4 2" fill="none" opacity="0.7"/>
<path d="M262,142 L270,156 L277,176 L282,196 M256,150 L262,170 L266,190" stroke="#5a5f6a" stroke-width="1.1" fill="none" opacity="0.7"/>
<path d="M240.5,126 C248,130 254,145 253.5,160 C253,185 248,205 243,222 C241,230 238,235 235.5,235 C232,234 229,226 226,214 C222,198 219,178 219.5,160 C220,145 230,130 240.5,126 Z" fill="#565a63" stroke="#a9aeb6" stroke-width="1.7"/>
<path d="M234,136 L240,134 L246,138 L244,142 L232,142 Z" fill="#c9ccd2" opacity="0.8"/>
<path d="M224,158 L232,160 L232,182 L226,186 L223,172 Z M241,160 L250,157 L250,172 L246,186 L241,182 Z M226,190 L232,186 L233,206 L229,212 Z M241,186 L246,190 L243,210 L240,206 Z M232,212 L240,212 L238,226 L234,226 Z" fill="#24262c" opacity="0.9"/>
<path d="M236.5,158 L236.5,226 M232,184 L241,184 M230,210 L242,209" stroke="#b4b8c0" stroke-width="1.1" fill="none" opacity="0.9"/>
<rect x="231" y="143.5" width="12" height="13.5" rx="1.5" fill="#15161a"/>
<path d="M256,219 L261.5,208 L266.5,206.5 L268,210 L260,222 Z" fill="none" stroke="#b9c23a" stroke-width="1.1"/>
<rect x="271" y="222" width="19" height="3.2" fill="#e6e6e6" opacity="0.9"/>
<ellipse cx="237.5" cy="111.5" rx="16" ry="16" fill="#111216"/>
<path d="M222,112 L253,112 L253,124 L248,128 L230,128 L223,124 Z" fill="#111216"/>
</svg>
<div style="position:absolute;left:1174px;top:819px;width:110px;height:74px;overflow:hidden;background:#b9c4d6"><svg style="position:absolute;left:-20px;top:-10px" width="150" height="94" viewBox="0 0 656 437" preserveAspectRatio="none"><defs><filter id="wmb" x="-10%" y="-10%" width="120%" height="120%"><feGaussianBlur stdDeviation="42 20"/></filter></defs><g filter="url(#wmb)">
<defs>
<linearGradient id="t8sky" gradientUnits="userSpaceOnUse" x1="0" y1="0" x2="0" y2="222">
<stop offset="0" stop-color="#5681b6"/>
<stop offset="0.06" stop-color="#618bbd"/>
<stop offset="0.25" stop-color="#80a5d2"/>
<stop offset="0.5" stop-color="#a6c3e5"/>
<stop offset="0.7" stop-color="#c4d8ef"/>
<stop offset="0.85" stop-color="#e1e8f4"/>
<stop offset="1" stop-color="#f0f2f8"/>
</linearGradient>
<linearGradient id="t8skyr" x1="0" y1="0" x2="1" y2="0">
<stop offset="0" stop-color="#fff" stop-opacity="0"/>
<stop offset="0.35" stop-color="#fff" stop-opacity="0.1"/>
<stop offset="1" stop-color="#fff" stop-opacity="0.36"/>
</linearGradient>
<radialGradient id="t8glow" gradientUnits="userSpaceOnUse" cx="640" cy="185" r="1" gradientTransform="translate(640 185) scale(440 120) translate(-640 -185)">
<stop offset="0" stop-color="#fff" stop-opacity="0.9"/>
<stop offset="0.5" stop-color="#fff" stop-opacity="0.55"/>
<stop offset="1" stop-color="#fff" stop-opacity="0"/>
</radialGradient>
<linearGradient id="t8hz" gradientUnits="userSpaceOnUse" x1="0" y1="232" x2="0" y2="275">
<stop offset="0" stop-color="#b4c5df"/>
<stop offset="0.3" stop-color="#809bc5"/>
<stop offset="1" stop-color="#4f72a8"/>
</linearGradient>
<linearGradient id="t8base" gradientUnits="userSpaceOnUse" x1="0" y1="195" x2="0" y2="400">
<stop offset="0" stop-color="#56739f"/>
<stop offset="0.25" stop-color="#364f80"/>
<stop offset="0.55" stop-color="#2a3d66"/>
<stop offset="1" stop-color="#1f2b49"/>
</linearGradient>
<linearGradient id="t8low" gradientUnits="userSpaceOnUse" x1="0" y1="270" x2="0" y2="400">
<stop offset="0" stop-color="#28385e"/>
<stop offset="1" stop-color="#1b2640"/>
</linearGradient>
<linearGradient id="t8face" gradientUnits="userSpaceOnUse" x1="0" y1="205" x2="0" y2="282">
<stop offset="0" stop-color="#eef1f7"/>
<stop offset="0.45" stop-color="#d3dbea"/>
<stop offset="1" stop-color="#7487ab"/>
</linearGradient>
<linearGradient id="t8m0" gradientUnits="userSpaceOnUse" x1="190" y1="200" x2="120" y2="290">
<stop offset="0" stop-color="#e3e9f3"/>
<stop offset="0.2" stop-color="#9cb0d2"/>
<stop offset="0.45" stop-color="#56739f"/>
<stop offset="1" stop-color="#38507f"/>
</linearGradient>
<filter id="t8b1" x="-20%" y="-20%" width="140%" height="140%"><feGaussianBlur stdDeviation="1"/></filter>
<filter id="t8b2" x="-20%" y="-20%" width="140%" height="140%"><feGaussianBlur stdDeviation="2"/></filter>
<filter id="t8b3" x="-30%" y="-30%" width="160%" height="160%"><feGaussianBlur stdDeviation="3.5"/></filter>
<filter id="t8b6" x="-30%" y="-30%" width="160%" height="160%"><feGaussianBlur stdDeviation="7"/></filter>
<filter id="t8rough" x="-10" y="150" width="690" height="287" filterUnits="userSpaceOnUse" primitiveUnits="userSpaceOnUse">
<feTurbulence type="fractalNoise" baseFrequency="0.03 0.05" numOctaves="4" seed="7" result="n"/>
<feDisplacementMap in="SourceGraphic" in2="n" scale="9" xChannelSelector="R" yChannelSelector="G"/>
</filter>
</defs>
<rect width="656" height="437" fill="url(#t8sky)"/>
<rect width="656" height="240" fill="url(#t8skyr)"/>
<rect width="656" height="320" fill="url(#t8glow)"/>
<ellipse cx="60" cy="215" rx="200" ry="22" fill="#fff" opacity="0.35" filter="url(#t8b6)"/>
<!-- contrails -->
<g fill="#fff">
<polygon points="326,126 420,111 500,98 560,87 603,81.5 560,90.5 500,102.5 420,114.5 326,127.5" opacity="0.62" filter="url(#t8b1)"/>
<polygon points="310,165 380,150 440,137 441,139 382,153 310,167" opacity="0.22" filter="url(#t8b1)"/>
<polygon points="0,148 50,147.5 105,150.5 50,151 0,150.5" opacity="0.6" filter="url(#t8b1)"/>
<ellipse cx="470" cy="26" rx="120" ry="6" opacity="0.1" transform="rotate(-9 470 26)" filter="url(#t8b3)"/>
<ellipse cx="300" cy="60" rx="140" ry="5" opacity="0.07" transform="rotate(-9 300 60)" filter="url(#t8b3)"/>
</g>
<!-- distant left range -->
<path d="M0,229 L7,227 L14,225.5 L20,227 L26,227.5 L34,229 L43,229 L52,228 L60,227 L65,225 L69,224 L74,225.5 L80,225 L86,224.5 L93,224 L98,226 L103,227.5 L112,228.5 L120,229 L130,230.5 L137,231 L146,233 L160,236 L200,245 L200,300 L0,300 Z" fill="url(#t8hz)"/>
<path d="M0,229 L7,227 L14,225.5 L20,227 L26,227.5 L34,229 L43,229 L52,228 L60,227 L65,225 L69,224 L74,225.5 L80,225 L86,224.5 L93,224 L98,226 L103,227.5 L112,228.5 L120,229 L130,230.5 L137,231 L146,233 L150,236 L130,237 L118,235 L104,238 L90,236 L76,239 L60,236 L46,238 L30,236 L14,237 L0,236 Z" fill="#eef2f8" filter="url(#t8b1)"/>
<path d="M60,246 L100,245 L100,247 L60,248 Z" fill="#dbe4f1" opacity="0.8" filter="url(#t8b1)"/>
<g filter="url(#t8rough)">
<!-- mountain base -->
<path d="M75,271.5 L86,265 L103,253 L120,244.7 L137,237.8 L149,231 L163,224 L172,219 L180,212 L189,205 L193,201 L215,198 L290,200 L310,200 L330,198 L348,187 L358,186 L370,190 L382,196 L398,191 L410,196 L426,202 L438,196 L450,200 L466,196 L482,197 L490,202 L510,198 L526,192 L540,187 L550,189 L570,192 L590,196 L610,192 L630,190 L642.6,183 L676,185 L676,420 L75,420 Z" fill="url(#t8base)"/>
<!-- far snowy band right -->
<path d="M400,194 L410,196 L426,202 L438,196 L450,200 L466,196 L482,197 L490,202 L510,198 L526,192 L540,187 L550,189 L570,192 L590,196 L610,192 L630,190 L642.6,183 L676,185 L676,212 L640,207 L628,203 L610,208 L590,214 L570,219 L550,226 L530,232 L510,236 L496,236 L480,228 L466,222 L450,214 L436,208 L426,208 L412,212 L402,216 Z" fill="#e4e9f2"/>
<g fill="#9db0d0" opacity="0.75" filter="url(#t8b1)">
<path d="M440,204 L452,202 L462,212 L474,222 L486,230 L470,226 L454,216 Z"/>
<path d="M492,204 L506,202 L520,198 L512,208 L500,218 L494,228 L488,214 Z"/>
<path d="M544,192 L552,196 L562,204 L556,214 L546,204 Z"/>
<path d="M580,198 L596,198 L612,196 L600,206 L584,208 Z"/>
<path d="M634,190 L644,188 L676,192 L676,206 L644,202 Z"/>
</g>
<!-- center blue mountain -->
<path d="M400,219 L412,213 L430,208.5 L444,214 L460,222 L480,230 L500,237 L488,246 L470,256 L456,263 L440,252 L424,240 L410,230 Z" fill="#3f5a8a"/>
<path d="M430,209 L444,214 L460,222 L480,230 L500,237 L480,240 L462,234 L446,224 Z" fill="#2f4573" opacity="0.8" filter="url(#t8b1)"/>
<!-- M1 snow (right behind person) -->
<path d="M280,199 L290,200 L310,200 L330,198 L348,187 L358,186 L370,190 L382,196 L398,191 L410,196 L414,206 L402,218 L390,228 L376,234 L360,246 L350,242 L330,234 L310,236 L290,232 L280,228 Z" fill="#e9edf5"/>
<g fill="#9db0d0" opacity="0.8" filter="url(#t8b1)">
<path d="M334,198 L346,192 L350,204 L360,214 L372,222 L364,230 L350,226 L340,214 Z"/>
<path d="M372,194 L384,200 L396,210 L404,214 L392,224 L384,214 Z"/>
<path d="M296,204 L312,206 L322,216 L312,226 L298,222 Z"/>
<path d="M380,232 L392,228 L388,240 L376,244 Z"/>
</g>
<!-- M1 face darker parts -->
<path d="M290,236 L330,238 L360,248 L380,240 L392,232 L420,244 L456,262 L436,280 L414,298 L390,314 L370,334 L356,346 L333,346 L290,335 Z" fill="#344b7b" filter="url(#t8b1)"/>
<path d="M290,262 L320,274 L350,296 L372,318 L356,346 L333,346 L290,335 Z" fill="#283b65" opacity="0.85" filter="url(#t8b2)"/>
<path d="M392,232 L420,244 L456,262 L440,268 L416,256 L398,246 Z" fill="#425e90" opacity="0.8" filter="url(#t8b1)"/>
<path d="M386,268 L400,264 L414,266 L426,270 L420,280 L404,284 L390,282 Z" fill="#b5c3da" opacity="0.75" filter="url(#t8b2)"/>
<!-- dark band (front ridge shadow face) -->
<path d="M628.5,203 L610,208 L590,214 L570,219 L550,226 L530,232 L510,236 L500,237 L488,246 L470,256 L456,263 L436,280 L470,276 L500,272 L530,267 L550,252 L570.5,238 L590.5,226 L610.5,214 Z" fill="#273960"/>
<!-- snowy face -->
<path d="M628.5,203 L642,209 L676,216 L676,279 L620,281 L590,281 L560,276 L540,270 L530,266 L550,252 L570.5,238 L590.5,226 L610.5,214 Z" fill="url(#t8face)" filter="url(#t8b1)"/>
<path d="M600,262 L630,256 L676,252 L676,282 L620,284 L590,282 Z" fill="#53688f" opacity="0.55" filter="url(#t8b3)"/>
<!-- lower dark mass -->
<path d="M436,280 L470,276 L500,272 L530,267 L560,276 L590,281 L620,282 L676,280 L676,420 L340,420 L356,346 L372,330 L390,314 L414,298 Z" fill="url(#t8low)" filter="url(#t8b1)"/>
<g fill="#a9b7d0" opacity="0.55" filter="url(#t8b2)">
<path d="M432,288 L460,282 L490,280 L520,276 L540,280 L516,286 L486,290 L458,296 L440,300 Z"/>
<path d="M466,296 L486,294 L482,302 L468,304 Z"/>
</g>
<!-- M0 (left of person) -->
<path d="M75,271.5 L86,265 L103,253 L120,244.7 L137,237.8 L149,231 L163,224 L172,219 L180,212 L189,205 L193,201 L200,199 L218,200 L218,320 L189,306.5 L154.6,296 L120,284 Z" fill="url(#t8m0)"/>
<path d="M84,270 L110,256 L140,242 L170,226 L190,212 L178,230 L150,250 L124,268 L104,278 Z" fill="#22366a" opacity="0.75" filter="url(#t8b2)"/>
<path d="M150,270 L180,250 L200,236 L215,240 L215,312 L189,304 L160,295 Z" fill="#3a5384" opacity="0.8" filter="url(#t8b2)"/>
</g>
<!-- bushes -->
<g fill="#40282e" opacity="0.5" filter="url(#t8b1)">
<path d="M449,366 L451,344 L454,330 L457,328 L460,340 L463,356 L466,368 Z"/>
<ellipse cx="474" cy="366" rx="10" ry="5"/>
<path d="M504,376 L510,358 L520,350 L532,346 L546,350 L556,344 L562,360 L560,384 Z"/>
</g>
<g stroke="#3a4c74" stroke-width="1.4" opacity="0.5" fill="none" filter="url(#t8b1)">
<path d="M560,262 L585,242 L610,224 M575,272 L600,252 L630,232 M600,276 L625,258 L650,246 M545,268 L565,250"/>
</g>
<!-- snow slope -->
<path d="M0,249 L17,255 L34,262 L51.5,267 L75.6,272 L103,279 L120,284 L137.4,291 L154.6,296 L171.7,301.4 L189,306.5 L221.5,318.5 L240.4,323.7 L257.6,330.6 L281.7,335.7 L310,341 L333,346 L376,357 L420,366 L462,374 L505,382 L548,389 L600,395 L656,400 L656,437 L0,437 Z" fill="#f8f9fc"/>
<!-- grass patches -->
<g fill="#b09a7c" opacity="0.75" filter="url(#t8b1)">
<ellipse cx="28" cy="259" rx="8" ry="3.5"/>
<ellipse cx="8" cy="254" rx="7" ry="3"/>
<ellipse cx="14" cy="264" rx="6" ry="1.5"/>
<ellipse cx="60" cy="271" rx="8" ry="2"/>
<ellipse cx="98" cy="283" rx="8" ry="2"/>
<ellipse cx="135" cy="293" rx="10" ry="2.5"/>
<ellipse cx="165" cy="302" rx="8" ry="2"/>
</g>
<!-- snow shadows -->
<g fill="#c7d0e4" opacity="0.85" filter="url(#t8b3)">
<path d="M0,344 L40,350 L90,358 L140,366 L188,372 L200,382 L150,378 L100,370 L50,362 L0,358 Z"/>
<ellipse cx="20" cy="300" rx="14" ry="4"/>
<ellipse cx="90" cy="318" rx="16" ry="4"/>
<ellipse cx="150" cy="342" rx="18" ry="4"/>
<ellipse cx="40" cy="395" rx="16" ry="5"/>
<ellipse cx="150" cy="410" rx="18" ry="4"/>
<ellipse cx="290" cy="392" rx="14" ry="4"/>
<ellipse cx="320" cy="412" rx="16" ry="4"/>
<ellipse cx="370" cy="425" rx="20" ry="4"/>
<ellipse cx="232" cy="398" rx="26" ry="5"/>
<ellipse cx="480" cy="430" rx="22" ry="4"/>
<ellipse cx="100" cy="428" rx="20" ry="4"/>
</g>

<g stroke="#15171c" stroke-linecap="round" fill="none">
<path d="M197.5,212 L196,262 L194,330 L192.5,362" stroke-width="2.2"/>
<path d="M188,362 L198,364" stroke-width="1.6"/>
<path d="M235,270 L244,325 L252,369" stroke-width="1.8"/>
<path d="M246,368 L256,371" stroke-width="1.6"/>
<path d="M273,236 L280,254 L293,272" stroke-width="1.6"/>
</g>
<path d="M212,235 L277,235 L278,258 L275,282 L277,305 L279,322 L279,345 L278,362 L273,377 L255,373 L256,343 L253,315 L251,295 L248,262 L240,272 L231,287 L222,300 L218,310 L220,325 L223,340 L228,364 L208,366 L204,345 L197,322 L190,300 L189,289 L194,278 L202,268 L208,252 Z" fill="#5d5b55"/>
<path d="M212,235 L240,235 L236,255 L222,280 L210,296 L196,310 L190,300 L189,289 L194,278 L202,268 L208,252 Z" fill="#6e6c65" opacity="0.6"/>
<path d="M262,240 L277,238 L279,322 L278,362 L268,366 L268,300 Z" fill="#48463f" opacity="0.55"/>
<path d="M206,362 L228,362 L229,376 L228,384 L215,384 L200,380 L188,376 L187,371 L196,367 Z" fill="#2a2624"/>
<path d="M208,372 L228,370 L228,382 L212,381 Z" fill="#6b4a36" opacity="0.8"/>
<path d="M254,370 L273,375 L272,388 L262,389 L250,384 L248,378 Z" fill="#2a2624"/>
<path d="M262,380 L272,382 L271,388 L262,387 Z" fill="#6b4a36" opacity="0.8"/>
<path d="M229,128 L251,126 L262,146 L276,160 L278,234 L211,236 L212,212 L203,212 L195,206 L195,189 L200,167 L209,144 L220,134 Z" fill="#1b6bbd"/>
<path d="M212,150 L222,142 L228,150 L226,200 L222,214 L213,212 L204,204 L205,180 Z" fill="#15191f"/>
<ellipse cx="193" cy="198" rx="2.5" ry="4" fill="#c99a8a"/>
<path d="M250,140 L258,137 L266,139 L276,143 L286,150 L294,160 L300,174 L303,190 L304,206 L302,218 L296,225 L284,229 L270,230.5 L252,227 L246,215 L246,160 Z" fill="#0d0e12"/>
<path d="M270,126 L278,127 L286,133 L292,143 L297,156 L302,172 L306,190 L306,206 L303,216 L299,202 L295,184 L289,166 L282,152 L274,141 L271,133 Z" fill="#23262d"/>
<path d="M274.5,131 L282,137.5 L289,149.5 L295,165 L300,183 L303.5,202" stroke="#9fb0c9" stroke-width="2.4" stroke-dasharray="1.6 2.2" fill="none" opacity="0.75"/><path d="M279,131 L286.5,140 L293.5,156 L298.5,174 L302.5,192" stroke="#8797b0" stroke-width="1.2" stroke-dasharray="1.4 2" fill="none" opacity="0.7"/>
<path d="M262,142 L270,156 L277,176 L282,196 M256,150 L262,170 L266,190" stroke="#5a5f6a" stroke-width="1.1" fill="none" opacity="0.7"/>
<path d="M240.5,126 C248,130 254,145 253.5,160 C253,185 248,205 243,222 C241,230 238,235 235.5,235 C232,234 229,226 226,214 C222,198 219,178 219.5,160 C220,145 230,130 240.5,126 Z" fill="#565a63" stroke="#a9aeb6" stroke-width="1.7"/>
<path d="M234,136 L240,134 L246,138 L244,142 L232,142 Z" fill="#c9ccd2" opacity="0.8"/>
<path d="M224,158 L232,160 L232,182 L226,186 L223,172 Z M241,160 L250,157 L250,172 L246,186 L241,182 Z M226,190 L232,186 L233,206 L229,212 Z M241,186 L246,190 L243,210 L240,206 Z M232,212 L240,212 L238,226 L234,226 Z" fill="#24262c" opacity="0.9"/>
<path d="M236.5,158 L236.5,226 M232,184 L241,184 M230,210 L242,209" stroke="#b4b8c0" stroke-width="1.1" fill="none" opacity="0.9"/>
<rect x="231" y="143.5" width="12" height="13.5" rx="1.5" fill="#15161a"/>
<path d="M256,219 L261.5,208 L266.5,206.5 L268,210 L260,222 Z" fill="none" stroke="#b9c23a" stroke-width="1.1"/>
<rect x="271" y="222" width="19" height="3.2" fill="#e6e6e6" opacity="0.9"/>
<ellipse cx="237.5" cy="111.5" rx="16" ry="16" fill="#111216"/>
<path d="M222,112 L253,112 L253,124 L248,128 L230,128 L223,124 Z" fill="#111216"/>
</g></svg><div style="position:absolute;left:0;top:0;width:110px;height:74px;background:rgba(150,160,180,0.18)"></div><svg style="position:absolute;left:38.6px;top:20.5px" width="32" height="32" viewBox="0 0 32 32"><circle cx="16" cy="16" r="14.6" fill="#1a2230" fill-opacity="0.92" stroke="#d3d7dd" stroke-width="2.2"/><text x="16" y="23.4" text-anchor="middle" font-family="Liberation Sans,sans-serif" font-size="20.5" fill="#e4e6ea">R</text></svg></div>
<span class="t" style="left:238.20px;top:901.35px;font:400 14px/1 'Liberation Sans',sans-serif;color:#c9d1dd;letter-spacing:0.194px;-webkit-text-stroke:0.3px #c9d1dd;">Original</span>
<span class="t" style="left:361.70px;top:901.35px;font:400 14px/1 'Liberation Sans',sans-serif;color:#fff;letter-spacing:0.229px;-webkit-text-stroke:0.3px #fff;">Banner (tall)</span>
<span class="t" style="left:495.00px;top:901.35px;font:400 14px/1 'Liberation Sans',sans-serif;color:#fff;letter-spacing:0.137px;-webkit-text-stroke:0.3px #fff;">Banner (wide)</span>
<span class="t" style="left:659.60px;top:901.35px;font:400 14px/1 'Liberation Sans',sans-serif;color:#fff;letter-spacing:-0.156px;-webkit-text-stroke:0.3px #fff;">Circle</span>
<span class="t" style="left:780.40px;top:901.35px;font:400 14px/1 'Liberation Sans',sans-serif;color:#fff;letter-spacing:0.012px;-webkit-text-stroke:0.3px #fff;">Sharpened</span>
<span class="t" style="left:930.80px;top:901.35px;font:400 14px/1 'Liberation Sans',sans-serif;color:#fff;letter-spacing:-0.189px;-webkit-text-stroke:0.3px #fff;">Square</span>
<span class="t" style="left:1057.00px;top:901.35px;font:400 14px/1 'Liberation Sans',sans-serif;color:#fff;letter-spacing:0.354px;-webkit-text-stroke:0.3px #fff;">Thumbnail</span>
<span class="t" style="left:1194.60px;top:901.35px;font:400 14px/1 'Liberation Sans',sans-serif;color:#fff;letter-spacing:0.109px;-webkit-text-stroke:0.3px #fff;">Watermark</span>
<div style="position:absolute;left:186px;top:924px;width:1184px;height:17px;background:#f1f1f1;"></div>
<div style="position:absolute;left:203px;top:926px;width:1131px;height:13px;background:#c1c1c1;"></div>
<svg style="position:absolute;left:186px;top:924px" width="17" height="17" viewBox="0 0 17 17" fill="#a3a3a3"><path d="M6 8.5L10 4.5v8z"/></svg>
<svg style="position:absolute;left:1353px;top:924px" width="17" height="17" viewBox="0 0 17 17" fill="#505050"><path d="M11 8.5L7 4.5v8z"/></svg>
<div style="position:absolute;left:1370px;top:217px;width:40px;height:724px;background:#f0f4f9;"></div>
<div style="position:absolute;left:1370px;top:257px;width:40px;height:40px;background:#d8e3f6;"></div>
<div style="position:absolute;left:1370px;top:257px;width:2px;height:40px;background:#005ae6;"></div>
<svg style="position:absolute;left:1382px;top:229px;color:#2b303b" width="16" height="16" viewBox="0 0 24 24" fill="#2b303b" ><path d="M12 2C6.48 2 2 6.48 2 12s4.48 10 10 10 10-4.48 10-10S17.52 2 12 2zm1 15h-2v-6h2v6zm0-8h-2V7h2v2z"/></svg>
<svg style="position:absolute;left:1383.1px;top:272px;color:#1a66e8" width="14" height="10.2" viewBox="0 0 14 10.2" fill="#1a66e8" ><path d="M0 0h6.3v1.5H0zM7.7 0H14v1.5H7.7zM0 2.9h6.3v1.5H0zM7.7 2.9H14v1.5H7.7zM0 5.8h6.3v1.5H0zM7.7 5.8H14v1.5H7.7zM0 8.7h6.3v1.5H0zM7.7 8.7H14v1.5H7.7z"/></svg>
<svg style="position:absolute;left:1382.5px;top:310px;color:#2b303b" width="15" height="14" viewBox="0 0 15 14" fill="#2b303b" ><g fill="none" stroke="currentColor" stroke-width="1.35" stroke-linecap="round"><path d="M5.5 0.7H2.2A1.5 1.5 0 0 0 0.7 2.2V8.6M0.7 11V11.8A1.5 1.5 0 0 0 2.2 13.3H5.5M8 13.3H12.8A1.5 1.5 0 0 0 14.3 11.8V11M14.3 8.6V2.2A1.5 1.5 0 0 0 12.8 0.7H8"/></g><path fill="currentColor" d="M3.2 11.2l2.6-3.3 1.7 2.1 1.2-1.5 2.6 2.7zM10.7 3.2h.9v1.1h1.1v.9h-1.1v1.1h-.9V5.2H9.6v-.9h1.1z"/></svg>
<svg style="position:absolute;left:1380.4px;top:347.3px;color:#2b303b" width="19.4" height="19.4" viewBox="0 0 24 24" fill="#2b303b" ><path d="M21 6h-2v9H6v2c0 .55.45 1 1 1h11l4 4V7c0-.55-.45-1-1-1zm-4 6V3c0-.55-.45-1-1-1H3c-.55 0-1 .45-1 1v14l4-4h10c.55 0 1-.45 1-1z"/></svg>
<svg style="position:absolute;left:1377.4px;top:900.3px;color:#000" width="24" height="24" viewBox="0 0 24 24" fill="#000" ><path d="M10 6L8.59 7.41 13.17 12l-4.58 4.59L10 18l6-6z"/></svg>
<div style="position:absolute;left:1410px;top:217px;width:293px;height:724px;background:#fff;"></div>
<span class="t" style="left:1426.10px;top:235.86px;font:400 18px/1 'Liberation Sans',sans-serif;color:#000;letter-spacing:0.221px;-webkit-text-stroke:0.35px #000;">Metadata</span>
<div style="position:absolute;left:1410px;top:272px;width:293px;height:1px;background:#c6d2e3;"></div>
<span class="t" style="left:1426.00px;top:287.35px;font:400 14px/1 'Liberation Sans',sans-serif;color:#17191c;transform:scaleX(0.9536);transform-origin:0 0;-webkit-text-stroke:0.3px #17191c;">Tags</span>
<svg style="position:absolute;left:1661px;top:282.79999999999995px;color:#000" width="24" height="24" viewBox="0 0 24 24" fill="#000" ><path d="M12 8l-6 6 1.41 1.41L12 10.83l4.59 4.58L18 14z"/></svg>
<div style="position:absolute;left:1410px;top:317px;width:293px;height:4px;background:linear-gradient(rgba(60,70,90,0.16),rgba(60,70,90,0));"></div>
<span class="t" style="left:1567.90px;top:289.14px;font:400 12px/1 'Liberation Sans',sans-serif;color:#0c5fe0;letter-spacing:0.050px;-webkit-text-stroke:0.25px #0c5fe0;">Auto tags</span>
<svg style="position:absolute;left:1630.5px;top:289.9px;color:#0c63e8" width="5.2" height="10.6" viewBox="0 0 5.2 10.6" fill="#0c63e8" ><path d="M3.6 0L0.2 5.6 2.5 5.5 1.6 10.6 5 4.4 2.8 4.6z"/></svg>
<div class="inp" style="left:1426px;top:329px;width:261px;height:28px"></div>
<span class="t" style="left:1434.00px;top:336.84px;font:400 12px/1 'Liberation Sans',sans-serif;color:#9aa6ba;letter-spacing:-0.036px;">Add tags. Press &#x27;Enter&#x27; or &#x27;Tab&#x27; between e...</span>
<div style="position:absolute;left:1410px;top:369px;width:293px;height:1px;background:#c6d2e3;"></div>
<span class="t" style="left:1426.00px;top:383.75px;font:400 14px/1 'Liberation Sans',sans-serif;color:#17191c;letter-spacing:0.189px;-webkit-text-stroke:0.3px #17191c;">Contextual metadata</span>
<svg style="position:absolute;left:1661px;top:379.4px;color:#000" width="24" height="24" viewBox="0 0 24 24" fill="#000" ><path d="M12 8l-6 6 1.41 1.41L12 10.83l4.59 4.58L18 14z"/></svg>
<div style="position:absolute;left:1410px;top:414px;width:293px;height:4px;background:linear-gradient(rgba(60,70,90,0.16),rgba(60,70,90,0));"></div>
<span class="t" style="left:1426.00px;top:436.34px;font:400 12px/1 'Liberation Sans',sans-serif;color:#535c69;letter-spacing:0.147px;">Title (caption)</span>
<div class="inp" style="left:1518px;top:428px;width:169px;height:28px"></div>
<span class="t" style="left:1525.40px;top:436.34px;font:400 12px/1 'Liberation Sans',sans-serif;color:#9aa6ba;letter-spacing:0.253px;">Add a title</span>
<span class="t" style="left:1426.00px;top:476.04px;font:400 12px/1 'Liberation Sans',sans-serif;color:#535c69;letter-spacing:0.058px;">Description</span>
<span class="t" style="left:1426.00px;top:491.64px;font:400 12px/1 'Liberation Sans',sans-serif;color:#535c69;letter-spacing:0.208px;">(alt)</span>
<div class="inp" style="left:1518px;top:467px;width:169px;height:46px"></div>
<span class="t" style="left:1525.40px;top:476.04px;font:400 12px/1 'Liberation Sans',sans-serif;color:#9aa6ba;letter-spacing:0.198px;">Add a description</span>
<svg style="position:absolute;left:1676px;top:502px" width="10" height="10" viewBox="0 0 10 10" stroke="#222" stroke-width="0.9"><path d="M1.5 9.5L9.5 1.5M5.5 9.5L9.5 5.5"/></svg>
<div class="inp" style="left:1426px;top:534px;width:74px;height:28px"></div>
<span class="t" style="left:1434.20px;top:541.14px;font:400 12px/1 'Liberation Sans',sans-serif;color:#9aa6ba;transform:scaleX(0.9092);transform-origin:0 0;">Key</span>
<div class="inp" style="left:1518px;top:534px;width:137px;height:28px"></div>
<span class="t" style="left:1525.40px;top:541.14px;font:400 12px/1 'Liberation Sans',sans-serif;color:#9aa6ba;letter-spacing:-0.100px;">Value</span>
<div style="position:absolute;left:1659px;top:534px;width:28px;height:28px;background:#f0f3f8;border-radius:4px"></div>
<svg style="position:absolute;left:1664px;top:539px;color:#b3bac6" width="18" height="18" viewBox="0 0 24 24" fill="#b3bac6" ><path d="M19 13h-6v6h-2v-6H5v-2h6V5h2v6h6v2z"/></svg>
<div style="position:absolute;left:1410px;top:578px;width:293px;height:1px;background:#c6d2e3;"></div>
<span class="t" style="left:1426.00px;top:592.95px;font:400 14px/1 'Liberation Sans',sans-serif;color:#17191c;letter-spacing:0.126px;-webkit-text-stroke:0.3px #17191c;">Embedded metadata</span>
<svg style="position:absolute;left:1661px;top:588.0px;color:#000" width="24" height="24" viewBox="0 0 24 24" fill="#000" ><path d="M12 8l-6 6 1.41 1.41L12 10.83l4.59 4.58L18 14z"/></svg>
<div style="position:absolute;left:1410px;top:623px;width:293px;height:4px;background:linear-gradient(rgba(60,70,90,0.16),rgba(60,70,90,0));"></div>
<div class="inp" style="left:1426px;top:635px;width:261px;height:28px"></div>
<span class="t" style="left:1433.40px;top:642.54px;font:400 12px/1 'Liberation Sans',sans-serif;color:#9aa6ba;letter-spacing:0.094px;">Filter data</span>
<svg style="position:absolute;left:1663.6px;top:641px;color:#17191c" width="16" height="16" viewBox="0 0 24 24" fill="#17191c" ><path d="M15.5 14h-.79l-.28-.27C15.41 12.59 16 11.11 16 9.5 16 5.91 13.09 3 9.5 3S3 5.91 3 9.5 5.91 16 9.5 16c1.61 0 3.09-.59 4.23-1.57l.27.28v.79l5 4.99L20.49 19l-4.99-5zm-6 0C7.01 14 5 11.99 5 9.5S7.01 5 9.5 5 14 7.01 14 9.5 11.99 14 9.5 14z"/></svg>
<div style="position:absolute;left:1426px;top:679px;width:261px;height:30px;background:#f0f4f9;"></div>
<span class="t" style="left:1431.20px;top:687.74px;font:400 12px/1 'Liberation Sans',sans-serif;color:#17191c;transform:scaleX(0.9169);transform-origin:0 0;">JFIFVersion</span>
<span class="t" style="left:1517.30px;top:687.74px;font:400 12px/1 'Liberation Sans',sans-serif;color:#17191c;transform:scaleX(0.8178);transform-origin:0 0;">1.01</span>
<span class="t" style="left:1431.20px;top:717.74px;font:400 12px/1 'Liberation Sans',sans-serif;color:#17191c;letter-spacing:0.149px;">ResolutionUni</span>
<span class="t" style="left:1431.20px;top:733.64px;font:400 12px/1 'Liberation Sans',sans-serif;color:#17191c;">t</span>
<span class="t" style="left:1517.30px;top:717.74px;font:400 12px/1 'Liberation Sans',sans-serif;color:#17191c;letter-spacing:0.082px;">inches</span>
<div style="position:absolute;left:1426px;top:755px;width:261px;height:30px;background:#f0f4f9;"></div>
<span class="t" style="left:1431.20px;top:763.74px;font:400 12px/1 'Liberation Sans',sans-serif;color:#17191c;letter-spacing:-0.041px;">XResolution</span>
<span class="t" style="left:1517.30px;top:763.74px;font:400 12px/1 'Liberation Sans',sans-serif;color:#17191c;transform:scaleX(0.8016);transform-origin:0 0;">72</span>
<span class="t" style="left:1431.20px;top:793.74px;font:400 12px/1 'Liberation Sans',sans-serif;color:#17191c;letter-spacing:-0.041px;">YResolution</span>
<span class="t" style="left:1517.30px;top:793.74px;font:400 12px/1 'Liberation Sans',sans-serif;color:#17191c;transform:scaleX(0.8016);transform-origin:0 0;">72</span>
<div style="position:absolute;left:1426px;top:815px;width:261px;height:46px;background:#f0f4f9;"></div>
<span class="t" style="left:1431.20px;top:823.74px;font:400 12px/1 'Liberation Sans',sans-serif;color:#17191c;letter-spacing:0.127px;">ProfileDescript</span>
<span class="t" style="left:1431.20px;top:839.64px;font:400 12px/1 'Liberation Sans',sans-serif;color:#17191c;">ion</span>
<span class="t" style="left:1517.30px;top:823.74px;font:400 12px/1 'Liberation Sans',sans-serif;color:#17191c;transform:scaleX(0.8529);transform-origin:0 0;">sRGB IEC61966-2.1</span>
<span class="t" style="left:1431.20px;top:869.74px;font:400 12px/1 'Liberation Sans',sans-serif;color:#17191c;letter-spacing:-0.211px;">Colorspace</span>
<span class="t" style="left:1517.30px;top:869.74px;font:400 12px/1 'Liberation Sans',sans-serif;color:#17191c;transform:scaleX(0.8345);transform-origin:0 0;">RGB</span>
<div style="position:absolute;left:1410px;top:885px;width:293px;height:56px;background:#fff;"></div>
<div style="position:absolute;left:1410px;top:881.5px;width:293px;height:3.5px;background:linear-gradient(rgba(60,70,90,0),rgba(60,70,90,0.16));"></div>
<div style="position:absolute;left:1613px;top:893px;width:74px;height:40px;background:#bfd3f6;border-radius:4px"></div>
<span class="t" style="left:1632.60px;top:905.26px;font:700 16px/1 'Liberation Sans',sans-serif;color:#fff;transform:scaleX(0.9126);transform-origin:0 0;">Save</span>
<div style="position:absolute;left:1703px;top:217px;width:17px;height:724px;background:#f1f1f1;"></div>
<div style="position:absolute;left:1705px;top:234px;width:13px;height:647px;background:#c1c1c1;"></div>
<svg style="position:absolute;left:1703px;top:217px" width="17" height="17" viewBox="0 0 17 17" fill="#a3a3a3"><path d="M8.5 6L4.5 10h8z"/></svg>
<svg style="position:absolute;left:1703px;top:923px" width="17" height="17" viewBox="0 0 17 17" fill="#505050"><path d="M8.5 11L4.5 7h8z"/></svg>
<div style="position:absolute;left:1370px;top:217px;width:350px;height:5px;background:linear-gradient(rgba(30,40,60,0.32),rgba(30,40,60,0));"></div>
</body></html>
